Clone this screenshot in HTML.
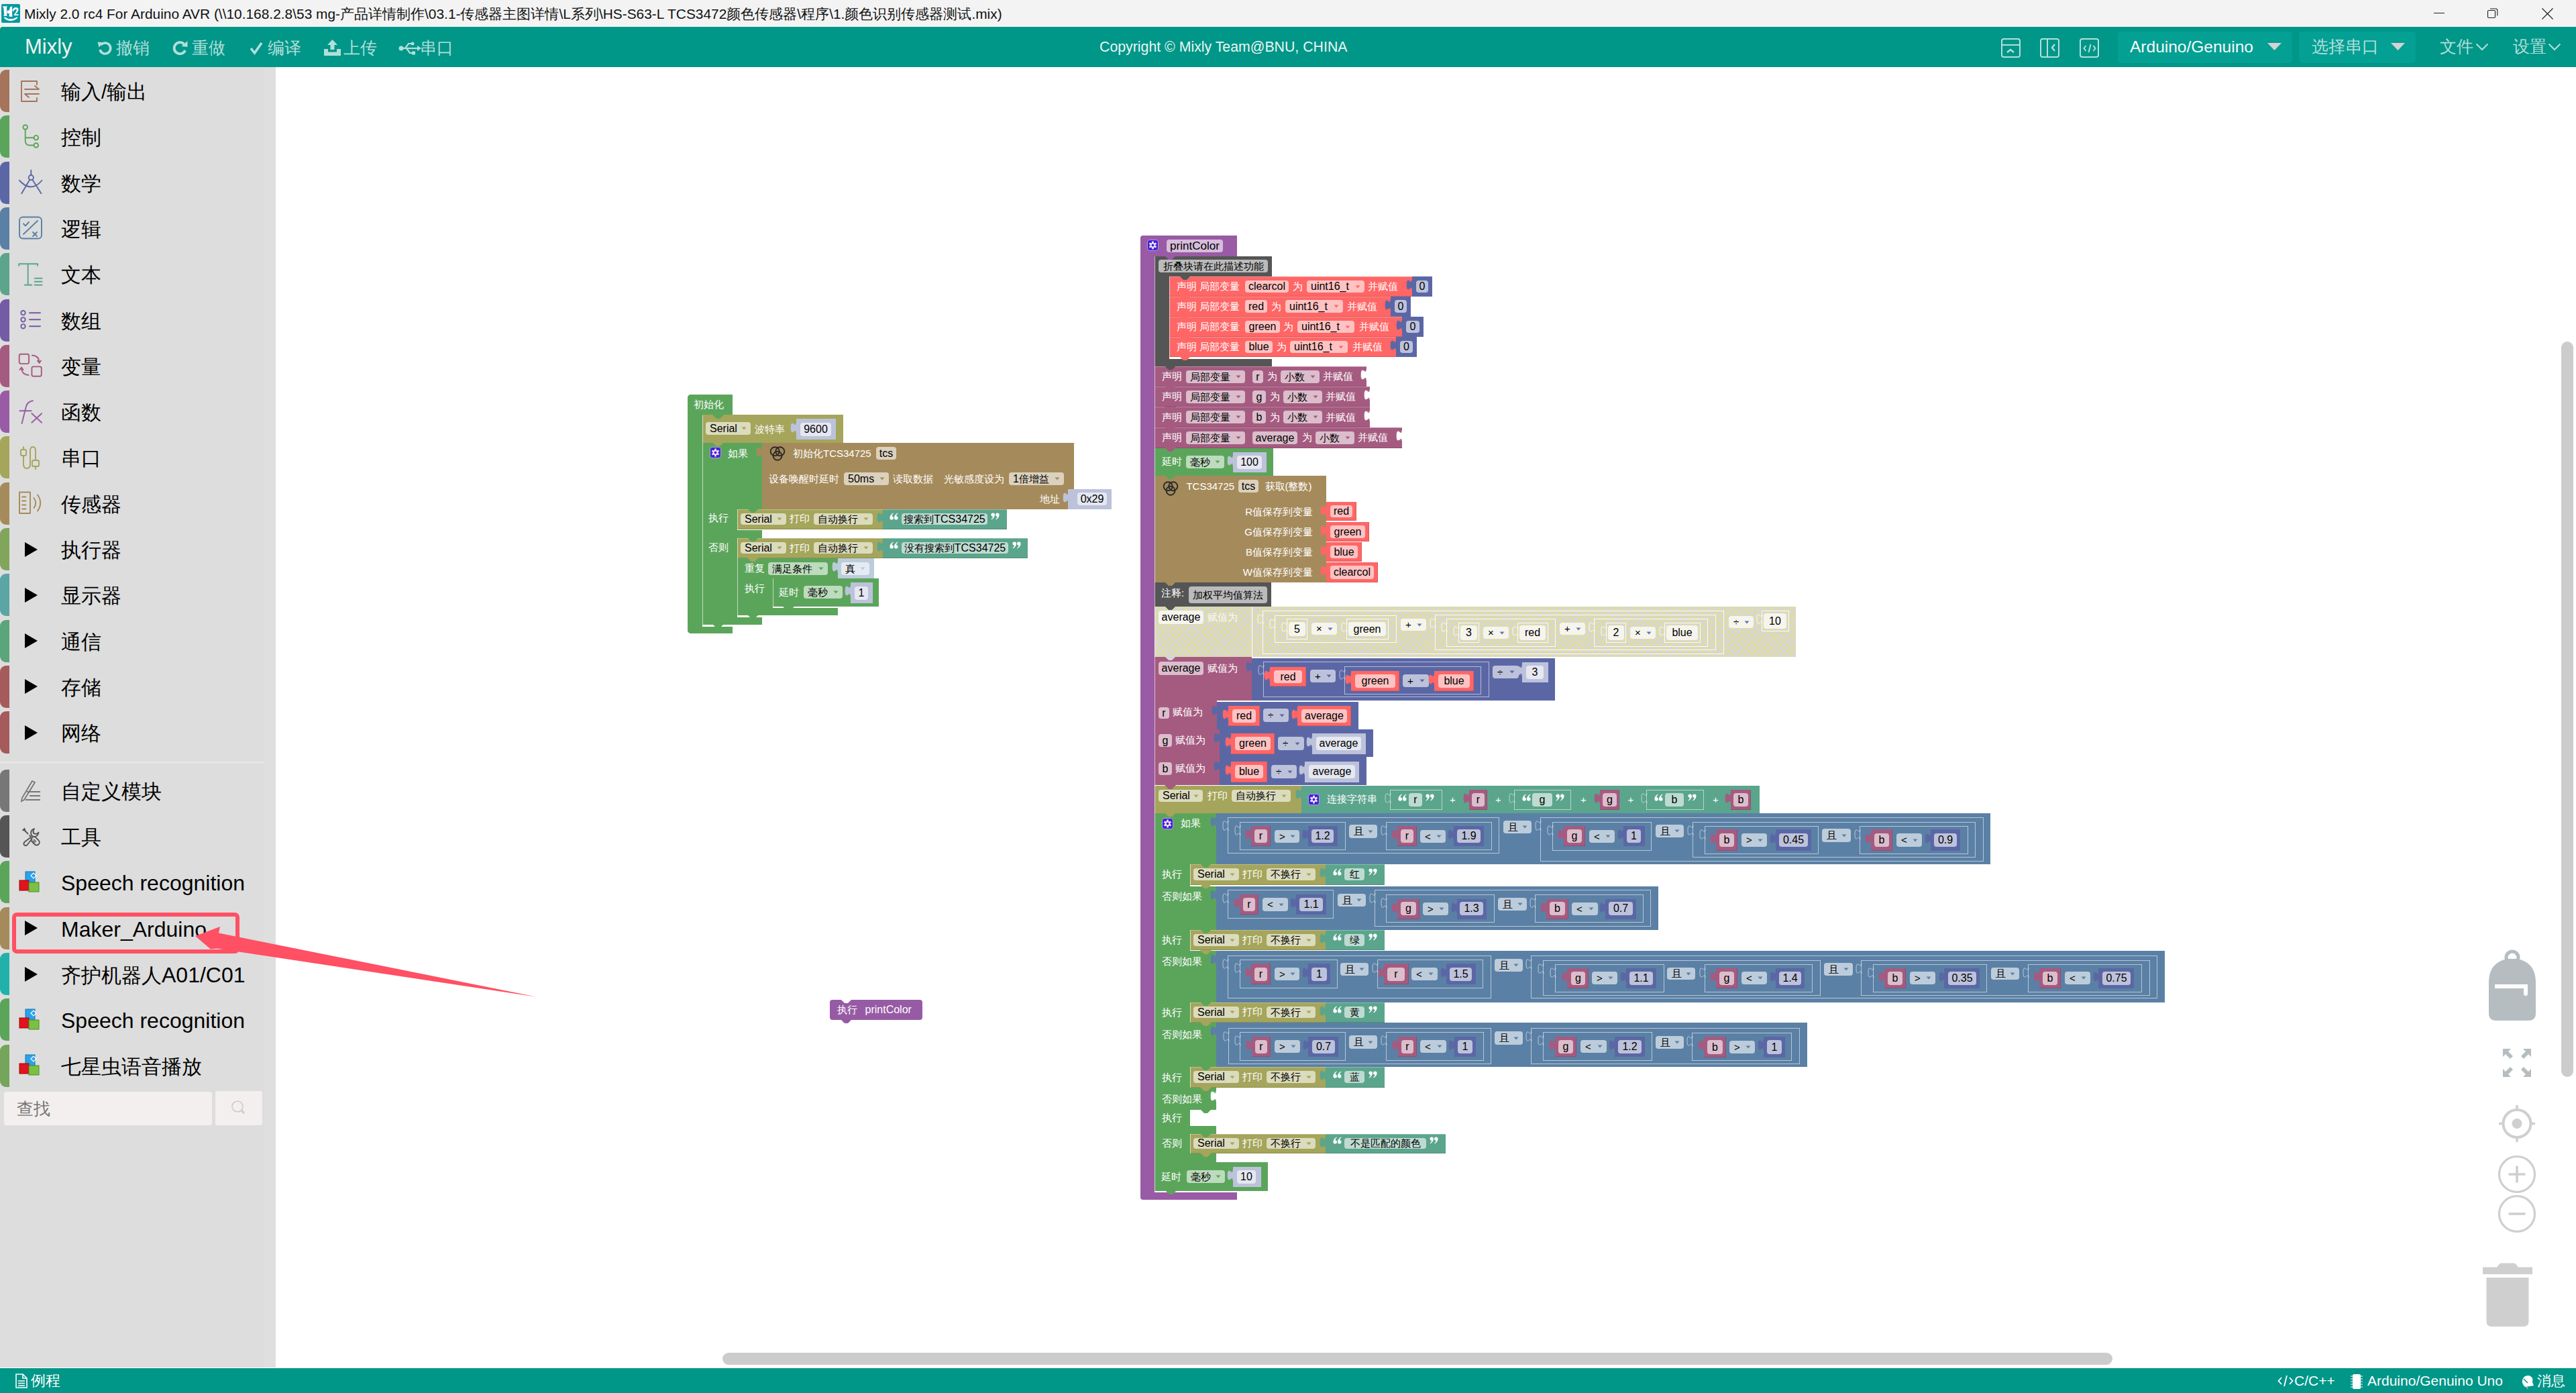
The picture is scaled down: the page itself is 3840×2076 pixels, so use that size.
<!DOCTYPE html><html><head><meta charset="utf-8"><style>html,body{margin:0;padding:0;width:3840px;height:2076px;overflow:hidden;background:#fff;}body{position:relative;font-family:"Liberation Sans",sans-serif;}.b{position:absolute;}.t{position:absolute;white-space:nowrap;}</style></head><body>
<div style="position:absolute;left:0;top:0;width:3840px;height:40px;background:#f3f3f3"></div>
<svg style="position:absolute;left:2px;top:6px" width="28" height="28" viewBox="0 0 28 28"><rect x="0" y="0" width="28" height="28" rx="2" fill="#069aa0"/><path d="M1.2 3.6 L8.9 3.2 L8.1 4.9 L8.1 16.7 L8.9 16.7 L8.9 17.8 L2.9 17.8 L3.4 16.7 L4.3 16.7 L3.2 5.2 Z" fill="#fff"/><path d="M13 4.5 L16.1 3.2 L16.1 16.8 L17 18.7 L11.5 18.7 L11.8 14 L8.4 14 L8.8 9.5 L11.8 9.5 Z" fill="#fff"/><path d="M16.4 9 Q18 5 21.5 5 Q25.6 5.3 25.6 8.5 Q25 12 20.8 15.2 L25.5 15.2 L25.5 17 L18.7 17 L19 15.5 Q22 12 22.8 9.5 Q23 7.5 21.5 7.8 Q19 8.5 17.5 11.5 Z" fill="#fff"/><path d="M3.6 20.4 L5.2 19.6 Q13.5 25.2 23.2 19.4 L24.6 20.4 Q13.5 29.6 3.6 20.4 Z" fill="#fff"/></svg>
<div style="position:absolute;left:36px;top:4px;height:34px;line-height:34px;font-size:20.7px;color:#111;white-space:nowrap"><span style="font-size:1.01em">Mixly 2.0 rc4 For Arduino AVR (\\10.168.2.8\53 mg-</span>产品详情制作<span style="font-size:1.01em">\03.1-</span>传感器主图详情<span style="font-size:1.01em">\L</span>系列<span style="font-size:1.01em">\HS-S63-L TCS3472</span>颜色传感器<span style="font-size:1.01em">\</span>程序<span style="font-size:1.01em">\1.</span>颜色识别传感器测试<span style="font-size:1.01em">.mix)</span></div>
<div style="position:absolute;left:3628px;top:19px;width:16px;height:1px;background:#222"></div>
<svg style="position:absolute;left:3706px;top:10px" width="20" height="20" viewBox="0 0 20 20"><rect x="2.5" y="5.5" width="11" height="11" rx="1.5" fill="none" stroke="#222" stroke-width="1.1"/><path d="M6 3 H14.5 Q16.8 3 16.8 5.3 V13.5" fill="none" stroke="#222" stroke-width="1.1"/></svg>
<svg style="position:absolute;left:3788px;top:11px" width="20" height="20" viewBox="0 0 20 20"><path d="M1.5 1.5 L17.5 17.5 M17.5 1.5 L1.5 17.5" stroke="#222" stroke-width="1.2"/></svg>
<div style="position:absolute;left:0;top:40px;width:3840px;height:60px;background:#009688;border-top-left-radius:4px"></div>
<div style="position:absolute;left:37px;top:48px;height:44px;line-height:44px;font-size:31px;color:#eef5f0">Mixly</div>
<div style="position:absolute;left:173px;top:52px;height:40px;line-height:40px;font-size:24.5px;color:#b2dfdb">撤销</div>
<div style="position:absolute;left:286px;top:52px;height:40px;line-height:40px;font-size:24.5px;color:#b2dfdb">重做</div>
<div style="position:absolute;left:399px;top:52px;height:40px;line-height:40px;font-size:24.5px;color:#b2dfdb">编译</div>
<div style="position:absolute;left:512px;top:52px;height:40px;line-height:40px;font-size:24.5px;color:#b2dfdb">上传</div>
<div style="position:absolute;left:626px;top:52px;height:40px;line-height:40px;font-size:24.5px;color:#b2dfdb">串口</div>
<svg style="position:absolute;left:144px;top:59px" width="24" height="24" viewBox="0 0 24 24"><path d="M6.5 8 A8 8 0 1 1 5 15" fill="none" stroke="#b2dfdb" stroke-width="3.6"/><path d="M1.5 3.5 L10.5 4.5 L3.5 11.5 Z" fill="#b2dfdb"/></svg>
<svg style="position:absolute;left:257px;top:59px" width="24" height="24" viewBox="0 0 24 24"><path d="M17.5 7 A8.5 8.5 0 1 0 19 16" fill="none" stroke="#b2dfdb" stroke-width="3.8"/><path d="M22.5 2 L22.5 11 L13.5 10 Z" fill="#b2dfdb"/></svg>
<svg style="position:absolute;left:372px;top:61px" width="20" height="22" viewBox="0 0 20 22"><path d="M2 11 L7.5 18 L18 3" fill="none" stroke="#b2dfdb" stroke-width="3.6" stroke-linejoin="miter"/></svg>
<svg style="position:absolute;left:482px;top:58px" width="27" height="26" viewBox="0 0 27 26"><path d="M13.5 1 L21 9 L16.5 9 L16.5 16 L10.5 16 L10.5 9 L6 9 Z" fill="#b2dfdb"/><path d="M1 15 L7 15 L7 19.5 L20 19.5 L20 15 L26 15 L26 25 L1 25 Z" fill="#b2dfdb"/></svg>
<svg style="position:absolute;left:594px;top:62px" width="34" height="20" viewBox="0 0 34 20"><circle cx="4" cy="10" r="3.5" fill="#b2dfdb"/><path d="M4 10 H31" stroke="#b2dfdb" stroke-width="2.2"/><path d="M34 10 L28 6 L28 14 Z" fill="#b2dfdb"/><path d="M10 10 L15 3 H20" fill="none" stroke="#b2dfdb" stroke-width="2.2"/><circle cx="21" cy="3" r="2.5" fill="#b2dfdb"/><path d="M12 10 L17 17 H21" fill="none" stroke="#b2dfdb" stroke-width="2.2"/><rect x="20" y="14.5" width="5" height="5" fill="#b2dfdb"/></svg>
<div style="position:absolute;left:1639px;top:52px;height:36px;line-height:36px;font-size:21.3px;color:#eaf6f3;white-space:nowrap">Copyright © Mixly Team@BNU, CHINA</div>
<div style="position:absolute;left:2983px;top:57px;width:25px;height:25px;border:2.2px solid #b2dfdb;border-radius:4px"></div>
<div style="position:absolute;left:3041px;top:57px;width:25px;height:25px;border:2.2px solid #b2dfdb;border-radius:4px"></div>
<div style="position:absolute;left:3100px;top:57px;width:25px;height:25px;border:2.2px solid #b2dfdb;border-radius:4px"></div>
<div style="position:absolute;left:2985px;top:66px;width:25px;height:2px;background:#b2dfdb"></div>
<svg style="position:absolute;left:2989px;top:71px" width="16" height="10" viewBox="0 0 16 10"><path d="M3 7 L8 3 L13 7" fill="none" stroke="#b2dfdb" stroke-width="2.4"/></svg>
<div style="position:absolute;left:3051px;top:59px;width:2px;height:25px;background:#b2dfdb"></div>
<svg style="position:absolute;left:3054px;top:63px" width="14" height="16" viewBox="0 0 14 16"><path d="M9 3 L5 8 L9 13" fill="none" stroke="#b2dfdb" stroke-width="2.4"/></svg>
<svg style="position:absolute;left:3102px;top:61px" width="26" height="22" viewBox="0 0 26 22"><path d="M7.5 7 L4.5 11 L7.5 15 M18.5 7 L21.5 11 L18.5 15 M14.5 5 L11.5 17" fill="none" stroke="#b2dfdb" stroke-width="2"/></svg>
<div style="position:absolute;left:3157px;top:47px;width:260px;height:47px;background:#03a093;border-radius:5px"></div>
<div style="position:absolute;left:3175px;top:50px;height:40px;line-height:40px;font-size:24.5px;color:#fafafa;white-space:nowrap">Arduino/Genuino</div>
<svg style="position:absolute;left:3380px;top:64px" width="22" height="12"><path d="M0 0 H21 L10.5 11 Z" fill="#d3d3d3"/></svg>
<div style="position:absolute;left:3427px;top:47px;width:174px;height:47px;background:#03a093;border-radius:5px"></div>
<div style="position:absolute;left:3446px;top:50px;height:40px;line-height:40px;font-size:24.5px;color:#b2dfdb;white-space:nowrap">选择串口</div>
<svg style="position:absolute;left:3564px;top:64px" width="22" height="12"><path d="M0 0 H21 L10.5 11 Z" fill="#d3d3d3"/></svg>
<div style="position:absolute;left:3637px;top:50px;height:40px;line-height:40px;font-size:24.5px;color:#b2dfdb;white-space:nowrap">文件</div>
<div style="position:absolute;left:3746px;top:50px;height:40px;line-height:40px;font-size:24.5px;color:#b2dfdb;white-space:nowrap">设置</div>
<svg style="position:absolute;left:3690px;top:64px" width="20" height="12"><path d="M1.5 1.5 L10 10 L18.5 1.5" fill="none" stroke="#b2dfdb" stroke-width="2"/></svg>
<svg style="position:absolute;left:3798px;top:64px" width="20" height="12"><path d="M1.5 1.5 L10 10 L18.5 1.5" fill="none" stroke="#b2dfdb" stroke-width="2"/></svg>
<div style="position:absolute;left:0;top:100px;width:411px;height:1938px;background:#dddddd"></div>
<div style="position:absolute;left:393px;top:100px;width:18px;height:1938px;background:#dfdfdf"></div>
<div style="position:absolute;left:0;top:104.0px;width:14px;height:63px;background:#a5745b;border-radius:9px 0 0 9px"></div>
<svg style="position:absolute;left:26px;top:115.5px" width="40" height="40" viewBox="0 0 40 40"><path d="M29 5 H6 V35 H29 M29 5 V10 M29 35 V30" fill="none" stroke="#a5745b" stroke-width="1.9" stroke-linecap="round" stroke-linejoin="round"/><path d="M11 17 H32 M26 12 L32 17 M32 24 H11 L17 29" fill="none" stroke="#a5745b" stroke-width="1.9" stroke-linecap="round" stroke-linejoin="round"/></svg>
<div style="position:absolute;left:91px;top:116.0px;height:42px;line-height:42px;font-size:29.5px;color:#000;white-space:nowrap">输入/输出</div>
<div style="position:absolute;left:0;top:172.3px;width:14px;height:63px;background:#5ba55b;border-radius:9px 0 0 9px"></div>
<svg style="position:absolute;left:26px;top:183.8px" width="40" height="40" viewBox="0 0 40 40"><circle cx="11.7" cy="5.5" r="3.3" fill="none" stroke="#5ba55b" stroke-width="1.9" stroke-linecap="round" stroke-linejoin="round"/><path d="M11.7 8.8 V25 M11.7 21.2 H24.5 M11.7 25 Q11.7 32.5 18 32.5 H24.5" fill="none" stroke="#5ba55b" stroke-width="1.9" stroke-linecap="round" stroke-linejoin="round"/><circle cx="27.8" cy="21.2" r="3.3" fill="none" stroke="#5ba55b" stroke-width="1.9" stroke-linecap="round" stroke-linejoin="round"/><circle cx="27.8" cy="32.5" r="3.3" fill="none" stroke="#5ba55b" stroke-width="1.9" stroke-linecap="round" stroke-linejoin="round"/></svg>
<div style="position:absolute;left:91px;top:184.3px;height:42px;line-height:42px;font-size:29.5px;color:#000;white-space:nowrap">控制</div>
<div style="position:absolute;left:0;top:240.6px;width:14px;height:63px;background:#5b67a5;border-radius:9px 0 0 9px"></div>
<svg style="position:absolute;left:26px;top:252.1px" width="40" height="40" viewBox="0 0 40 40"><circle cx="20.3" cy="12.6" r="3.6" fill="none" stroke="#5b67a5" stroke-width="1.9" stroke-linecap="round" stroke-linejoin="round"/><path d="M20.3 1.8 V9 M18.3 15.8 L6.3 36.3 M22.3 15.8 L35.4 36.3 M3 17 Q20.3 36 36.4 17" fill="none" stroke="#5b67a5" stroke-width="1.9" stroke-linecap="round" stroke-linejoin="round"/></svg>
<div style="position:absolute;left:91px;top:252.6px;height:42px;line-height:42px;font-size:29.5px;color:#000;white-space:nowrap">数学</div>
<div style="position:absolute;left:0;top:308.9px;width:14px;height:63px;background:#5b80a5;border-radius:9px 0 0 9px"></div>
<svg style="position:absolute;left:26px;top:320.4px" width="40" height="40" viewBox="0 0 40 40"><rect x="3" y="3.5" width="33" height="32" rx="5" fill="none" stroke="#5b80a5" stroke-width="1.9" stroke-linecap="round" stroke-linejoin="round"/><path d="M9 29 L30 9 M9 13.5 L12 16.5 L17 11 M23 26 L29 32 M29 26 L23 32" fill="none" stroke="#5b80a5" stroke-width="1.9" stroke-linecap="round" stroke-linejoin="round"/></svg>
<div style="position:absolute;left:91px;top:320.9px;height:42px;line-height:42px;font-size:29.5px;color:#000;white-space:nowrap">逻辑</div>
<div style="position:absolute;left:0;top:377.2px;width:14px;height:63px;background:#5ba58c;border-radius:9px 0 0 9px"></div>
<svg style="position:absolute;left:26px;top:388.7px" width="40" height="40" viewBox="0 0 40 40"><path d="M2.2 4.3 H30 M2.2 4.3 V7 M30 4.3 V7 M15.7 4.3 V35.8 M10.8 35.8 H21.4 M25.7 25.8 H36.6 M25.7 30.7 H36.6 M25.7 35.8 H36.6" fill="none" stroke="#5ba58c" stroke-width="1.9" stroke-linecap="round" stroke-linejoin="round"/></svg>
<div style="position:absolute;left:91px;top:389.2px;height:42px;line-height:42px;font-size:29.5px;color:#000;white-space:nowrap">文本</div>
<div style="position:absolute;left:0;top:445.5px;width:14px;height:63px;background:#745ba5;border-radius:9px 0 0 9px"></div>
<svg style="position:absolute;left:26px;top:457.0px" width="40" height="40" viewBox="0 0 40 40"><circle cx="8.5" cy="9.2" r="3.2" fill="none" stroke="#745ba5" stroke-width="1.9" stroke-linecap="round" stroke-linejoin="round"/><circle cx="8.5" cy="19.3" r="3.2" fill="none" stroke="#745ba5" stroke-width="1.9" stroke-linecap="round" stroke-linejoin="round"/><circle cx="8.5" cy="29.3" r="3.2" fill="none" stroke="#745ba5" stroke-width="1.9" stroke-linecap="round" stroke-linejoin="round"/><path d="M18 9.2 H34 M18 19.3 H34 M18 29.3 H34" fill="none" stroke="#745ba5" stroke-width="1.9" stroke-linecap="round" stroke-linejoin="round"/></svg>
<div style="position:absolute;left:91px;top:457.5px;height:42px;line-height:42px;font-size:29.5px;color:#000;white-space:nowrap">数组</div>
<div style="position:absolute;left:0;top:513.8px;width:14px;height:63px;background:#a55b80;border-radius:9px 0 0 9px"></div>
<svg style="position:absolute;left:26px;top:525.3px" width="40" height="40" viewBox="0 0 40 40"><rect x="2.7" y="2.7" width="14.4" height="14.4" rx="2.5" fill="none" stroke="#a55b80" stroke-width="1.9" stroke-linecap="round" stroke-linejoin="round"/><rect x="21.4" y="21.4" width="14.4" height="14.4" rx="2.5" fill="none" stroke="#a55b80" stroke-width="1.9" stroke-linecap="round" stroke-linejoin="round"/><path d="M22 4.5 Q32 5 32.5 15 M30 12.5 L32.5 16 L35 12.5 M16.5 34 Q6.5 33.5 6 23.5 M3.5 26 L6 22.5 L8.5 26" fill="none" stroke="#a55b80" stroke-width="1.9" stroke-linecap="round" stroke-linejoin="round"/></svg>
<div style="position:absolute;left:91px;top:525.8px;height:42px;line-height:42px;font-size:29.5px;color:#000;white-space:nowrap">变量</div>
<div style="position:absolute;left:0;top:582.1px;width:14px;height:63px;background:#995ba5;border-radius:9px 0 0 9px"></div>
<svg style="position:absolute;left:26px;top:593.6px" width="40" height="40" viewBox="0 0 40 40"><path d="M6.6 37 L12.6 13 Q14.5 4.5 22.9 3.2 M3.5 18.3 H20.6 M21.4 22.2 L36.1 35.8 M36.1 22.2 L21.4 35.8" fill="none" stroke="#995ba5" stroke-width="1.9" stroke-linecap="round" stroke-linejoin="round"/></svg>
<div style="position:absolute;left:91px;top:594.1px;height:42px;line-height:42px;font-size:29.5px;color:#000;white-space:nowrap">函数</div>
<div style="position:absolute;left:0;top:650.4px;width:14px;height:63px;background:#a5a55b;border-radius:9px 0 0 9px"></div>
<svg style="position:absolute;left:26px;top:661.9px" width="40" height="40" viewBox="0 0 40 40"><rect x="5" y="8" width="8" height="9" rx="2" fill="none" stroke="#a5a55b" stroke-width="1.9" stroke-linecap="round" stroke-linejoin="round"/><path d="M9 4 V8 M9 17 V30 Q9 36 14 36 Q19 36 19 30 V10 Q19 4 23 4 Q27 4 27 10 V24" fill="none" stroke="#a5a55b" stroke-width="1.9" stroke-linecap="round" stroke-linejoin="round"/><rect x="22" y="24" width="10" height="9" rx="2" fill="none" stroke="#a5a55b" stroke-width="1.9" stroke-linecap="round" stroke-linejoin="round"/><path d="M27 33 V37" fill="none" stroke="#a5a55b" stroke-width="1.9" stroke-linecap="round" stroke-linejoin="round"/></svg>
<div style="position:absolute;left:91px;top:662.4px;height:42px;line-height:42px;font-size:29.5px;color:#000;white-space:nowrap">串口</div>
<div style="position:absolute;left:0;top:718.7px;width:14px;height:63px;background:#a58b5b;border-radius:9px 0 0 9px"></div>
<svg style="position:absolute;left:26px;top:730.2px" width="40" height="40" viewBox="0 0 40 40"><path d="M3 3.5 H19 V35 H3 Z M7 10.5 H12.5 M7 16.5 H12.5 M7 22.5 H12.5 M7 28.5 H12.5 M24.5 12 Q30 19.3 24.5 27 M30 7.5 Q38.5 19.3 30 31.5" fill="none" stroke="#a58b5b" stroke-width="1.9" stroke-linecap="round" stroke-linejoin="round"/></svg>
<div style="position:absolute;left:91px;top:730.7px;height:42px;line-height:42px;font-size:29.5px;color:#000;white-space:nowrap">传感器</div>
<div style="position:absolute;left:0;top:787.0px;width:14px;height:63px;background:#80a55b;border-radius:9px 0 0 9px"></div>
<svg style="position:absolute;left:36px;top:806.5px" width="22" height="24"><path d="M1 1 L20 12 L1 23 Z" fill="#000"/></svg>
<div style="position:absolute;left:91px;top:799.0px;height:42px;line-height:42px;font-size:29.5px;color:#000;white-space:nowrap">执行器</div>
<div style="position:absolute;left:0;top:855.3px;width:14px;height:63px;background:#5ba5a5;border-radius:9px 0 0 9px"></div>
<svg style="position:absolute;left:36px;top:874.8px" width="22" height="24"><path d="M1 1 L20 12 L1 23 Z" fill="#000"/></svg>
<div style="position:absolute;left:91px;top:867.3px;height:42px;line-height:42px;font-size:29.5px;color:#000;white-space:nowrap">显示器</div>
<div style="position:absolute;left:0;top:923.6px;width:14px;height:63px;background:#5ba57a;border-radius:9px 0 0 9px"></div>
<svg style="position:absolute;left:36px;top:943.1px" width="22" height="24"><path d="M1 1 L20 12 L1 23 Z" fill="#000"/></svg>
<div style="position:absolute;left:91px;top:935.6px;height:42px;line-height:42px;font-size:29.5px;color:#000;white-space:nowrap">通信</div>
<div style="position:absolute;left:0;top:991.9px;width:14px;height:63px;background:#a55b5b;border-radius:9px 0 0 9px"></div>
<svg style="position:absolute;left:36px;top:1011.4px" width="22" height="24"><path d="M1 1 L20 12 L1 23 Z" fill="#000"/></svg>
<div style="position:absolute;left:91px;top:1003.9px;height:42px;line-height:42px;font-size:29.5px;color:#000;white-space:nowrap">存储</div>
<div style="position:absolute;left:0;top:1060.2px;width:14px;height:63px;background:#a55b5b;border-radius:9px 0 0 9px"></div>
<svg style="position:absolute;left:36px;top:1079.7px" width="22" height="24"><path d="M1 1 L20 12 L1 23 Z" fill="#000"/></svg>
<div style="position:absolute;left:91px;top:1072.2px;height:42px;line-height:42px;font-size:29.5px;color:#000;white-space:nowrap">网络</div>
<div style="position:absolute;left:0;top:1135px;width:393px;height:1.5px;background:#e8e8e8"></div>
<div style="position:absolute;left:0;top:1146.8px;width:14px;height:63px;background:#777777;border-radius:9px 0 0 9px"></div>
<svg style="position:absolute;left:26px;top:1158.3px" width="40" height="40" viewBox="0 0 40 40"><path d="M10 34 L6 36 L7 31 L22 6 L26 8 Z M14 22 H34 M18 28 H34 M12 34 H34" fill="none" stroke="#777" stroke-width="1.8"/></svg>
<div style="position:absolute;left:91px;top:1158.8px;height:42px;line-height:42px;font-size:29.5px;color:#000;white-space:nowrap">自定义模块</div>
<div style="position:absolute;left:0;top:1215.1px;width:14px;height:63px;background:#555555;border-radius:9px 0 0 9px"></div>
<svg style="position:absolute;left:26px;top:1226.6px" width="40" height="40" viewBox="0 0 40 40"><path d="M7.3 10.2 L10.6 7 L12.4 11.9 Z" fill="#555" stroke="#555" stroke-width="1" stroke-linejoin="round"/><path d="M11.5 11.5 L16.2 16.2 M17.6 17.6 L20.6 20.6" stroke="#555" stroke-width="1.9"/><rect x="-7" y="-4.2" width="14" height="8.4" rx="4.2" transform="translate(26.6 26.3) rotate(45)" fill="none" stroke="#555" stroke-width="1.9"/><path d="M24.2 23.8 L28 27.6 M22.8 25.5 L26.3 29" stroke="#555" stroke-width="1.4"/><path d="M20.3 20.5 L11 27.5 Q8 30.5 10.5 32.5 Q13 34.5 15.5 31 L22 22.5" fill="none" stroke="#555" stroke-width="1.9"/><path d="M21.5 18.5 Q18.5 14 22 9.5 L25 8 Q22.5 11.5 24 14.5 Q26.5 17 30 15 L31.5 13.5 Q31 18.5 26.5 19.8 Q23.5 20.5 21.5 18.5 Z" fill="none" stroke="#555" stroke-width="1.9" stroke-linejoin="round"/></svg>
<div style="position:absolute;left:91px;top:1227.1px;height:42px;line-height:42px;font-size:29.5px;color:#000;white-space:nowrap">工具</div>
<div style="position:absolute;left:0;top:1283.4px;width:14px;height:63px;background:#5ba55b;border-radius:9px 0 0 9px"></div>
<svg style="position:absolute;left:26px;top:1294.9px" width="40" height="40" viewBox="0 0 40 40"><rect x="12" y="4" width="14" height="16" fill="#29a3e8" stroke="#1a73b8" stroke-width="1"/><rect x="3" y="17" width="14" height="15" fill="#e0141e" stroke="#a00" stroke-width="1"/><rect x="17" y="20" width="15" height="14" fill="#7ac143" stroke="#4a8a2a" stroke-width="1"/><path d="M24 6 L28 10 L24 14 L20 10 Z" fill="none" stroke="#fff" stroke-width="1.2"/></svg>
<div style="position:absolute;left:91px;top:1295.4px;height:42px;line-height:42px;font-size:29.5px;color:#000;white-space:nowrap"><span style="font-size:32px">Speech recognition</span></div>
<div style="position:absolute;left:0;top:1351.7px;width:14px;height:63px;background:#a58b5b;border-radius:9px 0 0 9px"></div>
<svg style="position:absolute;left:36px;top:1371.2px" width="22" height="24"><path d="M1 1 L20 12 L1 23 Z" fill="#000"/></svg>
<div style="position:absolute;left:91px;top:1363.7px;height:42px;line-height:42px;font-size:29.5px;color:#000;white-space:nowrap"><span style="font-size:32px">Maker_Arduino</span></div>
<div style="position:absolute;left:0;top:1420.0px;width:14px;height:63px;background:#20b2aa;border-radius:9px 0 0 9px"></div>
<svg style="position:absolute;left:36px;top:1439.5px" width="22" height="24"><path d="M1 1 L20 12 L1 23 Z" fill="#000"/></svg>
<div style="position:absolute;left:91px;top:1432.0px;height:42px;line-height:42px;font-size:29.5px;color:#000;white-space:nowrap">齐护机器人<span style="font-size:32px">A01/C01</span></div>
<div style="position:absolute;left:0;top:1488.3px;width:14px;height:63px;background:#5ba55b;border-radius:9px 0 0 9px"></div>
<svg style="position:absolute;left:26px;top:1499.8px" width="40" height="40" viewBox="0 0 40 40"><rect x="12" y="4" width="14" height="16" fill="#29a3e8" stroke="#1a73b8" stroke-width="1"/><rect x="3" y="17" width="14" height="15" fill="#e0141e" stroke="#a00" stroke-width="1"/><rect x="17" y="20" width="15" height="14" fill="#7ac143" stroke="#4a8a2a" stroke-width="1"/><path d="M24 6 L28 10 L24 14 L20 10 Z" fill="none" stroke="#fff" stroke-width="1.2"/></svg>
<div style="position:absolute;left:91px;top:1500.3px;height:42px;line-height:42px;font-size:29.5px;color:#000;white-space:nowrap"><span style="font-size:32px">Speech recognition</span></div>
<div style="position:absolute;left:0;top:1556.6px;width:14px;height:63px;background:#74a55b;border-radius:9px 0 0 9px"></div>
<svg style="position:absolute;left:26px;top:1568.1px" width="40" height="40" viewBox="0 0 40 40"><rect x="12" y="4" width="14" height="16" fill="#29a3e8" stroke="#1a73b8" stroke-width="1"/><rect x="3" y="17" width="14" height="15" fill="#e0141e" stroke="#a00" stroke-width="1"/><rect x="17" y="20" width="15" height="14" fill="#7ac143" stroke="#4a8a2a" stroke-width="1"/><path d="M24 6 L28 10 L24 14 L20 10 Z" fill="none" stroke="#fff" stroke-width="1.2"/></svg>
<div style="position:absolute;left:91px;top:1568.6px;height:42px;line-height:42px;font-size:29.5px;color:#000;white-space:nowrap">七星虫语音播放</div>
<div style="position:absolute;left:6px;top:1627px;width:310px;height:50px;background:#f2efee;border-radius:3px"></div>
<div style="position:absolute;left:25px;top:1634px;height:36px;line-height:36px;font-size:25px;color:#757575">查找</div>
<div style="position:absolute;left:321px;top:1626px;width:70px;height:51px;background:#f2efee;border-radius:3px"></div>
<svg style="position:absolute;left:340px;top:1636px" width="30" height="30"><circle cx="14" cy="13" r="8" fill="none" stroke="#ccc" stroke-width="1.6"/><path d="M19.5 18.5 L24 23" stroke="#ccc" stroke-width="3"/></svg>
<div style="position:absolute;left:0;top:2039px;width:3840px;height:37px;background:#009688"></div>
<svg style="position:absolute;left:22px;top:2046px" width="20" height="24" viewBox="0 0 20 24"><path d="M2 2 H12 L18 8 V22 H2 Z M12 2 V8 H18 M5 12 H15 M5 15.5 H15 M5 19 H15" fill="none" stroke="#ffffff" stroke-width="1.6"/></svg>
<div style="position:absolute;left:46px;top:2041px;height:34px;line-height:34px;font-size:21.5px;color:#ffffff">例程</div>
<svg style="position:absolute;left:3395px;top:2047px" width="24" height="22" viewBox="0 0 24 22"><path d="M6 6 L1.5 11 L6 16 M18 6 L22.5 11 L18 16 M14 3 L10 19" fill="none" stroke="#ffffff" stroke-width="1.8"/></svg>
<div style="position:absolute;left:3420px;top:2041px;height:34px;line-height:34px;font-size:21px;color:#ffffff;white-space:nowrap">C/C++</div>
<svg style="position:absolute;left:3503px;top:2046px" width="20" height="26" viewBox="0 0 20 26"><rect x="4" y="2" width="12" height="22" rx="2" fill="#ffffff"/><path d="M1 5 H4 M1 9 H4 M1 13 H4 M1 17 H4 M1 21 H4 M16 5 H19 M16 9 H19 M16 13 H19 M16 17 H19 M16 21 H19" stroke="#ffffff" stroke-width="1.2"/></svg>
<div style="position:absolute;left:3529px;top:2041px;height:34px;line-height:34px;font-size:21px;color:#ffffff;white-space:nowrap">Arduino/Genuino Uno</div>
<svg style="position:absolute;left:3756px;top:2047px" width="24" height="24" viewBox="0 0 24 24"><path d="M4 10 Q6 2 14 3 Q21 5 19 13 L21 18 L8 20 Q3 15 4 10 Z M10 20 Q10 23 13 22" fill="#ffffff"/><path d="M6 8 L12 14" stroke="#009688" stroke-width="1.5"/></svg>
<div style="position:absolute;left:3782px;top:2041px;height:34px;line-height:34px;font-size:21px;color:#ffffff;white-space:nowrap">消息</div>
<div class="b" style="left:1025.0px;top:588.0px;width:67.0px;height:30.0px;background:#5ba55b;border-radius:5px 0 0 0;"></div>
<div class="b" style="left:1025.0px;top:588.0px;width:22.0px;height:356.0px;background:#5ba55b;border-radius:5px 0 0 5px;"></div>
<div class="b" style="left:1025.0px;top:934.0px;width:67.0px;height:10.0px;background:#5ba55b;border-radius:0 0 0 5px;"></div>
<div class="t" style="left:1034.0px;top:591.0px;height:24px;line-height:24px;font-size:15px;color:#fff">初始化</div>
<div class="b" style="left:1047.0px;top:618.0px;width:210.0px;height:42.0px;background:#a5a55b;"></div>
<div class="b" style="left:1052.0px;top:629.0px;width:67.0px;height:19.0px;background:#dbdbbd;border-radius:4px;line-height:19.0px;padding-left:6px;box-sizing:border-box;font-size:15px;color:#000;white-space:nowrap;overflow:hidden"><span style="font-size:1.067em">Serial</span></div>
<svg class="b" style="left:1105.0px;top:636.0px" width="8" height="5"><path d="M0.5 0.5 H7.5 L4 4.5 Z" fill="#a5a55b"/></svg>
<div class="t" style="left:1124.6px;top:627.5px;height:24px;line-height:24px;font-size:15px;color:#fff">波特率</div>
<svg class="b" style="left:1178.4px;top:624.5px" width="10" height="22"><path d="M9 5 C9 15 1 -3 1 12.5 C1 28 9 10 9 20 Z" fill="#bdc2db" stroke="#bdc2db" stroke-width="0.6"/></svg>
<div class="b" style="left:1187.0px;top:624.0px;width:59.0px;height:31.0px;background:#bdc2db;"></div>
<div class="b" style="left:1193.0px;top:630.0px;width:46.0px;height:20.0px;background:#e5e7f1;border-radius:4px;line-height:20.0px;text-align:center;font-size:15px;color:#000;white-space:nowrap"><span style="font-size:1.067em">9600</span></div>
<svg class="b" style="left:1062.0px;top:617.5px" width="17" height="7"><path d="M0 0 H17 L11 6 H6 Z" fill="#5ba55b"/></svg>
<div class="b" style="left:1047.0px;top:660.0px;width:89.0px;height:99.0px;background:#5ba55b;"></div>
<div class="b" style="left:1047.0px;top:660.0px;width:52.0px;height:271.0px;background:#5ba55b;"></div>
<div class="b" style="left:1047.0px;top:790.0px;width:89.0px;height:12.0px;background:#5ba55b;"></div>
<div class="b" style="left:1047.0px;top:920.0px;width:89.0px;height:11.0px;background:#5ba55b;"></div>
<svg class="b" style="left:1062.0px;top:658.7px" width="17" height="7"><path d="M0 0 H17 L11 6 H6 Z" fill="#a5a55b"/></svg>
<svg class="b" style="left:1057.5px;top:666.0px" width="17" height="17" viewBox="0 0 17 17"><rect x="0.5" y="0.5" width="16" height="16" rx="3.5" fill="#4020dc" stroke="#c8b0e0" stroke-width="0.8"/><rect x="7.2" y="2.6" width="2.6" height="3.2" rx="0.6" transform="rotate(0 8.5 8.5)" fill="#f2e6f2"/><rect x="7.2" y="2.6" width="2.6" height="3.2" rx="0.6" transform="rotate(60 8.5 8.5)" fill="#f2e6f2"/><rect x="7.2" y="2.6" width="2.6" height="3.2" rx="0.6" transform="rotate(120 8.5 8.5)" fill="#f2e6f2"/><rect x="7.2" y="2.6" width="2.6" height="3.2" rx="0.6" transform="rotate(180 8.5 8.5)" fill="#f2e6f2"/><rect x="7.2" y="2.6" width="2.6" height="3.2" rx="0.6" transform="rotate(240 8.5 8.5)" fill="#f2e6f2"/><rect x="7.2" y="2.6" width="2.6" height="3.2" rx="0.6" transform="rotate(300 8.5 8.5)" fill="#f2e6f2"/><circle cx="8.5" cy="8.5" r="3.8" fill="#f2e6f2"/><circle cx="8.5" cy="8.5" r="1.9" fill="#4020dc"/></svg>
<div class="t" style="left:1085.0px;top:663.5px;height:24px;line-height:24px;font-size:15px;color:#fff">如果</div>
<div class="t" style="left:1056.0px;top:760.4px;height:24px;line-height:24px;font-size:15px;color:#fff">执行</div>
<div class="t" style="left:1056.0px;top:804.0px;height:24px;line-height:24px;font-size:15px;color:#fff">否则</div>
<svg class="b" style="left:1126.5px;top:660.5px" width="10" height="22"><path d="M9 5 C9 15 1 -3 1 12.5 C1 28 9 10 9 20 Z" fill="#a58b5b" stroke="#a58b5b" stroke-width="0.6"/></svg>
<div class="b" style="left:1136.0px;top:660.0px;width:465.0px;height:99.0px;background:#a58b5b;"></div>
<svg class="b" style="left:1145.5px;top:663.0px" width="26" height="26" viewBox="0 0 24 24"><circle cx="8.5" cy="9" r="6" fill="none" stroke="#2b2b2b" stroke-width="1.8"/><circle cx="15.5" cy="9" r="6" fill="none" stroke="#2b2b2b" stroke-width="1.8"/><circle cx="12" cy="15" r="6" fill="none" stroke="#2b2b2b" stroke-width="1.8"/></svg>
<div class="t" style="left:1182.0px;top:663.5px;height:24px;line-height:24px;font-size:15px;color:#fff">初始化<span style="font-size:1.000em">TCS34725</span></div>
<div class="b" style="left:1306.0px;top:666.0px;width:30.0px;height:19.0px;background:#dbd1bd;border-radius:4px;line-height:19.0px;text-align:center;font-size:15px;color:#000;white-space:nowrap"><span style="font-size:1.067em">tcs</span></div>
<div class="t" style="left:1146.4px;top:701.7px;height:24px;line-height:24px;font-size:15px;color:#fff">设备唤醒时延时</div>
<div class="b" style="left:1258.0px;top:704.0px;width:67.0px;height:19.0px;background:#dbd1bd;border-radius:4px;line-height:19.0px;padding-left:6px;box-sizing:border-box;font-size:15px;color:#000;white-space:nowrap;overflow:hidden"><span style="font-size:1.067em">50ms</span></div>
<svg class="b" style="left:1311.0px;top:711.0px" width="8" height="5"><path d="M0.5 0.5 H7.5 L4 4.5 Z" fill="#a58b5b"/></svg>
<div class="t" style="left:1330.6px;top:701.7px;height:24px;line-height:24px;font-size:15px;color:#fff">读取数据</div>
<div class="t" style="left:1407.0px;top:701.7px;height:24px;line-height:24px;font-size:15px;color:#fff">光敏感度设为</div>
<div class="b" style="left:1504.0px;top:704.0px;width:82.0px;height:19.0px;background:#dbd1bd;border-radius:4px;line-height:19.0px;padding-left:6px;box-sizing:border-box;font-size:15px;color:#000;white-space:nowrap;overflow:hidden"><span style="font-size:1.067em">1</span>倍增益</div>
<svg class="b" style="left:1572.0px;top:711.0px" width="8" height="5"><path d="M0.5 0.5 H7.5 L4 4.5 Z" fill="#a58b5b"/></svg>
<div class="t" style="left:1550.0px;top:731.7px;height:24px;line-height:24px;font-size:15px;color:#fff">地址</div>
<svg class="b" style="left:1583.5px;top:728.7px" width="10" height="22"><path d="M9 5 C9 15 1 -3 1 12.5 C1 28 9 10 9 20 Z" fill="#bdc2db" stroke="#bdc2db" stroke-width="0.6"/></svg>
<div class="b" style="left:1592.0px;top:729.0px;width:65.0px;height:30.0px;background:#bdc2db;"></div>
<div class="b" style="left:1606.0px;top:734.0px;width:44.0px;height:19.0px;background:#e5e7f1;border-radius:4px;line-height:19.0px;text-align:center;font-size:15px;color:#000;white-space:nowrap"><span style="font-size:1.067em">0x29</span></div>
<div class="b" style="left:1099.0px;top:759.0px;width:217.0px;height:30.0px;background:#a5a55b;box-shadow:inset 0 1px 0 rgba(255,255,255,0.28),inset 0 -1px 0 rgba(0,0,0,0.13);"></div>
<div class="b" style="left:1104.0px;top:765.0px;width:68.0px;height:17.0px;background:#dbdbbd;border-radius:4px;line-height:17.0px;padding-left:6px;box-sizing:border-box;font-size:15px;color:#000;white-space:nowrap;overflow:hidden"><span style="font-size:1.067em">Serial</span></div>
<svg class="b" style="left:1158.0px;top:771.0px" width="8" height="5"><path d="M0.5 0.5 H7.5 L4 4.5 Z" fill="#a5a55b"/></svg>
<div class="t" style="left:1176.7px;top:761.2px;height:24px;line-height:24px;font-size:15px;color:#fff">打印</div>
<div class="b" style="left:1213.0px;top:765.0px;width:88.0px;height:17.0px;background:#dbdbbd;border-radius:4px;line-height:17.0px;padding-left:6px;box-sizing:border-box;font-size:15px;color:#000;white-space:nowrap;overflow:hidden">自动换行</div>
<svg class="b" style="left:1287.0px;top:771.0px" width="8" height="5"><path d="M0.5 0.5 H7.5 L4 4.5 Z" fill="#a5a55b"/></svg>
<svg class="b" style="left:1306.6px;top:758.7px" width="10" height="22"><path d="M9 5 C9 15 1 -3 1 12.5 C1 28 9 10 9 20 Z" fill="#a5a55b" stroke="#a5a55b" stroke-width="0.6"/></svg>
<svg class="b" style="left:1306.6px;top:758.7px" width="10" height="22"><path d="M9 5 C9 15 1 -3 1 12.5 C1 28 9 10 9 20 Z" fill="#5ba58c" stroke="#5ba58c" stroke-width="0.6"/></svg>
<div class="b" style="left:1316.0px;top:759.0px;width:185.0px;height:30.0px;background:#5ba58c;box-shadow:inset 0 1px 0 rgba(255,255,255,0.28),inset 0 -1px 0 rgba(0,0,0,0.13);"></div>
<svg class="b" style="left:1326.1px;top:763.7px" width="13" height="11" viewBox="0 0 13 11"><path d="M3.2 10.6 C1.3 10.6 0.4 9.2 0.4 7.9 C0.4 5.2 1.8 2.4 5.2 0.4 L5.9 1.3 C4.2 2.6 3.4 3.8 3.5 5.2 C5 5.3 6 6.4 6 7.9 C6 9.5 4.8 10.6 3.2 10.6 Z" fill="#fff"/><path d="M3.2 10.6 C1.3 10.6 0.4 9.2 0.4 7.9 C0.4 5.2 1.8 2.4 5.2 0.4 L5.9 1.3 C4.2 2.6 3.4 3.8 3.5 5.2 C5 5.3 6 6.4 6 7.9 C6 9.5 4.8 10.6 3.2 10.6 Z" transform="translate(6.6 0)" fill="#fff"/></svg>
<div class="b" style="left:1344.0px;top:765.0px;width:128.0px;height:17.0px;background:#bddbd1;border-radius:4px;line-height:17.0px;text-align:center;font-size:15px;color:#000;white-space:nowrap">搜索到<span style="font-size:1.067em">TCS34725</span></div>
<svg class="b" style="left:1477.0px;top:763.7px" width="13" height="11" viewBox="0 0 13 11"><g transform="rotate(180 6.5 5.5)"><path d="M3.2 10.6 C1.3 10.6 0.4 9.2 0.4 7.9 C0.4 5.2 1.8 2.4 5.2 0.4 L5.9 1.3 C4.2 2.6 3.4 3.8 3.5 5.2 C5 5.3 6 6.4 6 7.9 C6 9.5 4.8 10.6 3.2 10.6 Z" fill="#fff"/><path d="M3.2 10.6 C1.3 10.6 0.4 9.2 0.4 7.9 C0.4 5.2 1.8 2.4 5.2 0.4 L5.9 1.3 C4.2 2.6 3.4 3.8 3.5 5.2 C5 5.3 6 6.4 6 7.9 C6 9.5 4.8 10.6 3.2 10.6 Z" transform="translate(6.6 0)" fill="#fff"/></g></svg>
<svg class="b" style="left:1113.7px;top:757.7px" width="17" height="7"><path d="M0 0 H17 L11 6 H6 Z" fill="#5ba55b"/></svg>
<div class="b" style="left:1099.0px;top:802.0px;width:217.0px;height:30.0px;background:#a5a55b;box-shadow:inset 0 1px 0 rgba(255,255,255,0.28),inset 0 -1px 0 rgba(0,0,0,0.13);"></div>
<div class="b" style="left:1104.0px;top:808.0px;width:68.0px;height:17.0px;background:#dbdbbd;border-radius:4px;line-height:17.0px;padding-left:6px;box-sizing:border-box;font-size:15px;color:#000;white-space:nowrap;overflow:hidden"><span style="font-size:1.067em">Serial</span></div>
<svg class="b" style="left:1158.0px;top:814.0px" width="8" height="5"><path d="M0.5 0.5 H7.5 L4 4.5 Z" fill="#a5a55b"/></svg>
<div class="t" style="left:1176.7px;top:804.9px;height:24px;line-height:24px;font-size:15px;color:#fff">打印</div>
<div class="b" style="left:1213.0px;top:808.0px;width:88.0px;height:17.0px;background:#dbdbbd;border-radius:4px;line-height:17.0px;padding-left:6px;box-sizing:border-box;font-size:15px;color:#000;white-space:nowrap;overflow:hidden">自动换行</div>
<svg class="b" style="left:1287.0px;top:814.0px" width="8" height="5"><path d="M0.5 0.5 H7.5 L4 4.5 Z" fill="#a5a55b"/></svg>
<svg class="b" style="left:1306.6px;top:802.4px" width="10" height="22"><path d="M9 5 C9 15 1 -3 1 12.5 C1 28 9 10 9 20 Z" fill="#a5a55b" stroke="#a5a55b" stroke-width="0.6"/></svg>
<svg class="b" style="left:1306.6px;top:802.4px" width="10" height="22"><path d="M9 5 C9 15 1 -3 1 12.5 C1 28 9 10 9 20 Z" fill="#5ba58c" stroke="#5ba58c" stroke-width="0.6"/></svg>
<div class="b" style="left:1316.0px;top:802.0px;width:216.0px;height:30.0px;background:#5ba58c;box-shadow:inset 0 1px 0 rgba(255,255,255,0.28),inset 0 -1px 0 rgba(0,0,0,0.13);"></div>
<svg class="b" style="left:1326.1px;top:807.4px" width="13" height="11" viewBox="0 0 13 11"><path d="M3.2 10.6 C1.3 10.6 0.4 9.2 0.4 7.9 C0.4 5.2 1.8 2.4 5.2 0.4 L5.9 1.3 C4.2 2.6 3.4 3.8 3.5 5.2 C5 5.3 6 6.4 6 7.9 C6 9.5 4.8 10.6 3.2 10.6 Z" fill="#fff"/><path d="M3.2 10.6 C1.3 10.6 0.4 9.2 0.4 7.9 C0.4 5.2 1.8 2.4 5.2 0.4 L5.9 1.3 C4.2 2.6 3.4 3.8 3.5 5.2 C5 5.3 6 6.4 6 7.9 C6 9.5 4.8 10.6 3.2 10.6 Z" transform="translate(6.6 0)" fill="#fff"/></svg>
<div class="b" style="left:1344.0px;top:808.0px;width:159.0px;height:17.0px;background:#bddbd1;border-radius:4px;line-height:17.0px;text-align:center;font-size:15px;color:#000;white-space:nowrap">没有搜索到<span style="font-size:1.067em">TCS34725</span></div>
<svg class="b" style="left:1508.5px;top:807.4px" width="13" height="11" viewBox="0 0 13 11"><g transform="rotate(180 6.5 5.5)"><path d="M3.2 10.6 C1.3 10.6 0.4 9.2 0.4 7.9 C0.4 5.2 1.8 2.4 5.2 0.4 L5.9 1.3 C4.2 2.6 3.4 3.8 3.5 5.2 C5 5.3 6 6.4 6 7.9 C6 9.5 4.8 10.6 3.2 10.6 Z" fill="#fff"/><path d="M3.2 10.6 C1.3 10.6 0.4 9.2 0.4 7.9 C0.4 5.2 1.8 2.4 5.2 0.4 L5.9 1.3 C4.2 2.6 3.4 3.8 3.5 5.2 C5 5.3 6 6.4 6 7.9 C6 9.5 4.8 10.6 3.2 10.6 Z" transform="translate(6.6 0)" fill="#fff"/></g></svg>
<svg class="b" style="left:1113.7px;top:801.4px" width="17" height="7"><path d="M0 0 H17 L11 6 H6 Z" fill="#5ba55b"/></svg>
<div class="b" style="left:1099.0px;top:832.0px;width:150.0px;height:30.0px;background:#5ba55b;"></div>
<div class="b" style="left:1099.0px;top:832.0px;width:53.0px;height:85.0px;background:#5ba55b;"></div>
<div class="b" style="left:1099.0px;top:906.0px;width:150.0px;height:11.0px;background:#5ba55b;"></div>
<svg class="b" style="left:1113.7px;top:831.4px" width="17" height="7"><path d="M0 0 H17 L11 6 H6 Z" fill="#a5a55b"/></svg>
<div class="t" style="left:1109.6px;top:835.4px;height:24px;line-height:24px;font-size:15px;color:#fff">重复</div>
<div class="b" style="left:1145.0px;top:838.0px;width:89.0px;height:19.0px;background:#bddbbd;border-radius:4px;line-height:19.0px;padding-left:6px;box-sizing:border-box;font-size:15px;color:#000;white-space:nowrap;overflow:hidden">满足条件</div>
<svg class="b" style="left:1220.0px;top:845.0px" width="8" height="5"><path d="M0.5 0.5 H7.5 L4 4.5 Z" fill="#5ba55b"/></svg>
<svg class="b" style="left:1239.7px;top:832.4px" width="10" height="22"><path d="M9 5 C9 15 1 -3 1 12.5 C1 28 9 10 9 20 Z" fill="#bdccdb" stroke="#bdccdb" stroke-width="0.6"/></svg>
<div class="b" style="left:1249.0px;top:832.0px;width:54.0px;height:30.0px;background:#bdccdb;"></div>
<div class="b" style="left:1254.0px;top:838.0px;width:42.0px;height:19.0px;background:#e5ebf1;border-radius:4px;line-height:19.0px;padding-left:6px;box-sizing:border-box;font-size:15px;color:#000;white-space:nowrap;overflow:hidden">真</div>
<svg class="b" style="left:1282.0px;top:845.0px" width="8" height="5"><path d="M0.5 0.5 H7.5 L4 4.5 Z" fill="#bdccdb"/></svg>
<div class="t" style="left:1109.6px;top:865.4px;height:24px;line-height:24px;font-size:15px;color:#fff">执行</div>
<div class="b" style="left:1152.0px;top:862.0px;width:158.0px;height:42.0px;background:#5ba55b;"></div>
<svg class="b" style="left:1166.9px;top:861.4px" width="17" height="7"><path d="M0 0 H17 L11 6 H6 Z" fill="#5ba55b"/></svg>
<div class="t" style="left:1161.4px;top:871.4px;height:24px;line-height:24px;font-size:15px;color:#fff">延时</div>
<div class="b" style="left:1198.0px;top:873.0px;width:58.0px;height:19.0px;background:#bddbbd;border-radius:4px;line-height:19.0px;padding-left:6px;box-sizing:border-box;font-size:15px;color:#000;white-space:nowrap;overflow:hidden">毫秒</div>
<svg class="b" style="left:1242.0px;top:880.0px" width="8" height="5"><path d="M0.5 0.5 H7.5 L4 4.5 Z" fill="#5ba55b"/></svg>
<svg class="b" style="left:1258.8px;top:867.9px" width="10" height="22"><path d="M9 5 C9 15 1 -3 1 12.5 C1 28 9 10 9 20 Z" fill="#bdc2db" stroke="#bdc2db" stroke-width="0.6"/></svg>
<div class="b" style="left:1268.0px;top:868.0px;width:33.0px;height:31.0px;background:#bdc2db;"></div>
<div class="b" style="left:1274.0px;top:874.0px;width:20.0px;height:20.0px;background:#e5e7f1;border-radius:4px;line-height:20.0px;text-align:center;font-size:15px;color:#000;white-space:nowrap"><span style="font-size:1.067em">1</span></div>
<svg class="b" style="left:1166.9px;top:903.5px" width="17" height="7"><path d="M0 0 H17 L11 6 H6 Z" fill="#5ba55b"/></svg>
<svg class="b" style="left:1113.7px;top:916.3px" width="17" height="7"><path d="M0 0 H17 L11 6 H6 Z" fill="#5ba55b"/></svg>
<svg class="b" style="left:1061.8px;top:930.2px" width="17" height="7"><path d="M0 0 H17 L11 6 H6 Z" fill="#5ba55b"/></svg>
<div class="b" style="left:1046.8px;top:618.5px;width:1.2px;height:315.1px;background:rgba(255,255,255,0.6)"></div>
<div class="b" style="left:1098.7px;top:758.7px;width:1.2px;height:31.8px;background:rgba(255,255,255,0.6)"></div>
<div class="b" style="left:1098.7px;top:802.4px;width:1.2px;height:117.8px;background:rgba(255,255,255,0.6)"></div>
<div class="b" style="left:1151.9px;top:862.4px;width:1.2px;height:43.8px;background:rgba(255,255,255,0.6)"></div>
<div class="b" style="left:1237.0px;top:1490.0px;width:138.0px;height:30.0px;background:#975ba5;border-radius:4px;"></div>
<svg class="b" style="left:1253.0px;top:1489.0px" width="17" height="7"><path d="M0 0 H17 L11 6 H6 Z" fill="#ffffff"/></svg>
<svg class="b" style="left:1253.0px;top:1519.0px" width="17" height="7"><path d="M0 0 H17 L11 6 H6 Z" fill="#975ba5"/></svg>
<div class="t" style="left:1248.0px;top:1493.0px;height:24px;line-height:24px;font-size:15px;color:#fff">执行</div>
<div class="t" style="left:1289.5px;top:1493.0px;height:24px;line-height:24px;font-size:16px;color:#fff"><span style="font-size:1.000em">printColor</span></div>
<div class="b" style="left:1700.0px;top:351.0px;width:144.0px;height:31.0px;background:#995ba5;border-radius:5px 0 0 0;"></div>
<div class="b" style="left:1700.0px;top:351.0px;width:21.0px;height:1437.0px;background:#995ba5;border-radius:4px 0 0 4px;"></div>
<div class="b" style="left:1700.0px;top:1777.0px;width:144.0px;height:11.0px;background:#995ba5;border-radius:0 0 0 5px;"></div>
<svg class="b" style="left:1710.0px;top:357.0px" width="17" height="17" viewBox="0 0 17 17"><rect x="0.5" y="0.5" width="16" height="16" rx="3.5" fill="#4020dc" stroke="#c8b0e0" stroke-width="0.8"/><rect x="7.2" y="2.6" width="2.6" height="3.2" rx="0.6" transform="rotate(0 8.5 8.5)" fill="#f2e6f2"/><rect x="7.2" y="2.6" width="2.6" height="3.2" rx="0.6" transform="rotate(60 8.5 8.5)" fill="#f2e6f2"/><rect x="7.2" y="2.6" width="2.6" height="3.2" rx="0.6" transform="rotate(120 8.5 8.5)" fill="#f2e6f2"/><rect x="7.2" y="2.6" width="2.6" height="3.2" rx="0.6" transform="rotate(180 8.5 8.5)" fill="#f2e6f2"/><rect x="7.2" y="2.6" width="2.6" height="3.2" rx="0.6" transform="rotate(240 8.5 8.5)" fill="#f2e6f2"/><rect x="7.2" y="2.6" width="2.6" height="3.2" rx="0.6" transform="rotate(300 8.5 8.5)" fill="#f2e6f2"/><circle cx="8.5" cy="8.5" r="3.8" fill="#f2e6f2"/><circle cx="8.5" cy="8.5" r="1.9" fill="#4020dc"/></svg>
<div class="b" style="left:1739.0px;top:357.0px;width:84.0px;height:19.0px;background:#d6bddb;border-radius:4px;line-height:19.0px;text-align:center;font-size:16px;color:#000;white-space:nowrap"><span style="font-size:1.067em">printColor</span></div>
<div class="b" style="left:1721.0px;top:382.0px;width:175.0px;height:30.0px;background:#555555;"></div>
<div class="b" style="left:1721.0px;top:382.0px;width:22.0px;height:164.0px;background:#555555;"></div>
<div class="b" style="left:1721.0px;top:535.0px;width:175.0px;height:11.0px;background:#555555;"></div>
<div class="b" style="left:1727.0px;top:387.0px;width:163.0px;height:19.0px;background:#bbbbbb;border-radius:4px;line-height:19.0px;text-align:center;font-size:15px;color:#000;white-space:nowrap">折叠块请在此描述功能</div>
<svg class="b" style="left:1736.3px;top:381.2px" width="17" height="7"><path d="M0 0 H17 L11 6 H6 Z" fill="#995ba5"/></svg>
<div class="b" style="left:1743.0px;top:412.0px;width:362.0px;height:30.0px;background:#ff6666;box-shadow:inset 0 1px 0 rgba(255,255,255,0.28),inset 0 -1px 0 rgba(0,0,0,0.13);"></div>
<div class="t" style="left:1754.0px;top:415.1px;height:24px;line-height:24px;font-size:15px;color:#fff">声明 局部变量</div>
<div class="b" style="left:1856.0px;top:418.0px;width:65.0px;height:18.0px;background:#ffc2c2;border-radius:4px;line-height:18.0px;text-align:center;font-size:15px;color:#000;white-space:nowrap"><span style="font-size:1.067em">clearcol</span></div>
<div class="t" style="left:1927.0px;top:415.1px;height:24px;line-height:24px;font-size:15px;color:#fff">为</div>
<div class="b" style="left:1948.0px;top:418.0px;width:86.0px;height:18.0px;background:#ffc2c2;border-radius:4px;line-height:18.0px;padding-left:6px;box-sizing:border-box;font-size:15px;color:#000;white-space:nowrap;overflow:hidden"><span style="font-size:1.067em">uint16_t</span></div>
<svg class="b" style="left:2020.0px;top:424.5px" width="8" height="5"><path d="M0.5 0.5 H7.5 L4 4.5 Z" fill="#ff6666"/></svg>
<div class="t" style="left:2039.4px;top:415.1px;height:24px;line-height:24px;font-size:15px;color:#fff">并赋值</div>
<svg class="b" style="left:2095.6px;top:412.3px" width="10" height="22"><path d="M9 5 C9 15 1 -3 1 12.5 C1 28 9 10 9 20 Z" fill="#5b67a5" stroke="#5b67a5" stroke-width="0.6"/></svg>
<div class="b" style="left:2105.0px;top:412.0px;width:30.0px;height:30.0px;background:#5b67a5;"></div>
<div class="b" style="left:2111.0px;top:418.0px;width:18.0px;height:18.0px;background:#bdc2db;border-radius:4px;line-height:18.0px;text-align:center;font-size:15px;color:#000;white-space:nowrap"><span style="font-size:1.067em">0</span></div>
<div class="b" style="left:1743.0px;top:442.0px;width:330.0px;height:30.0px;background:#ff6666;box-shadow:inset 0 1px 0 rgba(255,255,255,0.28),inset 0 -1px 0 rgba(0,0,0,0.13);"></div>
<div class="t" style="left:1754.0px;top:444.9px;height:24px;line-height:24px;font-size:15px;color:#fff">声明 局部变量</div>
<div class="b" style="left:1856.0px;top:447.0px;width:33.0px;height:19.0px;background:#ffc2c2;border-radius:4px;line-height:19.0px;text-align:center;font-size:15px;color:#000;white-space:nowrap"><span style="font-size:1.067em">red</span></div>
<div class="t" style="left:1895.0px;top:444.9px;height:24px;line-height:24px;font-size:15px;color:#fff">为</div>
<div class="b" style="left:1916.0px;top:447.0px;width:86.0px;height:19.0px;background:#ffc2c2;border-radius:4px;line-height:19.0px;padding-left:6px;box-sizing:border-box;font-size:15px;color:#000;white-space:nowrap;overflow:hidden"><span style="font-size:1.067em">uint16_t</span></div>
<svg class="b" style="left:1988.0px;top:454.0px" width="8" height="5"><path d="M0.5 0.5 H7.5 L4 4.5 Z" fill="#ff6666"/></svg>
<div class="t" style="left:2007.5px;top:444.9px;height:24px;line-height:24px;font-size:15px;color:#fff">并赋值</div>
<svg class="b" style="left:2063.6px;top:441.9px" width="10" height="22"><path d="M9 5 C9 15 1 -3 1 12.5 C1 28 9 10 9 20 Z" fill="#5b67a5" stroke="#5b67a5" stroke-width="0.6"/></svg>
<div class="b" style="left:2073.0px;top:442.0px;width:30.0px;height:30.0px;background:#5b67a5;"></div>
<div class="b" style="left:2079.0px;top:447.0px;width:18.0px;height:19.0px;background:#bdc2db;border-radius:4px;line-height:19.0px;text-align:center;font-size:15px;color:#000;white-space:nowrap"><span style="font-size:1.067em">0</span></div>
<div class="b" style="left:1743.0px;top:472.0px;width:347.0px;height:30.0px;background:#ff6666;box-shadow:inset 0 1px 0 rgba(255,255,255,0.28),inset 0 -1px 0 rgba(0,0,0,0.13);"></div>
<div class="t" style="left:1754.0px;top:475.1px;height:24px;line-height:24px;font-size:15px;color:#fff">声明 局部变量</div>
<div class="b" style="left:1856.0px;top:478.0px;width:52.0px;height:18.0px;background:#ffc2c2;border-radius:4px;line-height:18.0px;text-align:center;font-size:15px;color:#000;white-space:nowrap"><span style="font-size:1.067em">green</span></div>
<div class="t" style="left:1912.7px;top:475.1px;height:24px;line-height:24px;font-size:15px;color:#fff">为</div>
<div class="b" style="left:1934.0px;top:478.0px;width:85.0px;height:18.0px;background:#ffc2c2;border-radius:4px;line-height:18.0px;padding-left:6px;box-sizing:border-box;font-size:15px;color:#000;white-space:nowrap;overflow:hidden"><span style="font-size:1.067em">uint16_t</span></div>
<svg class="b" style="left:2005.0px;top:484.5px" width="8" height="5"><path d="M0.5 0.5 H7.5 L4 4.5 Z" fill="#ff6666"/></svg>
<div class="t" style="left:2025.5px;top:475.1px;height:24px;line-height:24px;font-size:15px;color:#fff">并赋值</div>
<svg class="b" style="left:2081.4px;top:472.0px" width="10" height="22"><path d="M9 5 C9 15 1 -3 1 12.5 C1 28 9 10 9 20 Z" fill="#5b67a5" stroke="#5b67a5" stroke-width="0.6"/></svg>
<div class="b" style="left:2090.0px;top:472.0px;width:32.0px;height:30.0px;background:#5b67a5;"></div>
<div class="b" style="left:2096.0px;top:478.0px;width:20.0px;height:18.0px;background:#bdc2db;border-radius:4px;line-height:18.0px;text-align:center;font-size:15px;color:#000;white-space:nowrap"><span style="font-size:1.067em">0</span></div>
<div class="b" style="left:1743.0px;top:502.0px;width:338.0px;height:30.0px;background:#ff6666;box-shadow:inset 0 1px 0 rgba(255,255,255,0.28),inset 0 -1px 0 rgba(0,0,0,0.13);"></div>
<div class="t" style="left:1754.0px;top:505.1px;height:24px;line-height:24px;font-size:15px;color:#fff">声明 局部变量</div>
<div class="b" style="left:1856.0px;top:508.0px;width:41.0px;height:18.0px;background:#ffc2c2;border-radius:4px;line-height:18.0px;text-align:center;font-size:15px;color:#000;white-space:nowrap"><span style="font-size:1.067em">blue</span></div>
<div class="t" style="left:1902.7px;top:505.1px;height:24px;line-height:24px;font-size:15px;color:#fff">为</div>
<div class="b" style="left:1923.0px;top:508.0px;width:86.0px;height:18.0px;background:#ffc2c2;border-radius:4px;line-height:18.0px;padding-left:6px;box-sizing:border-box;font-size:15px;color:#000;white-space:nowrap;overflow:hidden"><span style="font-size:1.067em">uint16_t</span></div>
<svg class="b" style="left:1995.0px;top:514.5px" width="8" height="5"><path d="M0.5 0.5 H7.5 L4 4.5 Z" fill="#ff6666"/></svg>
<div class="t" style="left:2015.8px;top:505.1px;height:24px;line-height:24px;font-size:15px;color:#fff">并赋值</div>
<svg class="b" style="left:2072.0px;top:502.3px" width="10" height="22"><path d="M9 5 C9 15 1 -3 1 12.5 C1 28 9 10 9 20 Z" fill="#5b67a5" stroke="#5b67a5" stroke-width="0.6"/></svg>
<div class="b" style="left:2081.0px;top:502.0px;width:31.0px;height:30.0px;background:#5b67a5;"></div>
<div class="b" style="left:2087.0px;top:508.0px;width:19.0px;height:18.0px;background:#bdc2db;border-radius:4px;line-height:18.0px;text-align:center;font-size:15px;color:#000;white-space:nowrap"><span style="font-size:1.067em">0</span></div>
<svg class="b" style="left:1758.3px;top:411.3px" width="17" height="7"><path d="M0 0 H17 L11 6 H6 Z" fill="#555555"/></svg>
<svg class="b" style="left:1758.3px;top:440.9px" width="17" height="7"><path d="M0 0 H17 L11 6 H6 Z" fill="#ff6666"/></svg>
<svg class="b" style="left:1758.3px;top:471.0px" width="17" height="7"><path d="M0 0 H17 L11 6 H6 Z" fill="#ff6666"/></svg>
<svg class="b" style="left:1758.3px;top:501.3px" width="17" height="7"><path d="M0 0 H17 L11 6 H6 Z" fill="#ff6666"/></svg>
<svg class="b" style="left:1758.3px;top:531.0px" width="17" height="7"><path d="M0 0 H17 L11 6 H6 Z" fill="#ff6666"/></svg>
<svg class="b" style="left:1736.3px;top:545.1px" width="17" height="7"><path d="M0 0 H17 L11 6 H6 Z" fill="#555555"/></svg>
<div class="b" style="left:1721.0px;top:546.0px;width:316.0px;height:30.0px;background:#a55b80;box-shadow:inset 0 1px 0 rgba(255,255,255,0.28),inset 0 -1px 0 rgba(0,0,0,0.13);"></div>
<div class="t" style="left:1732.0px;top:549.2px;height:24px;line-height:24px;font-size:15px;color:#fff">声明</div>
<div class="b" style="left:1768.0px;top:552.0px;width:88.0px;height:19.0px;background:#dbbdcc;border-radius:4px;line-height:19.0px;padding-left:6px;box-sizing:border-box;font-size:15px;color:#000;white-space:nowrap;overflow:hidden">局部变量</div>
<svg class="b" style="left:1842.0px;top:559.0px" width="8" height="5"><path d="M0.5 0.5 H7.5 L4 4.5 Z" fill="#a55b80"/></svg>
<div class="b" style="left:1867.0px;top:552.0px;width:16.0px;height:19.0px;background:#dbbdcc;border-radius:4px;line-height:19.0px;text-align:center;font-size:15px;color:#000;white-space:nowrap"><span style="font-size:1.067em">r</span></div>
<div class="t" style="left:1889.0px;top:549.2px;height:24px;line-height:24px;font-size:15px;color:#fff">为</div>
<div class="b" style="left:1909.0px;top:552.0px;width:58.0px;height:19.0px;background:#dbbdcc;border-radius:4px;line-height:19.0px;padding-left:6px;box-sizing:border-box;font-size:15px;color:#000;white-space:nowrap;overflow:hidden">小数</div>
<svg class="b" style="left:1953.0px;top:559.0px" width="8" height="5"><path d="M0.5 0.5 H7.5 L4 4.5 Z" fill="#a55b80"/></svg>
<div class="t" style="left:1972.4px;top:549.2px;height:24px;line-height:24px;font-size:15px;color:#fff">并赋值</div>
<svg class="b" style="left:2028.0px;top:546.1px" width="10" height="22"><path d="M9 5 C9 15 1 -3 1 12.5 C1 28 9 10 9 20 Z" fill="#ffffff" stroke="#ffffff" stroke-width="0.6"/></svg>
<svg class="b" style="left:1736.3px;top:545.1px" width="17" height="7"><path d="M0 0 H17 L11 6 H6 Z" fill="#555555"/></svg>
<div class="b" style="left:1721.0px;top:576.0px;width:321.0px;height:30.0px;background:#a55b80;box-shadow:inset 0 1px 0 rgba(255,255,255,0.28),inset 0 -1px 0 rgba(0,0,0,0.13);"></div>
<div class="t" style="left:1732.0px;top:579.4px;height:24px;line-height:24px;font-size:15px;color:#fff">声明</div>
<div class="b" style="left:1768.0px;top:582.0px;width:88.0px;height:19.0px;background:#dbbdcc;border-radius:4px;line-height:19.0px;padding-left:6px;box-sizing:border-box;font-size:15px;color:#000;white-space:nowrap;overflow:hidden">局部变量</div>
<svg class="b" style="left:1842.0px;top:589.0px" width="8" height="5"><path d="M0.5 0.5 H7.5 L4 4.5 Z" fill="#a55b80"/></svg>
<div class="b" style="left:1867.0px;top:582.0px;width:20.0px;height:19.0px;background:#dbbdcc;border-radius:4px;line-height:19.0px;text-align:center;font-size:15px;color:#000;white-space:nowrap"><span style="font-size:1.067em">g</span></div>
<div class="t" style="left:1892.5px;top:579.4px;height:24px;line-height:24px;font-size:15px;color:#fff">为</div>
<div class="b" style="left:1913.0px;top:582.0px;width:58.0px;height:19.0px;background:#dbbdcc;border-radius:4px;line-height:19.0px;padding-left:6px;box-sizing:border-box;font-size:15px;color:#000;white-space:nowrap;overflow:hidden">小数</div>
<svg class="b" style="left:1957.0px;top:589.0px" width="8" height="5"><path d="M0.5 0.5 H7.5 L4 4.5 Z" fill="#a55b80"/></svg>
<div class="t" style="left:1976.0px;top:579.4px;height:24px;line-height:24px;font-size:15px;color:#fff">并赋值</div>
<svg class="b" style="left:2032.8px;top:576.2px" width="10" height="22"><path d="M9 5 C9 15 1 -3 1 12.5 C1 28 9 10 9 20 Z" fill="#ffffff" stroke="#ffffff" stroke-width="0.6"/></svg>
<svg class="b" style="left:1736.3px;top:575.2px" width="17" height="7"><path d="M0 0 H17 L11 6 H6 Z" fill="#a55b80"/></svg>
<div class="b" style="left:1721.0px;top:606.0px;width:321.0px;height:31.0px;background:#a55b80;box-shadow:inset 0 1px 0 rgba(255,255,255,0.28),inset 0 -1px 0 rgba(0,0,0,0.13);"></div>
<div class="t" style="left:1732.0px;top:609.5px;height:24px;line-height:24px;font-size:15px;color:#fff">声明</div>
<div class="b" style="left:1768.0px;top:612.0px;width:88.0px;height:19.0px;background:#dbbdcc;border-radius:4px;line-height:19.0px;padding-left:6px;box-sizing:border-box;font-size:15px;color:#000;white-space:nowrap;overflow:hidden">局部变量</div>
<svg class="b" style="left:1842.0px;top:619.0px" width="8" height="5"><path d="M0.5 0.5 H7.5 L4 4.5 Z" fill="#a55b80"/></svg>
<div class="b" style="left:1867.0px;top:612.0px;width:20.0px;height:19.0px;background:#dbbdcc;border-radius:4px;line-height:19.0px;text-align:center;font-size:15px;color:#000;white-space:nowrap"><span style="font-size:1.067em">b</span></div>
<div class="t" style="left:1892.5px;top:609.5px;height:24px;line-height:24px;font-size:15px;color:#fff">为</div>
<div class="b" style="left:1913.0px;top:612.0px;width:58.0px;height:19.0px;background:#dbbdcc;border-radius:4px;line-height:19.0px;padding-left:6px;box-sizing:border-box;font-size:15px;color:#000;white-space:nowrap;overflow:hidden">小数</div>
<svg class="b" style="left:1957.0px;top:619.0px" width="8" height="5"><path d="M0.5 0.5 H7.5 L4 4.5 Z" fill="#a55b80"/></svg>
<div class="t" style="left:1976.0px;top:609.5px;height:24px;line-height:24px;font-size:15px;color:#fff">并赋值</div>
<svg class="b" style="left:2032.8px;top:606.5px" width="10" height="22"><path d="M9 5 C9 15 1 -3 1 12.5 C1 28 9 10 9 20 Z" fill="#ffffff" stroke="#ffffff" stroke-width="0.6"/></svg>
<svg class="b" style="left:1736.3px;top:605.5px" width="17" height="7"><path d="M0 0 H17 L11 6 H6 Z" fill="#a55b80"/></svg>
<div class="b" style="left:1721.0px;top:637.0px;width:369.0px;height:31.0px;background:#a55b80;box-shadow:inset 0 1px 0 rgba(255,255,255,0.28),inset 0 -1px 0 rgba(0,0,0,0.13);"></div>
<div class="t" style="left:1732.0px;top:640.2px;height:24px;line-height:24px;font-size:15px;color:#fff">声明</div>
<div class="b" style="left:1768.0px;top:643.0px;width:88.0px;height:19.0px;background:#dbbdcc;border-radius:4px;line-height:19.0px;padding-left:6px;box-sizing:border-box;font-size:15px;color:#000;white-space:nowrap;overflow:hidden">局部变量</div>
<svg class="b" style="left:1842.0px;top:650.0px" width="8" height="5"><path d="M0.5 0.5 H7.5 L4 4.5 Z" fill="#a55b80"/></svg>
<div class="b" style="left:1867.0px;top:643.0px;width:67.0px;height:19.0px;background:#dbbdcc;border-radius:4px;line-height:19.0px;text-align:center;font-size:15px;color:#000;white-space:nowrap"><span style="font-size:1.067em">average</span></div>
<div class="t" style="left:1940.5px;top:640.2px;height:24px;line-height:24px;font-size:15px;color:#fff">为</div>
<div class="b" style="left:1961.0px;top:643.0px;width:58.0px;height:19.0px;background:#dbbdcc;border-radius:4px;line-height:19.0px;padding-left:6px;box-sizing:border-box;font-size:15px;color:#000;white-space:nowrap;overflow:hidden">小数</div>
<svg class="b" style="left:2005.0px;top:650.0px" width="8" height="5"><path d="M0.5 0.5 H7.5 L4 4.5 Z" fill="#a55b80"/></svg>
<div class="t" style="left:2024.0px;top:640.2px;height:24px;line-height:24px;font-size:15px;color:#fff">并赋值</div>
<svg class="b" style="left:2081.0px;top:636.6px" width="10" height="22"><path d="M9 5 C9 15 1 -3 1 12.5 C1 28 9 10 9 20 Z" fill="#ffffff" stroke="#ffffff" stroke-width="0.6"/></svg>
<svg class="b" style="left:1736.3px;top:635.6px" width="17" height="7"><path d="M0 0 H17 L11 6 H6 Z" fill="#a55b80"/></svg>
<svg class="b" style="left:1736.3px;top:545.1px" width="17" height="7"><path d="M0 0 H17 L11 6 H6 Z" fill="#555555"/></svg>
<svg class="b" style="left:1736.3px;top:575.2px" width="17" height="7"><path d="M0 0 H17 L11 6 H6 Z" fill="#a55b80"/></svg>
<svg class="b" style="left:1736.3px;top:605.5px" width="17" height="7"><path d="M0 0 H17 L11 6 H6 Z" fill="#a55b80"/></svg>
<svg class="b" style="left:1736.3px;top:635.6px" width="17" height="7"><path d="M0 0 H17 L11 6 H6 Z" fill="#a55b80"/></svg>
<div class="b" style="left:1721.0px;top:668.0px;width:177.0px;height:41.0px;background:#5ba55b;"></div>
<svg class="b" style="left:1736.3px;top:666.7px" width="17" height="7"><path d="M0 0 H17 L11 6 H6 Z" fill="#a55b80"/></svg>
<div class="t" style="left:1732.2px;top:676.4px;height:24px;line-height:24px;font-size:15px;color:#fff">延时</div>
<div class="b" style="left:1768.0px;top:679.0px;width:57.0px;height:19.0px;background:#bddbbd;border-radius:4px;line-height:19.0px;padding-left:6px;box-sizing:border-box;font-size:15px;color:#000;white-space:nowrap;overflow:hidden">毫秒</div>
<svg class="b" style="left:1811.0px;top:686.0px" width="8" height="5"><path d="M0.5 0.5 H7.5 L4 4.5 Z" fill="#5ba55b"/></svg>
<svg class="b" style="left:1829.0px;top:673.8px" width="10" height="22"><path d="M9 5 C9 15 1 -3 1 12.5 C1 28 9 10 9 20 Z" fill="#bdc2db" stroke="#bdc2db" stroke-width="0.6"/></svg>
<div class="b" style="left:1838.0px;top:674.0px;width:50.0px;height:30.0px;background:#bdc2db;"></div>
<div class="b" style="left:1844.0px;top:679.0px;width:37.0px;height:20.0px;background:#e5e7f1;border-radius:4px;line-height:20.0px;text-align:center;font-size:15px;color:#000;white-space:nowrap"><span style="font-size:1.067em">100</span></div>
<div class="b" style="left:1721.0px;top:709.0px;width:256.0px;height:159.0px;background:#a58b5b;"></div>
<svg class="b" style="left:1736.3px;top:708.1px" width="17" height="7"><path d="M0 0 H17 L11 6 H6 Z" fill="#5ba55b"/></svg>
<svg class="b" style="left:1731.5px;top:714.5px" width="26" height="26" viewBox="0 0 24 24"><circle cx="8.5" cy="9" r="6" fill="none" stroke="#2b2b2b" stroke-width="1.8"/><circle cx="15.5" cy="9" r="6" fill="none" stroke="#2b2b2b" stroke-width="1.8"/><circle cx="12" cy="15" r="6" fill="none" stroke="#2b2b2b" stroke-width="1.8"/></svg>
<div class="t" style="left:1768.4px;top:712.6px;height:24px;line-height:24px;font-size:15px;color:#fff"><span style="font-size:1.000em">TCS34725</span></div>
<div class="b" style="left:1846.0px;top:715.0px;width:30.0px;height:19.0px;background:#dbd1bd;border-radius:4px;line-height:19.0px;text-align:center;font-size:15px;color:#000;white-space:nowrap"><span style="font-size:1.067em">tcs</span></div>
<div class="t" style="left:1885.5px;top:712.6px;height:24px;line-height:24px;font-size:15px;color:#fff">获取(整数)</div>
<div class="t" style="left:1557.0px;width:400px;text-align:right;top:750.5px;height:24px;line-height:24px;font-size:15px;color:#fff"><span style="font-size:1.000em">R</span>值保存到变量</div>
<svg class="b" style="left:1967.8px;top:747.9px" width="10" height="22"><path d="M9 5 C9 15 1 -3 1 12.5 C1 28 9 10 9 20 Z" fill="#ff6666" stroke="#ff6666" stroke-width="0.6"/></svg>
<div class="b" style="left:1977.0px;top:748.0px;width:45.0px;height:28.0px;background:#ff6666;box-shadow:inset -1px -1px 0 rgba(0,0,0,0.12);"></div>
<div class="b" style="left:1983.0px;top:753.0px;width:33.0px;height:18.0px;background:#ffc2c2;border-radius:4px;line-height:18.0px;text-align:center;font-size:15px;color:#000;white-space:nowrap"><span style="font-size:1.067em">red</span></div>
<div class="t" style="left:1557.0px;width:400px;text-align:right;top:780.6px;height:24px;line-height:24px;font-size:15px;color:#fff"><span style="font-size:1.000em">G</span>值保存到变量</div>
<svg class="b" style="left:1967.8px;top:778.0px" width="10" height="22"><path d="M9 5 C9 15 1 -3 1 12.5 C1 28 9 10 9 20 Z" fill="#ff6666" stroke="#ff6666" stroke-width="0.6"/></svg>
<div class="b" style="left:1977.0px;top:778.0px;width:64.0px;height:29.0px;background:#ff6666;box-shadow:inset -1px -1px 0 rgba(0,0,0,0.12);"></div>
<div class="b" style="left:1983.0px;top:783.0px;width:52.0px;height:19.0px;background:#ffc2c2;border-radius:4px;line-height:19.0px;text-align:center;font-size:15px;color:#000;white-space:nowrap"><span style="font-size:1.067em">green</span></div>
<div class="t" style="left:1557.0px;width:400px;text-align:right;top:810.8px;height:24px;line-height:24px;font-size:15px;color:#fff"><span style="font-size:1.000em">B</span>值保存到变量</div>
<svg class="b" style="left:1967.8px;top:808.1px" width="10" height="22"><path d="M9 5 C9 15 1 -3 1 12.5 C1 28 9 10 9 20 Z" fill="#ff6666" stroke="#ff6666" stroke-width="0.6"/></svg>
<div class="b" style="left:1977.0px;top:808.0px;width:53.0px;height:29.0px;background:#ff6666;box-shadow:inset -1px -1px 0 rgba(0,0,0,0.12);"></div>
<div class="b" style="left:1983.0px;top:813.0px;width:41.0px;height:19.0px;background:#ffc2c2;border-radius:4px;line-height:19.0px;text-align:center;font-size:15px;color:#000;white-space:nowrap"><span style="font-size:1.067em">blue</span></div>
<div class="t" style="left:1557.0px;width:400px;text-align:right;top:841.0px;height:24px;line-height:24px;font-size:15px;color:#fff"><span style="font-size:1.000em">W</span>值保存到变量</div>
<svg class="b" style="left:1967.8px;top:838.3px" width="10" height="22"><path d="M9 5 C9 15 1 -3 1 12.5 C1 28 9 10 9 20 Z" fill="#ff6666" stroke="#ff6666" stroke-width="0.6"/></svg>
<div class="b" style="left:1977.0px;top:838.0px;width:77.0px;height:30.0px;background:#ff6666;box-shadow:inset -1px -1px 0 rgba(0,0,0,0.12);"></div>
<div class="b" style="left:1983.0px;top:843.0px;width:65.0px;height:20.0px;background:#ffc2c2;border-radius:4px;line-height:20.0px;text-align:center;font-size:15px;color:#000;white-space:nowrap"><span style="font-size:1.067em">clearcol</span></div>
<div class="b" style="left:1721.0px;top:868.0px;width:174.0px;height:36.0px;background:#555555;"></div>
<svg class="b" style="left:1736.3px;top:866.6px" width="17" height="7"><path d="M0 0 H17 L11 6 H6 Z" fill="#a58b5b"/></svg>
<div class="t" style="left:1731.0px;top:872.0px;height:24px;line-height:24px;font-size:15px;color:#fff">注释:</div>
<div class="b" style="left:1772.0px;top:874.0px;width:117.0px;height:25.0px;background:#bbbbbb;border-radius:4px;line-height:25.0px;text-align:center;font-size:15px;color:#000;white-space:nowrap">加权平均值算法</div>
<div class="b" style="left:1721.4px;top:903.5px;width:955.6px;height:75.7px;background:repeating-linear-gradient(45deg,#e4e08a 0 1.3px,transparent 1.3px 6.86px),repeating-linear-gradient(-45deg,#e4e08a 0 1.3px,transparent 1.3px 6.86px),#d6d6d6"></div>
<svg class="b" style="left:1736.3px;top:902.5px" width="17" height="7"><path d="M0 0 H17 L11 6 H6 Z" fill="#555555"/></svg>
<div class="b" style="left:1727.0px;top:910.0px;width:67.0px;height:20.0px;background:rgba(255,255,255,0.72);border-radius:4px;line-height:20.0px;text-align:center;font-size:15px;color:#000;white-space:nowrap"><span style="font-size:1.067em">average</span></div>
<div class="t" style="left:1800.0px;top:908.0px;height:24px;line-height:24px;font-size:15px;color:rgba(255,255,255,0.85)">赋值为</div>
<div class="b" style="left:1866px;top:904px;width:1px;height:75px;background:#fff"></div>
<svg class="b" style="left:1873.5px;top:910.0px" width="10" height="22"><path d="M9 5 C9 15 1 -3 1 12.5 C1 28 9 10 9 20" fill="none" stroke="rgba(255,255,255,0.9)" stroke-width="1"/></svg>
<div class="b" style="left:1882.0px;top:910.0px;width:688.0px;height:65.0px;box-sizing:border-box;border:1px solid rgba(255,255,255,0.9)"></div>
<svg class="b" style="left:1891.5px;top:917.0px" width="10" height="22"><path d="M9 5 C9 15 1 -3 1 12.5 C1 28 9 10 9 20" fill="none" stroke="rgba(255,255,255,0.9)" stroke-width="1"/></svg>
<div class="b" style="left:1900.0px;top:917.0px;width:182.0px;height:41.0px;box-sizing:border-box;border:1px solid rgba(255,255,255,0.9)"></div>
<svg class="b" style="left:1909.5px;top:922.0px" width="10" height="22"><path d="M9 5 C9 15 1 -3 1 12.5 C1 28 9 10 9 20" fill="none" stroke="rgba(255,255,255,0.9)" stroke-width="1"/></svg>
<div class="b" style="left:1918.0px;top:922.0px;width:31.0px;height:31.0px;box-sizing:border-box;border:1px solid rgba(255,255,255,0.9)"></div>
<div class="b" style="left:1921.0px;top:927.0px;width:25.0px;height:21.0px;background:rgba(255,255,255,0.72);border-radius:4px;line-height:21.0px;text-align:center;font-size:15px;color:#000;white-space:nowrap"><span style="font-size:1.067em">5</span></div>
<div class="b" style="left:1955.0px;top:928.0px;width:38.0px;height:18.0px;background:rgba(255,255,255,0.72);border-radius:4px;line-height:18.0px;padding-left:7px;box-sizing:border-box;font-size:15px;color:#000;white-space:nowrap;overflow:hidden">×</div>
<svg class="b" style="left:1979.0px;top:934.5px" width="8" height="5"><path d="M0.5 0.5 H7.5 L4 4.5 Z" fill="#6a72b0"/></svg>
<svg class="b" style="left:1998.5px;top:922.0px" width="10" height="22"><path d="M9 5 C9 15 1 -3 1 12.5 C1 28 9 10 9 20" fill="none" stroke="rgba(255,255,255,0.9)" stroke-width="1"/></svg>
<div class="b" style="left:2007.0px;top:922.0px;width:63.0px;height:31.0px;box-sizing:border-box;border:1px solid rgba(255,255,255,0.9)"></div>
<div class="b" style="left:2010.0px;top:927.0px;width:56.0px;height:21.0px;background:rgba(255,255,255,0.72);border-radius:4px;line-height:21.0px;text-align:center;font-size:15px;color:#000;white-space:nowrap"><span style="font-size:1.067em">green</span></div>
<div class="b" style="left:2088.0px;top:922.0px;width:38.0px;height:18.0px;background:rgba(255,255,255,0.72);border-radius:4px;line-height:18.0px;padding-left:7px;box-sizing:border-box;font-size:15px;color:#000;white-space:nowrap;overflow:hidden">+</div>
<svg class="b" style="left:2112.0px;top:928.5px" width="8" height="5"><path d="M0.5 0.5 H7.5 L4 4.5 Z" fill="#6a72b0"/></svg>
<svg class="b" style="left:2130.5px;top:916.0px" width="10" height="22"><path d="M9 5 C9 15 1 -3 1 12.5 C1 28 9 10 9 20" fill="none" stroke="rgba(255,255,255,0.9)" stroke-width="1"/></svg>
<div class="b" style="left:2139.0px;top:916.0px;width:419.0px;height:53.0px;box-sizing:border-box;border:1px solid rgba(255,255,255,0.9)"></div>
<svg class="b" style="left:2147.5px;top:922.0px" width="10" height="22"><path d="M9 5 C9 15 1 -3 1 12.5 C1 28 9 10 9 20" fill="none" stroke="rgba(255,255,255,0.9)" stroke-width="1"/></svg>
<div class="b" style="left:2156.0px;top:922.0px;width:163.0px;height:42.0px;box-sizing:border-box;border:1px solid rgba(255,255,255,0.9)"></div>
<svg class="b" style="left:2165.5px;top:928.0px" width="10" height="22"><path d="M9 5 C9 15 1 -3 1 12.5 C1 28 9 10 9 20" fill="none" stroke="rgba(255,255,255,0.9)" stroke-width="1"/></svg>
<div class="b" style="left:2174.0px;top:928.0px;width:31.0px;height:30.0px;box-sizing:border-box;border:1px solid rgba(255,255,255,0.9)"></div>
<div class="b" style="left:2177.0px;top:932.0px;width:25.0px;height:22.0px;background:rgba(255,255,255,0.72);border-radius:4px;line-height:22.0px;text-align:center;font-size:15px;color:#000;white-space:nowrap"><span style="font-size:1.067em">3</span></div>
<div class="b" style="left:2211.0px;top:934.0px;width:38.0px;height:18.0px;background:rgba(255,255,255,0.72);border-radius:4px;line-height:18.0px;padding-left:7px;box-sizing:border-box;font-size:15px;color:#000;white-space:nowrap;overflow:hidden">×</div>
<svg class="b" style="left:2235.0px;top:940.5px" width="8" height="5"><path d="M0.5 0.5 H7.5 L4 4.5 Z" fill="#6a72b0"/></svg>
<svg class="b" style="left:2253.5px;top:928.0px" width="10" height="22"><path d="M9 5 C9 15 1 -3 1 12.5 C1 28 9 10 9 20" fill="none" stroke="rgba(255,255,255,0.9)" stroke-width="1"/></svg>
<div class="b" style="left:2262.0px;top:928.0px;width:46.0px;height:30.0px;box-sizing:border-box;border:1px solid rgba(255,255,255,0.9)"></div>
<div class="b" style="left:2265.0px;top:932.0px;width:39.0px;height:22.0px;background:rgba(255,255,255,0.72);border-radius:4px;line-height:22.0px;text-align:center;font-size:15px;color:#000;white-space:nowrap"><span style="font-size:1.067em">red</span></div>
<div class="b" style="left:2325.0px;top:928.0px;width:38.0px;height:18.0px;background:rgba(255,255,255,0.72);border-radius:4px;line-height:18.0px;padding-left:7px;box-sizing:border-box;font-size:15px;color:#000;white-space:nowrap;overflow:hidden">+</div>
<svg class="b" style="left:2349.0px;top:934.5px" width="8" height="5"><path d="M0.5 0.5 H7.5 L4 4.5 Z" fill="#6a72b0"/></svg>
<svg class="b" style="left:2367.5px;top:922.0px" width="10" height="22"><path d="M9 5 C9 15 1 -3 1 12.5 C1 28 9 10 9 20" fill="none" stroke="rgba(255,255,255,0.9)" stroke-width="1"/></svg>
<div class="b" style="left:2376.0px;top:922.0px;width:170.0px;height:42.0px;box-sizing:border-box;border:1px solid rgba(255,255,255,0.9)"></div>
<svg class="b" style="left:2385.5px;top:928.0px" width="10" height="22"><path d="M9 5 C9 15 1 -3 1 12.5 C1 28 9 10 9 20" fill="none" stroke="rgba(255,255,255,0.9)" stroke-width="1"/></svg>
<div class="b" style="left:2394.0px;top:928.0px;width:30.0px;height:30.0px;box-sizing:border-box;border:1px solid rgba(255,255,255,0.9)"></div>
<div class="b" style="left:2397.0px;top:932.0px;width:24.0px;height:22.0px;background:rgba(255,255,255,0.72);border-radius:4px;line-height:22.0px;text-align:center;font-size:15px;color:#000;white-space:nowrap"><span style="font-size:1.067em">2</span></div>
<div class="b" style="left:2430.0px;top:934.0px;width:38.0px;height:18.0px;background:rgba(255,255,255,0.72);border-radius:4px;line-height:18.0px;padding-left:7px;box-sizing:border-box;font-size:15px;color:#000;white-space:nowrap;overflow:hidden">×</div>
<svg class="b" style="left:2454.0px;top:940.5px" width="8" height="5"><path d="M0.5 0.5 H7.5 L4 4.5 Z" fill="#6a72b0"/></svg>
<svg class="b" style="left:2472.5px;top:928.0px" width="10" height="22"><path d="M9 5 C9 15 1 -3 1 12.5 C1 28 9 10 9 20" fill="none" stroke="rgba(255,255,255,0.9)" stroke-width="1"/></svg>
<div class="b" style="left:2481.0px;top:928.0px;width:54.0px;height:30.0px;box-sizing:border-box;border:1px solid rgba(255,255,255,0.9)"></div>
<div class="b" style="left:2484.0px;top:932.0px;width:47.0px;height:22.0px;background:rgba(255,255,255,0.72);border-radius:4px;line-height:22.0px;text-align:center;font-size:15px;color:#000;white-space:nowrap"><span style="font-size:1.067em">blue</span></div>
<div class="b" style="left:2577.0px;top:918.0px;width:37.0px;height:18.0px;background:rgba(255,255,255,0.72);border-radius:4px;line-height:18.0px;padding-left:7px;box-sizing:border-box;font-size:15px;color:#000;white-space:nowrap;overflow:hidden">÷</div>
<svg class="b" style="left:2600.0px;top:924.5px" width="8" height="5"><path d="M0.5 0.5 H7.5 L4 4.5 Z" fill="#6a72b0"/></svg>
<svg class="b" style="left:2617.5px;top:910.0px" width="10" height="22"><path d="M9 5 C9 15 1 -3 1 12.5 C1 28 9 10 9 20" fill="none" stroke="rgba(255,255,255,0.9)" stroke-width="1"/></svg>
<div class="b" style="left:2626.0px;top:910.0px;width:41.0px;height:31.0px;box-sizing:border-box;border:1px solid rgba(255,255,255,0.9)"></div>
<div class="b" style="left:2629.0px;top:914.0px;width:34.0px;height:23.0px;background:rgba(255,255,255,0.72);border-radius:4px;line-height:23.0px;text-align:center;font-size:15px;color:#000;white-space:nowrap"><span style="font-size:1.067em">10</span></div>
<div class="b" style="left:1721.0px;top:979.0px;width:145.0px;height:65.0px;background:#a55b80;"></div>
<svg class="b" style="left:1736.3px;top:978.2px" width="17" height="7"><path d="M0 0 H17 L11 6 H6 Z" fill="#d5d5d5"/></svg>
<div class="b" style="left:1727.0px;top:986.0px;width:67.0px;height:20.0px;background:#dbbdcc;border-radius:4px;line-height:20.0px;text-align:center;font-size:15px;color:#000;white-space:nowrap"><span style="font-size:1.067em">average</span></div>
<div class="t" style="left:1800.0px;top:983.9px;height:24px;line-height:24px;font-size:15px;color:#fff">赋值为</div>
<svg class="b" style="left:1857.1px;top:981.0px" width="10" height="22"><path d="M9 5 C9 15 1 -3 1 12.5 C1 28 9 10 9 20 Z" fill="#5b67a5" stroke="#5b67a5" stroke-width="0.6"/></svg>
<div class="b" style="left:1866.0px;top:981.0px;width:452.0px;height:63.0px;background:#5b67a5;"></div>
<svg class="b" style="left:1874.5px;top:986.0px" width="10" height="22"><path d="M9 5 C9 15 1 -3 1 12.5 C1 28 9 10 9 20" fill="none" stroke="rgba(255,255,255,0.55)" stroke-width="1"/></svg>
<div class="b" style="left:1883.0px;top:986.0px;width:337.0px;height:53.0px;box-sizing:border-box;border:1px solid rgba(255,255,255,0.55)"></div>
<svg class="b" style="left:1884.0px;top:994.0px" width="10" height="22"><path d="M9 5 C9 15 1 -3 1 12.5 C1 28 9 10 9 20 Z" fill="#ff6666" stroke="#ff6666" stroke-width="0.6"/></svg>
<div class="b" style="left:1893.0px;top:994.0px;width:54.0px;height:29.0px;background:#ff6666;box-shadow:inset -1px -1px 0 rgba(0,0,0,0.12);"></div>
<div class="b" style="left:1899.0px;top:999.0px;width:42.0px;height:19.0px;background:#ffc2c2;border-radius:4px;line-height:19.0px;text-align:center;font-size:15px;color:#000;white-space:nowrap"><span style="font-size:1.067em">red</span></div>
<div class="b" style="left:1953.0px;top:998.0px;width:38.0px;height:19.0px;background:#bdc2db;border-radius:4px;line-height:19.0px;padding-left:7px;box-sizing:border-box;font-size:15px;color:#000;white-space:nowrap;overflow:hidden">+</div>
<svg class="b" style="left:1977.0px;top:1005.0px" width="8" height="5"><path d="M0.5 0.5 H7.5 L4 4.5 Z" fill="#5b67a5"/></svg>
<svg class="b" style="left:1995.5px;top:993.0px" width="10" height="22"><path d="M9 5 C9 15 1 -3 1 12.5 C1 28 9 10 9 20" fill="none" stroke="rgba(255,255,255,0.55)" stroke-width="1"/></svg>
<div class="b" style="left:2004.0px;top:993.0px;width:204.0px;height:42.0px;box-sizing:border-box;border:1px solid rgba(255,255,255,0.55)"></div>
<svg class="b" style="left:2004.7px;top:999.8px" width="10" height="22"><path d="M9 5 C9 15 1 -3 1 12.5 C1 28 9 10 9 20 Z" fill="#ff6666" stroke="#ff6666" stroke-width="0.6"/></svg>
<div class="b" style="left:2014.0px;top:1000.0px;width:72.0px;height:30.0px;background:#ff6666;box-shadow:inset -1px -1px 0 rgba(0,0,0,0.12);"></div>
<div class="b" style="left:2020.0px;top:1005.0px;width:60.0px;height:20.0px;background:#ffc2c2;border-radius:4px;line-height:20.0px;text-align:center;font-size:15px;color:#000;white-space:nowrap"><span style="font-size:1.067em">green</span></div>
<div class="b" style="left:2091.0px;top:1005.0px;width:39.0px;height:19.0px;background:#bdc2db;border-radius:4px;line-height:19.0px;padding-left:7px;box-sizing:border-box;font-size:15px;color:#000;white-space:nowrap;overflow:hidden">+</div>
<svg class="b" style="left:2116.0px;top:1012.0px" width="8" height="5"><path d="M0.5 0.5 H7.5 L4 4.5 Z" fill="#5b67a5"/></svg>
<svg class="b" style="left:2128.9px;top:999.8px" width="10" height="22"><path d="M9 5 C9 15 1 -3 1 12.5 C1 28 9 10 9 20 Z" fill="#ff6666" stroke="#ff6666" stroke-width="0.6"/></svg>
<div class="b" style="left:2138.0px;top:1000.0px;width:59.0px;height:30.0px;background:#ff6666;box-shadow:inset -1px -1px 0 rgba(0,0,0,0.12);"></div>
<div class="b" style="left:2144.0px;top:1005.0px;width:47.0px;height:20.0px;background:#ffc2c2;border-radius:4px;line-height:20.0px;text-align:center;font-size:15px;color:#000;white-space:nowrap"><span style="font-size:1.067em">blue</span></div>
<div class="b" style="left:2225.0px;top:992.0px;width:39.0px;height:19.0px;background:#bdc2db;border-radius:4px;line-height:19.0px;padding-left:7px;box-sizing:border-box;font-size:15px;color:#000;white-space:nowrap;overflow:hidden">÷</div>
<svg class="b" style="left:2250.0px;top:999.0px" width="8" height="5"><path d="M0.5 0.5 H7.5 L4 4.5 Z" fill="#5b67a5"/></svg>
<svg class="b" style="left:2259.7px;top:987.3px" width="10" height="22"><path d="M9 5 C9 15 1 -3 1 12.5 C1 28 9 10 9 20 Z" fill="#bdc2db" stroke="#bdc2db" stroke-width="0.6"/></svg>
<div class="b" style="left:2269.0px;top:987.0px;width:39.0px;height:30.0px;background:#bdc2db;"></div>
<div class="b" style="left:2275.0px;top:992.0px;width:26.0px;height:20.0px;background:#e5e7f1;border-radius:4px;line-height:20.0px;text-align:center;font-size:15px;color:#000;white-space:nowrap"><span style="font-size:1.067em">3</span></div>
<div class="b" style="left:1721.0px;top:1044.0px;width:93.0px;height:43.0px;background:#a55b80;"></div>
<svg class="b" style="left:1736.3px;top:1043.4px" width="17" height="7"><path d="M0 0 H17 L11 6 H6 Z" fill="#a55b80"/></svg>
<div class="b" style="left:1727.0px;top:1054.0px;width:16.0px;height:17.0px;background:#dbbdcc;border-radius:4px;line-height:17.0px;text-align:center;font-size:15px;color:#000;white-space:nowrap"><span style="font-size:1.067em">r</span></div>
<div class="t" style="left:1747.7px;top:1049.4px;height:24px;line-height:24px;font-size:15px;color:#fff">赋值为</div>
<svg class="b" style="left:1805.5px;top:1045.8px" width="10" height="22"><path d="M9 5 C9 15 1 -3 1 12.5 C1 28 9 10 9 20 Z" fill="#5b67a5" stroke="#5b67a5" stroke-width="0.6"/></svg>
<div class="b" style="left:1814.0px;top:1046.0px;width:211.0px;height:41.0px;background:#5b67a5;"></div>
<svg class="b" style="left:1822.2px;top:1051.6px" width="10" height="22"><path d="M9 5 C9 15 1 -3 1 12.5 C1 28 9 10 9 20 Z" fill="#ff6666" stroke="#ff6666" stroke-width="0.6"/></svg>
<div class="b" style="left:1831.0px;top:1052.0px;width:47.0px;height:30.0px;background:#ff6666;box-shadow:inset -1px -1px 0 rgba(0,0,0,0.12);"></div>
<div class="b" style="left:1837.0px;top:1057.0px;width:35.0px;height:20.0px;background:#ffc2c2;border-radius:4px;line-height:20.0px;text-align:center;font-size:15px;color:#000;white-space:nowrap"><span style="font-size:1.067em">red</span></div>
<div class="b" style="left:1883.0px;top:1056.0px;width:38.0px;height:20.0px;background:#bdc2db;border-radius:4px;line-height:20.0px;padding-left:7px;box-sizing:border-box;font-size:15px;color:#000;white-space:nowrap;overflow:hidden">÷</div>
<svg class="b" style="left:1907.0px;top:1063.5px" width="8" height="5"><path d="M0.5 0.5 H7.5 L4 4.5 Z" fill="#5b67a5"/></svg>
<svg class="b" style="left:1924.7px;top:1051.6px" width="10" height="22"><path d="M9 5 C9 15 1 -3 1 12.5 C1 28 9 10 9 20 Z" fill="#ff6666" stroke="#ff6666" stroke-width="0.6"/></svg>
<div class="b" style="left:1934.0px;top:1052.0px;width:80.0px;height:30.0px;background:#ff6666;box-shadow:inset -1px -1px 0 rgba(0,0,0,0.12);"></div>
<div class="b" style="left:1940.0px;top:1057.0px;width:68.0px;height:20.0px;background:#ffc2c2;border-radius:4px;line-height:20.0px;text-align:center;font-size:15px;color:#000;white-space:nowrap"><span style="font-size:1.067em">average</span></div>
<div class="b" style="left:1721.0px;top:1087.0px;width:97.0px;height:41.0px;background:#a55b80;"></div>
<svg class="b" style="left:1736.3px;top:1085.6px" width="17" height="7"><path d="M0 0 H17 L11 6 H6 Z" fill="#a55b80"/></svg>
<div class="b" style="left:1727.0px;top:1094.0px;width:20.0px;height:19.0px;background:#dbbdcc;border-radius:4px;line-height:19.0px;text-align:center;font-size:15px;color:#000;white-space:nowrap"><span style="font-size:1.067em">g</span></div>
<div class="t" style="left:1751.6px;top:1090.5px;height:24px;line-height:24px;font-size:15px;color:#fff">赋值为</div>
<svg class="b" style="left:1809.4px;top:1086.6px" width="10" height="22"><path d="M9 5 C9 15 1 -3 1 12.5 C1 28 9 10 9 20 Z" fill="#5b67a5" stroke="#5b67a5" stroke-width="0.6"/></svg>
<div class="b" style="left:1818.0px;top:1087.0px;width:229.0px;height:41.0px;background:#5b67a5;"></div>
<svg class="b" style="left:1826.0px;top:1093.0px" width="10" height="22"><path d="M9 5 C9 15 1 -3 1 12.5 C1 28 9 10 9 20 Z" fill="#ff6666" stroke="#ff6666" stroke-width="0.6"/></svg>
<div class="b" style="left:1835.0px;top:1093.0px;width:65.0px;height:31.0px;background:#ff6666;box-shadow:inset -1px -1px 0 rgba(0,0,0,0.12);"></div>
<div class="b" style="left:1841.0px;top:1098.0px;width:53.0px;height:20.0px;background:#ffc2c2;border-radius:4px;line-height:20.0px;text-align:center;font-size:15px;color:#000;white-space:nowrap"><span style="font-size:1.067em">green</span></div>
<div class="b" style="left:1905.0px;top:1098.0px;width:39.0px;height:20.0px;background:#bdc2db;border-radius:4px;line-height:20.0px;padding-left:7px;box-sizing:border-box;font-size:15px;color:#000;white-space:nowrap;overflow:hidden">÷</div>
<svg class="b" style="left:1930.0px;top:1105.5px" width="8" height="5"><path d="M0.5 0.5 H7.5 L4 4.5 Z" fill="#5b67a5"/></svg>
<svg class="b" style="left:1947.2px;top:1093.0px" width="10" height="22"><path d="M9 5 C9 15 1 -3 1 12.5 C1 28 9 10 9 20 Z" fill="#bdc2db" stroke="#bdc2db" stroke-width="0.6"/></svg>
<div class="b" style="left:1956.0px;top:1093.0px;width:80.0px;height:31.0px;background:#bdc2db;"></div>
<div class="b" style="left:1962.0px;top:1098.0px;width:67.0px;height:20.0px;background:#e5e7f1;border-radius:4px;line-height:20.0px;text-align:center;font-size:15px;color:#000;white-space:nowrap"><span style="font-size:1.067em">average</span></div>
<div class="b" style="left:1721.0px;top:1128.0px;width:97.0px;height:42.0px;background:#a55b80;"></div>
<svg class="b" style="left:1736.3px;top:1127.5px" width="17" height="7"><path d="M0 0 H17 L11 6 H6 Z" fill="#a55b80"/></svg>
<div class="b" style="left:1727.0px;top:1136.0px;width:20.0px;height:19.0px;background:#dbbdcc;border-radius:4px;line-height:19.0px;text-align:center;font-size:15px;color:#000;white-space:nowrap"><span style="font-size:1.067em">b</span></div>
<div class="t" style="left:1751.6px;top:1132.5px;height:24px;line-height:24px;font-size:15px;color:#fff">赋值为</div>
<svg class="b" style="left:1809.4px;top:1128.5px" width="10" height="22"><path d="M9 5 C9 15 1 -3 1 12.5 C1 28 9 10 9 20 Z" fill="#5b67a5" stroke="#5b67a5" stroke-width="0.6"/></svg>
<div class="b" style="left:1818.0px;top:1128.0px;width:219.0px;height:42.0px;background:#5b67a5;"></div>
<svg class="b" style="left:1826.0px;top:1135.0px" width="10" height="22"><path d="M9 5 C9 15 1 -3 1 12.5 C1 28 9 10 9 20 Z" fill="#ff6666" stroke="#ff6666" stroke-width="0.6"/></svg>
<div class="b" style="left:1835.0px;top:1135.0px;width:54.0px;height:31.0px;background:#ff6666;box-shadow:inset -1px -1px 0 rgba(0,0,0,0.12);"></div>
<div class="b" style="left:1841.0px;top:1140.0px;width:42.0px;height:20.0px;background:#ffc2c2;border-radius:4px;line-height:20.0px;text-align:center;font-size:15px;color:#000;white-space:nowrap"><span style="font-size:1.067em">blue</span></div>
<div class="b" style="left:1895.0px;top:1140.0px;width:38.0px;height:20.0px;background:#bdc2db;border-radius:4px;line-height:20.0px;padding-left:7px;box-sizing:border-box;font-size:15px;color:#000;white-space:nowrap;overflow:hidden">÷</div>
<svg class="b" style="left:1919.0px;top:1147.5px" width="8" height="5"><path d="M0.5 0.5 H7.5 L4 4.5 Z" fill="#5b67a5"/></svg>
<svg class="b" style="left:1936.3px;top:1135.0px" width="10" height="22"><path d="M9 5 C9 15 1 -3 1 12.5 C1 28 9 10 9 20 Z" fill="#bdc2db" stroke="#bdc2db" stroke-width="0.6"/></svg>
<div class="b" style="left:1945.0px;top:1135.0px;width:81.0px;height:31.0px;background:#bdc2db;"></div>
<div class="b" style="left:1951.0px;top:1140.0px;width:69.0px;height:20.0px;background:#e5e7f1;border-radius:4px;line-height:20.0px;text-align:center;font-size:15px;color:#000;white-space:nowrap"><span style="font-size:1.067em">average</span></div>
<div class="b" style="left:1721.0px;top:1171.0px;width:219.0px;height:41.0px;background:#a5a55b;"></div>
<svg class="b" style="left:1736.3px;top:1169.5px" width="17" height="7"><path d="M0 0 H17 L11 6 H6 Z" fill="#a55b80"/></svg>
<div class="b" style="left:1727.0px;top:1177.0px;width:66.0px;height:18.0px;background:#dbdbbd;border-radius:4px;line-height:18.0px;padding-left:6px;box-sizing:border-box;font-size:15px;color:#000;white-space:nowrap;overflow:hidden"><span style="font-size:1.067em">Serial</span></div>
<svg class="b" style="left:1779.0px;top:1183.5px" width="8" height="5"><path d="M0.5 0.5 H7.5 L4 4.5 Z" fill="#a5a55b"/></svg>
<div class="t" style="left:1800.0px;top:1174.3px;height:24px;line-height:24px;font-size:15px;color:#fff">打印</div>
<div class="b" style="left:1836.0px;top:1177.0px;width:88.0px;height:18.0px;background:#dbdbbd;border-radius:4px;line-height:18.0px;padding-left:6px;box-sizing:border-box;font-size:15px;color:#000;white-space:nowrap;overflow:hidden">自动换行</div>
<svg class="b" style="left:1910.0px;top:1183.5px" width="8" height="5"><path d="M0.5 0.5 H7.5 L4 4.5 Z" fill="#a5a55b"/></svg>
<svg class="b" style="left:1930.5px;top:1171.2px" width="10" height="22"><path d="M9 5 C9 15 1 -3 1 12.5 C1 28 9 10 9 20 Z" fill="#5ba58c" stroke="#5ba58c" stroke-width="0.6"/></svg>
<div class="b" style="left:1940.0px;top:1171.0px;width:683.0px;height:41.0px;background:#5ba58c;"></div>
<svg class="b" style="left:1950.4px;top:1183.0px" width="17" height="17" viewBox="0 0 17 17"><rect x="0.5" y="0.5" width="16" height="16" rx="3.5" fill="#4020dc" stroke="#c8b0e0" stroke-width="0.8"/><rect x="7.2" y="2.6" width="2.6" height="3.2" rx="0.6" transform="rotate(0 8.5 8.5)" fill="#f2e6f2"/><rect x="7.2" y="2.6" width="2.6" height="3.2" rx="0.6" transform="rotate(60 8.5 8.5)" fill="#f2e6f2"/><rect x="7.2" y="2.6" width="2.6" height="3.2" rx="0.6" transform="rotate(120 8.5 8.5)" fill="#f2e6f2"/><rect x="7.2" y="2.6" width="2.6" height="3.2" rx="0.6" transform="rotate(180 8.5 8.5)" fill="#f2e6f2"/><rect x="7.2" y="2.6" width="2.6" height="3.2" rx="0.6" transform="rotate(240 8.5 8.5)" fill="#f2e6f2"/><rect x="7.2" y="2.6" width="2.6" height="3.2" rx="0.6" transform="rotate(300 8.5 8.5)" fill="#f2e6f2"/><circle cx="8.5" cy="8.5" r="3.8" fill="#f2e6f2"/><circle cx="8.5" cy="8.5" r="1.9" fill="#4020dc"/></svg>
<div class="t" style="left:1977.6px;top:1179.4px;height:24px;line-height:24px;font-size:15px;color:#fff">连接字符串</div>
<svg class="b" style="left:2063.5px;top:1177.0px" width="10" height="22"><path d="M9 5 C9 15 1 -3 1 12.5 C1 28 9 10 9 20" fill="none" stroke="rgba(255,255,255,0.55)" stroke-width="1"/></svg>
<div class="b" style="left:2072.0px;top:1177.0px;width:78.0px;height:30.0px;box-sizing:border-box;border:1px solid rgba(255,255,255,0.55)"></div>
<svg class="b" style="left:2083.9px;top:1182.5px" width="13" height="11" viewBox="0 0 13 11"><path d="M3.2 10.6 C1.3 10.6 0.4 9.2 0.4 7.9 C0.4 5.2 1.8 2.4 5.2 0.4 L5.9 1.3 C4.2 2.6 3.4 3.8 3.5 5.2 C5 5.3 6 6.4 6 7.9 C6 9.5 4.8 10.6 3.2 10.6 Z" fill="#fff"/><path d="M3.2 10.6 C1.3 10.6 0.4 9.2 0.4 7.9 C0.4 5.2 1.8 2.4 5.2 0.4 L5.9 1.3 C4.2 2.6 3.4 3.8 3.5 5.2 C5 5.3 6 6.4 6 7.9 C6 9.5 4.8 10.6 3.2 10.6 Z" transform="translate(6.6 0)" fill="#fff"/></svg>
<div class="b" style="left:2100.0px;top:1182.0px;width:20.0px;height:20.0px;background:#bddbd1;border-radius:4px;line-height:20.0px;text-align:center;font-size:15px;color:#000;white-space:nowrap"><span style="font-size:1.067em">r</span></div>
<svg class="b" style="left:2125.0px;top:1182.5px" width="13" height="11" viewBox="0 0 13 11"><g transform="rotate(180 6.5 5.5)"><path d="M3.2 10.6 C1.3 10.6 0.4 9.2 0.4 7.9 C0.4 5.2 1.8 2.4 5.2 0.4 L5.9 1.3 C4.2 2.6 3.4 3.8 3.5 5.2 C5 5.3 6 6.4 6 7.9 C6 9.5 4.8 10.6 3.2 10.6 Z" fill="#fff"/><path d="M3.2 10.6 C1.3 10.6 0.4 9.2 0.4 7.9 C0.4 5.2 1.8 2.4 5.2 0.4 L5.9 1.3 C4.2 2.6 3.4 3.8 3.5 5.2 C5 5.3 6 6.4 6 7.9 C6 9.5 4.8 10.6 3.2 10.6 Z" transform="translate(6.6 0)" fill="#fff"/></g></svg>
<svg class="b" style="left:2248.5px;top:1177.0px" width="10" height="22"><path d="M9 5 C9 15 1 -3 1 12.5 C1 28 9 10 9 20" fill="none" stroke="rgba(255,255,255,0.55)" stroke-width="1"/></svg>
<div class="b" style="left:2257.0px;top:1177.0px;width:85.0px;height:30.0px;box-sizing:border-box;border:1px solid rgba(255,255,255,0.55)"></div>
<svg class="b" style="left:2269.0px;top:1182.5px" width="13" height="11" viewBox="0 0 13 11"><path d="M3.2 10.6 C1.3 10.6 0.4 9.2 0.4 7.9 C0.4 5.2 1.8 2.4 5.2 0.4 L5.9 1.3 C4.2 2.6 3.4 3.8 3.5 5.2 C5 5.3 6 6.4 6 7.9 C6 9.5 4.8 10.6 3.2 10.6 Z" fill="#fff"/><path d="M3.2 10.6 C1.3 10.6 0.4 9.2 0.4 7.9 C0.4 5.2 1.8 2.4 5.2 0.4 L5.9 1.3 C4.2 2.6 3.4 3.8 3.5 5.2 C5 5.3 6 6.4 6 7.9 C6 9.5 4.8 10.6 3.2 10.6 Z" transform="translate(6.6 0)" fill="#fff"/></svg>
<div class="b" style="left:2284.0px;top:1182.0px;width:30.0px;height:20.0px;background:#bddbd1;border-radius:4px;line-height:20.0px;text-align:center;font-size:15px;color:#000;white-space:nowrap"><span style="font-size:1.067em">g</span></div>
<svg class="b" style="left:2318.5px;top:1182.5px" width="13" height="11" viewBox="0 0 13 11"><g transform="rotate(180 6.5 5.5)"><path d="M3.2 10.6 C1.3 10.6 0.4 9.2 0.4 7.9 C0.4 5.2 1.8 2.4 5.2 0.4 L5.9 1.3 C4.2 2.6 3.4 3.8 3.5 5.2 C5 5.3 6 6.4 6 7.9 C6 9.5 4.8 10.6 3.2 10.6 Z" fill="#fff"/><path d="M3.2 10.6 C1.3 10.6 0.4 9.2 0.4 7.9 C0.4 5.2 1.8 2.4 5.2 0.4 L5.9 1.3 C4.2 2.6 3.4 3.8 3.5 5.2 C5 5.3 6 6.4 6 7.9 C6 9.5 4.8 10.6 3.2 10.6 Z" transform="translate(6.6 0)" fill="#fff"/></g></svg>
<svg class="b" style="left:2445.5px;top:1177.0px" width="10" height="22"><path d="M9 5 C9 15 1 -3 1 12.5 C1 28 9 10 9 20" fill="none" stroke="rgba(255,255,255,0.55)" stroke-width="1"/></svg>
<div class="b" style="left:2454.0px;top:1177.0px;width:86.0px;height:30.0px;box-sizing:border-box;border:1px solid rgba(255,255,255,0.55)"></div>
<svg class="b" style="left:2465.9px;top:1182.5px" width="13" height="11" viewBox="0 0 13 11"><path d="M3.2 10.6 C1.3 10.6 0.4 9.2 0.4 7.9 C0.4 5.2 1.8 2.4 5.2 0.4 L5.9 1.3 C4.2 2.6 3.4 3.8 3.5 5.2 C5 5.3 6 6.4 6 7.9 C6 9.5 4.8 10.6 3.2 10.6 Z" fill="#fff"/><path d="M3.2 10.6 C1.3 10.6 0.4 9.2 0.4 7.9 C0.4 5.2 1.8 2.4 5.2 0.4 L5.9 1.3 C4.2 2.6 3.4 3.8 3.5 5.2 C5 5.3 6 6.4 6 7.9 C6 9.5 4.8 10.6 3.2 10.6 Z" transform="translate(6.6 0)" fill="#fff"/></svg>
<div class="b" style="left:2482.0px;top:1182.0px;width:28.0px;height:20.0px;background:#bddbd1;border-radius:4px;line-height:20.0px;text-align:center;font-size:15px;color:#000;white-space:nowrap"><span style="font-size:1.067em">b</span></div>
<svg class="b" style="left:2515.5px;top:1182.5px" width="13" height="11" viewBox="0 0 13 11"><g transform="rotate(180 6.5 5.5)"><path d="M3.2 10.6 C1.3 10.6 0.4 9.2 0.4 7.9 C0.4 5.2 1.8 2.4 5.2 0.4 L5.9 1.3 C4.2 2.6 3.4 3.8 3.5 5.2 C5 5.3 6 6.4 6 7.9 C6 9.5 4.8 10.6 3.2 10.6 Z" fill="#fff"/><path d="M3.2 10.6 C1.3 10.6 0.4 9.2 0.4 7.9 C0.4 5.2 1.8 2.4 5.2 0.4 L5.9 1.3 C4.2 2.6 3.4 3.8 3.5 5.2 C5 5.3 6 6.4 6 7.9 C6 9.5 4.8 10.6 3.2 10.6 Z" transform="translate(6.6 0)" fill="#fff"/></g></svg>
<div class="t" style="left:2161.0px;top:1180.0px;height:24px;line-height:24px;font-size:15px;color:#fff">+</div>
<div class="t" style="left:2229.0px;top:1180.0px;height:24px;line-height:24px;font-size:15px;color:#fff">+</div>
<div class="t" style="left:2356.0px;top:1180.0px;height:24px;line-height:24px;font-size:15px;color:#fff">+</div>
<div class="t" style="left:2426.5px;top:1180.0px;height:24px;line-height:24px;font-size:15px;color:#fff">+</div>
<div class="t" style="left:2553.0px;top:1180.0px;height:24px;line-height:24px;font-size:15px;color:#fff">+</div>
<svg class="b" style="left:2180.9px;top:1176.6px" width="10" height="22"><path d="M9 5 C9 15 1 -3 1 12.5 C1 28 9 10 9 20 Z" fill="#a55b80" stroke="#a55b80" stroke-width="0.6"/></svg>
<div class="b" style="left:2190.0px;top:1177.0px;width:27.0px;height:30.0px;background:#a55b80;box-shadow:inset -1px -1px 0 rgba(0,0,0,0.12);"></div>
<div class="b" style="left:2194.0px;top:1182.0px;width:19.0px;height:20.0px;background:#dbbdcc;border-radius:4px;line-height:20.0px;text-align:center;font-size:15px;color:#000;white-space:nowrap"><span style="font-size:1.067em">r</span></div>
<svg class="b" style="left:2376.2px;top:1176.6px" width="10" height="22"><path d="M9 5 C9 15 1 -3 1 12.5 C1 28 9 10 9 20 Z" fill="#a55b80" stroke="#a55b80" stroke-width="0.6"/></svg>
<div class="b" style="left:2385.0px;top:1177.0px;width:29.0px;height:30.0px;background:#a55b80;box-shadow:inset -1px -1px 0 rgba(0,0,0,0.12);"></div>
<div class="b" style="left:2389.0px;top:1182.0px;width:21.0px;height:20.0px;background:#dbbdcc;border-radius:4px;line-height:20.0px;text-align:center;font-size:15px;color:#000;white-space:nowrap"><span style="font-size:1.067em">g</span></div>
<svg class="b" style="left:2571.4px;top:1176.6px" width="10" height="22"><path d="M9 5 C9 15 1 -3 1 12.5 C1 28 9 10 9 20 Z" fill="#a55b80" stroke="#a55b80" stroke-width="0.6"/></svg>
<div class="b" style="left:2580.0px;top:1177.0px;width:30.0px;height:30.0px;background:#a55b80;box-shadow:inset -1px -1px 0 rgba(0,0,0,0.12);"></div>
<div class="b" style="left:2584.0px;top:1182.0px;width:22.0px;height:20.0px;background:#dbbdcc;border-radius:4px;line-height:20.0px;text-align:center;font-size:15px;color:#000;white-space:nowrap"><span style="font-size:1.067em">b</span></div>
<div class="b" style="left:1721.0px;top:1212.0px;width:92.0px;height:76.0px;background:#5ba55b;"></div>
<div class="b" style="left:1721.0px;top:1288.0px;width:53.0px;height:33.0px;background:#5ba55b;"></div>
<div class="b" style="left:1721.0px;top:1321.0px;width:92.0px;height:65.0px;background:#5ba55b;"></div>
<div class="b" style="left:1721.0px;top:1386.0px;width:53.0px;height:31.0px;background:#5ba55b;"></div>
<div class="b" style="left:1721.0px;top:1417.0px;width:92.0px;height:77.0px;background:#5ba55b;"></div>
<div class="b" style="left:1721.0px;top:1494.0px;width:53.0px;height:30.0px;background:#5ba55b;"></div>
<div class="b" style="left:1721.0px;top:1524.0px;width:92.0px;height:66.0px;background:#5ba55b;"></div>
<div class="b" style="left:1721.0px;top:1590.0px;width:53.0px;height:31.0px;background:#5ba55b;"></div>
<div class="b" style="left:1721.0px;top:1621.0px;width:92.0px;height:33.0px;background:#5ba55b;"></div>
<div class="b" style="left:1721.0px;top:1654.0px;width:53.0px;height:24.0px;background:#5ba55b;"></div>
<div class="b" style="left:1721.0px;top:1678.0px;width:92.0px;height:12.0px;background:#5ba55b;"></div>
<div class="b" style="left:1721.0px;top:1690.0px;width:53.0px;height:29.0px;background:#5ba55b;"></div>
<div class="b" style="left:1721.0px;top:1719.0px;width:92.0px;height:13.0px;background:#5ba55b;"></div>
<svg class="b" style="left:1736.2px;top:1211.2px" width="17" height="7"><path d="M0 0 H17 L11 6 H6 Z" fill="#a5a55b"/></svg>
<svg class="b" style="left:1732.0px;top:1218.5px" width="17" height="17" viewBox="0 0 17 17"><rect x="0.5" y="0.5" width="16" height="16" rx="3.5" fill="#4020dc" stroke="#c8b0e0" stroke-width="0.8"/><rect x="7.2" y="2.6" width="2.6" height="3.2" rx="0.6" transform="rotate(0 8.5 8.5)" fill="#f2e6f2"/><rect x="7.2" y="2.6" width="2.6" height="3.2" rx="0.6" transform="rotate(60 8.5 8.5)" fill="#f2e6f2"/><rect x="7.2" y="2.6" width="2.6" height="3.2" rx="0.6" transform="rotate(120 8.5 8.5)" fill="#f2e6f2"/><rect x="7.2" y="2.6" width="2.6" height="3.2" rx="0.6" transform="rotate(180 8.5 8.5)" fill="#f2e6f2"/><rect x="7.2" y="2.6" width="2.6" height="3.2" rx="0.6" transform="rotate(240 8.5 8.5)" fill="#f2e6f2"/><rect x="7.2" y="2.6" width="2.6" height="3.2" rx="0.6" transform="rotate(300 8.5 8.5)" fill="#f2e6f2"/><circle cx="8.5" cy="8.5" r="3.8" fill="#f2e6f2"/><circle cx="8.5" cy="8.5" r="1.9" fill="#4020dc"/></svg>
<div class="t" style="left:1759.8px;top:1215.2px;height:24px;line-height:24px;font-size:15px;color:#fff">如果</div>
<div class="t" style="left:1732.0px;top:1290.7px;height:24px;line-height:24px;font-size:15px;color:#fff">执行</div>
<div class="t" style="left:1732.0px;top:1323.9px;height:24px;line-height:24px;font-size:15px;color:#fff">否则如果</div>
<div class="t" style="left:1732.0px;top:1388.5px;height:24px;line-height:24px;font-size:15px;color:#fff">执行</div>
<div class="t" style="left:1732.0px;top:1421.2px;height:24px;line-height:24px;font-size:15px;color:#fff">否则如果</div>
<div class="t" style="left:1732.0px;top:1496.5px;height:24px;line-height:24px;font-size:15px;color:#fff">执行</div>
<div class="t" style="left:1732.0px;top:1529.5px;height:24px;line-height:24px;font-size:15px;color:#fff">否则如果</div>
<div class="t" style="left:1732.0px;top:1593.5px;height:24px;line-height:24px;font-size:15px;color:#fff">执行</div>
<div class="t" style="left:1732.0px;top:1625.5px;height:24px;line-height:24px;font-size:15px;color:#fff">否则如果</div>
<div class="t" style="left:1732.0px;top:1654.0px;height:24px;line-height:24px;font-size:15px;color:#fff">执行</div>
<div class="t" style="left:1732.0px;top:1692.0px;height:24px;line-height:24px;font-size:15px;color:#fff">否则</div>
<svg class="b" style="left:1803.8px;top:1621.1px" width="10" height="22"><path d="M9 5 C9 15 1 -3 1 12.5 C1 28 9 10 9 20 Z" fill="#ffffff" stroke="#ffffff" stroke-width="0.6"/></svg>
<svg class="b" style="left:1803.8px;top:1212.2px" width="10" height="22"><path d="M9 5 C9 15 1 -3 1 12.5 C1 28 9 10 9 20 Z" fill="#5b80a5" stroke="#5b80a5" stroke-width="0.6"/></svg>
<div class="b" style="left:1813.0px;top:1212.0px;width:1154.0px;height:76.0px;background:#5b80a5;"></div>
<svg class="b" style="left:1803.8px;top:1321.0px" width="10" height="22"><path d="M9 5 C9 15 1 -3 1 12.5 C1 28 9 10 9 20 Z" fill="#5b80a5" stroke="#5b80a5" stroke-width="0.6"/></svg>
<div class="b" style="left:1813.0px;top:1321.0px;width:659.0px;height:65.0px;background:#5b80a5;"></div>
<svg class="b" style="left:1803.8px;top:1417.4px" width="10" height="22"><path d="M9 5 C9 15 1 -3 1 12.5 C1 28 9 10 9 20 Z" fill="#5b80a5" stroke="#5b80a5" stroke-width="0.6"/></svg>
<div class="b" style="left:1813.0px;top:1417.0px;width:1414.0px;height:77.0px;background:#5b80a5;"></div>
<svg class="b" style="left:1803.8px;top:1524.1px" width="10" height="22"><path d="M9 5 C9 15 1 -3 1 12.5 C1 28 9 10 9 20 Z" fill="#5b80a5" stroke="#5b80a5" stroke-width="0.6"/></svg>
<div class="b" style="left:1813.0px;top:1524.0px;width:881.0px;height:66.0px;background:#5b80a5;"></div>
<svg class="b" style="left:1821.5px;top:1218.0px" width="10" height="22"><path d="M9 5 C9 15 1 -3 1 12.5 C1 28 9 10 9 20" fill="none" stroke="rgba(255,255,255,0.55)" stroke-width="1"/></svg>
<div class="b" style="left:1830.0px;top:1218.0px;width:405.0px;height:54.0px;box-sizing:border-box;border:1px solid rgba(255,255,255,0.55)"></div>
<svg class="b" style="left:1839.5px;top:1225.0px" width="10" height="22"><path d="M9 5 C9 15 1 -3 1 12.5 C1 28 9 10 9 20" fill="none" stroke="rgba(255,255,255,0.55)" stroke-width="1"/></svg>
<div class="b" style="left:1848.0px;top:1225.0px;width:158.0px;height:42.0px;box-sizing:border-box;border:1px solid rgba(255,255,255,0.55)"></div>
<svg class="b" style="left:1856.2px;top:1231.3px" width="10" height="22"><path d="M9 5 C9 15 1 -3 1 12.5 C1 28 9 10 9 20 Z" fill="#a55b80" stroke="#a55b80" stroke-width="0.6"/></svg>
<div class="b" style="left:1865.0px;top:1231.0px;width:29.0px;height:30.0px;background:#a55b80;box-shadow:inset -1px -1px 0 rgba(0,0,0,0.12);"></div>
<div class="b" style="left:1870.0px;top:1236.0px;width:19.0px;height:20.0px;background:#dbbdcc;border-radius:4px;line-height:20.0px;text-align:center;font-size:15px;color:#000;white-space:nowrap"><span style="font-size:1.067em">r</span></div>
<div class="b" style="left:1900.0px;top:1237.0px;width:37.0px;height:19.0px;background:#bdccdb;border-radius:4px;line-height:19.0px;padding-left:7px;box-sizing:border-box;font-size:15px;color:#000;white-space:nowrap;overflow:hidden">></div>
<svg class="b" style="left:1923.0px;top:1244.0px" width="8" height="5"><path d="M0.5 0.5 H7.5 L4 4.5 Z" fill="#5b80a5"/></svg>
<svg class="b" style="left:1941.0px;top:1231.3px" width="10" height="22"><path d="M9 5 C9 15 1 -3 1 12.5 C1 28 9 10 9 20 Z" fill="#5b67a5" stroke="#5b67a5" stroke-width="0.6"/></svg>
<div class="b" style="left:1950.0px;top:1231.0px;width:44.0px;height:30.0px;background:#5b67a5;"></div>
<div class="b" style="left:1955.0px;top:1236.0px;width:33.0px;height:20.0px;background:#bdc2db;border-radius:4px;line-height:20.0px;text-align:center;font-size:15px;color:#000;white-space:nowrap"><span style="font-size:1.067em">1.2</span></div>
<div class="b" style="left:2011.0px;top:1229.0px;width:42.0px;height:20.0px;background:#bdccdb;border-radius:4px;line-height:20.0px;padding-left:7px;box-sizing:border-box;font-size:15px;color:#000;white-space:nowrap;overflow:hidden">且</div>
<svg class="b" style="left:2039.0px;top:1236.5px" width="8" height="5"><path d="M0.5 0.5 H7.5 L4 4.5 Z" fill="#5b80a5"/></svg>
<svg class="b" style="left:2057.5px;top:1225.0px" width="10" height="22"><path d="M9 5 C9 15 1 -3 1 12.5 C1 28 9 10 9 20" fill="none" stroke="rgba(255,255,255,0.55)" stroke-width="1"/></svg>
<div class="b" style="left:2066.0px;top:1225.0px;width:158.0px;height:42.0px;box-sizing:border-box;border:1px solid rgba(255,255,255,0.55)"></div>
<svg class="b" style="left:2074.0px;top:1231.3px" width="10" height="22"><path d="M9 5 C9 15 1 -3 1 12.5 C1 28 9 10 9 20 Z" fill="#a55b80" stroke="#a55b80" stroke-width="0.6"/></svg>
<div class="b" style="left:2083.0px;top:1231.0px;width:29.0px;height:30.0px;background:#a55b80;box-shadow:inset -1px -1px 0 rgba(0,0,0,0.12);"></div>
<div class="b" style="left:2088.0px;top:1236.0px;width:19.0px;height:20.0px;background:#dbbdcc;border-radius:4px;line-height:20.0px;text-align:center;font-size:15px;color:#000;white-space:nowrap"><span style="font-size:1.067em">r</span></div>
<div class="b" style="left:2117.0px;top:1237.0px;width:38.0px;height:19.0px;background:#bdccdb;border-radius:4px;line-height:19.0px;padding-left:7px;box-sizing:border-box;font-size:15px;color:#000;white-space:nowrap;overflow:hidden"><</div>
<svg class="b" style="left:2141.0px;top:1244.0px" width="8" height="5"><path d="M0.5 0.5 H7.5 L4 4.5 Z" fill="#5b80a5"/></svg>
<svg class="b" style="left:2158.4px;top:1231.3px" width="10" height="22"><path d="M9 5 C9 15 1 -3 1 12.5 C1 28 9 10 9 20 Z" fill="#5b67a5" stroke="#5b67a5" stroke-width="0.6"/></svg>
<div class="b" style="left:2167.0px;top:1231.0px;width:45.0px;height:30.0px;background:#5b67a5;"></div>
<div class="b" style="left:2172.0px;top:1236.0px;width:35.0px;height:20.0px;background:#bdc2db;border-radius:4px;line-height:20.0px;text-align:center;font-size:15px;color:#000;white-space:nowrap"><span style="font-size:1.067em">1.9</span></div>
<div class="b" style="left:2241.0px;top:1223.0px;width:42.0px;height:19.0px;background:#bdccdb;border-radius:4px;line-height:19.0px;padding-left:7px;box-sizing:border-box;font-size:15px;color:#000;white-space:nowrap;overflow:hidden">且</div>
<svg class="b" style="left:2269.0px;top:1230.0px" width="8" height="5"><path d="M0.5 0.5 H7.5 L4 4.5 Z" fill="#5b80a5"/></svg>
<svg class="b" style="left:2287.5px;top:1218.0px" width="10" height="22"><path d="M9 5 C9 15 1 -3 1 12.5 C1 28 9 10 9 20" fill="none" stroke="rgba(255,255,255,0.55)" stroke-width="1"/></svg>
<div class="b" style="left:2296.0px;top:1218.0px;width:661.0px;height:66.0px;box-sizing:border-box;border:1px solid rgba(255,255,255,0.55)"></div>
<svg class="b" style="left:2305.5px;top:1225.0px" width="10" height="22"><path d="M9 5 C9 15 1 -3 1 12.5 C1 28 9 10 9 20" fill="none" stroke="rgba(255,255,255,0.55)" stroke-width="1"/></svg>
<div class="b" style="left:2314.0px;top:1225.0px;width:148.0px;height:43.0px;box-sizing:border-box;border:1px solid rgba(255,255,255,0.55)"></div>
<svg class="b" style="left:2322.0px;top:1231.0px" width="10" height="22"><path d="M9 5 C9 15 1 -3 1 12.5 C1 28 9 10 9 20 Z" fill="#a55b80" stroke="#a55b80" stroke-width="0.6"/></svg>
<div class="b" style="left:2331.0px;top:1231.0px;width:32.0px;height:30.0px;background:#a55b80;box-shadow:inset -1px -1px 0 rgba(0,0,0,0.12);"></div>
<div class="b" style="left:2336.0px;top:1236.0px;width:22.0px;height:20.0px;background:#dbbdcc;border-radius:4px;line-height:20.0px;text-align:center;font-size:15px;color:#000;white-space:nowrap"><span style="font-size:1.067em">g</span></div>
<div class="b" style="left:2369.0px;top:1237.0px;width:38.0px;height:19.0px;background:#bdccdb;border-radius:4px;line-height:19.0px;padding-left:7px;box-sizing:border-box;font-size:15px;color:#000;white-space:nowrap;overflow:hidden"><</div>
<svg class="b" style="left:2393.0px;top:1244.0px" width="8" height="5"><path d="M0.5 0.5 H7.5 L4 4.5 Z" fill="#5b80a5"/></svg>
<svg class="b" style="left:2411.4px;top:1231.0px" width="10" height="22"><path d="M9 5 C9 15 1 -3 1 12.5 C1 28 9 10 9 20 Z" fill="#5b67a5" stroke="#5b67a5" stroke-width="0.6"/></svg>
<div class="b" style="left:2420.0px;top:1231.0px;width:32.0px;height:30.0px;background:#5b67a5;"></div>
<div class="b" style="left:2425.0px;top:1236.0px;width:21.0px;height:20.0px;background:#bdc2db;border-radius:4px;line-height:20.0px;text-align:center;font-size:15px;color:#000;white-space:nowrap"><span style="font-size:1.067em">1</span></div>
<div class="b" style="left:2468.0px;top:1229.0px;width:42.0px;height:19.0px;background:#bdccdb;border-radius:4px;line-height:19.0px;padding-left:7px;box-sizing:border-box;font-size:15px;color:#000;white-space:nowrap;overflow:hidden">且</div>
<svg class="b" style="left:2496.0px;top:1236.0px" width="8" height="5"><path d="M0.5 0.5 H7.5 L4 4.5 Z" fill="#5b80a5"/></svg>
<svg class="b" style="left:2514.5px;top:1225.0px" width="10" height="22"><path d="M9 5 C9 15 1 -3 1 12.5 C1 28 9 10 9 20" fill="none" stroke="rgba(255,255,255,0.55)" stroke-width="1"/></svg>
<div class="b" style="left:2523.0px;top:1225.0px;width:422.0px;height:53.0px;box-sizing:border-box;border:1px solid rgba(255,255,255,0.55)"></div>
<svg class="b" style="left:2532.5px;top:1231.0px" width="10" height="22"><path d="M9 5 C9 15 1 -3 1 12.5 C1 28 9 10 9 20" fill="none" stroke="rgba(255,255,255,0.55)" stroke-width="1"/></svg>
<div class="b" style="left:2541.0px;top:1231.0px;width:170.0px;height:42.0px;box-sizing:border-box;border:1px solid rgba(255,255,255,0.55)"></div>
<svg class="b" style="left:2549.4px;top:1236.5px" width="10" height="22"><path d="M9 5 C9 15 1 -3 1 12.5 C1 28 9 10 9 20 Z" fill="#a55b80" stroke="#a55b80" stroke-width="0.6"/></svg>
<div class="b" style="left:2558.0px;top:1236.0px;width:32.0px;height:32.0px;background:#a55b80;box-shadow:inset -1px -1px 0 rgba(0,0,0,0.12);"></div>
<div class="b" style="left:2563.0px;top:1242.0px;width:22.0px;height:20.0px;background:#dbbdcc;border-radius:4px;line-height:20.0px;text-align:center;font-size:15px;color:#000;white-space:nowrap"><span style="font-size:1.067em">b</span></div>
<div class="b" style="left:2596.0px;top:1242.0px;width:38.0px;height:20.0px;background:#bdccdb;border-radius:4px;line-height:20.0px;padding-left:7px;box-sizing:border-box;font-size:15px;color:#000;white-space:nowrap;overflow:hidden">></div>
<svg class="b" style="left:2620.0px;top:1249.5px" width="8" height="5"><path d="M0.5 0.5 H7.5 L4 4.5 Z" fill="#5b80a5"/></svg>
<svg class="b" style="left:2637.7px;top:1236.5px" width="10" height="22"><path d="M9 5 C9 15 1 -3 1 12.5 C1 28 9 10 9 20 Z" fill="#5b67a5" stroke="#5b67a5" stroke-width="0.6"/></svg>
<div class="b" style="left:2647.0px;top:1236.0px;width:53.0px;height:32.0px;background:#5b67a5;"></div>
<div class="b" style="left:2652.0px;top:1242.0px;width:43.0px;height:20.0px;background:#bdc2db;border-radius:4px;line-height:20.0px;text-align:center;font-size:15px;color:#000;white-space:nowrap"><span style="font-size:1.067em">0.45</span></div>
<div class="b" style="left:2716.0px;top:1235.0px;width:43.0px;height:20.0px;background:#bdccdb;border-radius:4px;line-height:20.0px;padding-left:7px;box-sizing:border-box;font-size:15px;color:#000;white-space:nowrap;overflow:hidden">且</div>
<svg class="b" style="left:2745.0px;top:1242.5px" width="8" height="5"><path d="M0.5 0.5 H7.5 L4 4.5 Z" fill="#5b80a5"/></svg>
<svg class="b" style="left:2763.5px;top:1231.0px" width="10" height="22"><path d="M9 5 C9 15 1 -3 1 12.5 C1 28 9 10 9 20" fill="none" stroke="rgba(255,255,255,0.55)" stroke-width="1"/></svg>
<div class="b" style="left:2772.0px;top:1231.0px;width:162.0px;height:42.0px;box-sizing:border-box;border:1px solid rgba(255,255,255,0.55)"></div>
<svg class="b" style="left:2780.0px;top:1236.5px" width="10" height="22"><path d="M9 5 C9 15 1 -3 1 12.5 C1 28 9 10 9 20 Z" fill="#a55b80" stroke="#a55b80" stroke-width="0.6"/></svg>
<div class="b" style="left:2789.0px;top:1236.0px;width:32.0px;height:32.0px;background:#a55b80;box-shadow:inset -1px -1px 0 rgba(0,0,0,0.12);"></div>
<div class="b" style="left:2794.0px;top:1242.0px;width:22.0px;height:20.0px;background:#dbbdcc;border-radius:4px;line-height:20.0px;text-align:center;font-size:15px;color:#000;white-space:nowrap"><span style="font-size:1.067em">b</span></div>
<div class="b" style="left:2827.0px;top:1242.0px;width:38.0px;height:20.0px;background:#bdccdb;border-radius:4px;line-height:20.0px;padding-left:7px;box-sizing:border-box;font-size:15px;color:#000;white-space:nowrap;overflow:hidden"><</div>
<svg class="b" style="left:2851.0px;top:1249.5px" width="8" height="5"><path d="M0.5 0.5 H7.5 L4 4.5 Z" fill="#5b80a5"/></svg>
<svg class="b" style="left:2868.7px;top:1236.5px" width="10" height="22"><path d="M9 5 C9 15 1 -3 1 12.5 C1 28 9 10 9 20 Z" fill="#5b67a5" stroke="#5b67a5" stroke-width="0.6"/></svg>
<div class="b" style="left:2878.0px;top:1236.0px;width:44.0px;height:32.0px;background:#5b67a5;"></div>
<div class="b" style="left:2883.0px;top:1242.0px;width:34.0px;height:20.0px;background:#bdc2db;border-radius:4px;line-height:20.0px;text-align:center;font-size:15px;color:#000;white-space:nowrap"><span style="font-size:1.067em">0.9</span></div>
<svg class="b" style="left:1821.5px;top:1326.0px" width="10" height="22"><path d="M9 5 C9 15 1 -3 1 12.5 C1 28 9 10 9 20" fill="none" stroke="rgba(255,255,255,0.55)" stroke-width="1"/></svg>
<div class="b" style="left:1830.0px;top:1326.0px;width:158.0px;height:43.0px;box-sizing:border-box;border:1px solid rgba(255,255,255,0.55)"></div>
<svg class="b" style="left:1839.0px;top:1333.0px" width="10" height="22"><path d="M9 5 C9 15 1 -3 1 12.5 C1 28 9 10 9 20 Z" fill="#a55b80" stroke="#a55b80" stroke-width="0.6"/></svg>
<div class="b" style="left:1848.0px;top:1333.0px;width:28.0px;height:30.0px;background:#a55b80;box-shadow:inset -1px -1px 0 rgba(0,0,0,0.12);"></div>
<div class="b" style="left:1853.0px;top:1338.0px;width:18.0px;height:20.0px;background:#dbbdcc;border-radius:4px;line-height:20.0px;text-align:center;font-size:15px;color:#000;white-space:nowrap"><span style="font-size:1.067em">r</span></div>
<div class="b" style="left:1882.0px;top:1338.0px;width:38.0px;height:20.0px;background:#bdccdb;border-radius:4px;line-height:20.0px;padding-left:7px;box-sizing:border-box;font-size:15px;color:#000;white-space:nowrap;overflow:hidden"><</div>
<svg class="b" style="left:1906.0px;top:1345.5px" width="8" height="5"><path d="M0.5 0.5 H7.5 L4 4.5 Z" fill="#5b80a5"/></svg>
<svg class="b" style="left:1923.3px;top:1333.0px" width="10" height="22"><path d="M9 5 C9 15 1 -3 1 12.5 C1 28 9 10 9 20 Z" fill="#5b67a5" stroke="#5b67a5" stroke-width="0.6"/></svg>
<div class="b" style="left:1932.0px;top:1333.0px;width:45.0px;height:30.0px;background:#5b67a5;"></div>
<div class="b" style="left:1937.0px;top:1338.0px;width:35.0px;height:20.0px;background:#bdc2db;border-radius:4px;line-height:20.0px;text-align:center;font-size:15px;color:#000;white-space:nowrap"><span style="font-size:1.067em">1.1</span></div>
<div class="b" style="left:1994.0px;top:1332.0px;width:42.0px;height:19.0px;background:#bdccdb;border-radius:4px;line-height:19.0px;padding-left:7px;box-sizing:border-box;font-size:15px;color:#000;white-space:nowrap;overflow:hidden">且</div>
<svg class="b" style="left:2022.0px;top:1339.0px" width="8" height="5"><path d="M0.5 0.5 H7.5 L4 4.5 Z" fill="#5b80a5"/></svg>
<svg class="b" style="left:2040.5px;top:1326.0px" width="10" height="22"><path d="M9 5 C9 15 1 -3 1 12.5 C1 28 9 10 9 20" fill="none" stroke="rgba(255,255,255,0.55)" stroke-width="1"/></svg>
<div class="b" style="left:2049.0px;top:1326.0px;width:412.0px;height:55.0px;box-sizing:border-box;border:1px solid rgba(255,255,255,0.55)"></div>
<svg class="b" style="left:2057.5px;top:1333.0px" width="10" height="22"><path d="M9 5 C9 15 1 -3 1 12.5 C1 28 9 10 9 20" fill="none" stroke="rgba(255,255,255,0.55)" stroke-width="1"/></svg>
<div class="b" style="left:2066.0px;top:1333.0px;width:162.0px;height:42.0px;box-sizing:border-box;border:1px solid rgba(255,255,255,0.55)"></div>
<svg class="b" style="left:2074.0px;top:1339.5px" width="10" height="22"><path d="M9 5 C9 15 1 -3 1 12.5 C1 28 9 10 9 20 Z" fill="#a55b80" stroke="#a55b80" stroke-width="0.6"/></svg>
<div class="b" style="left:2083.0px;top:1340.0px;width:33.0px;height:30.0px;background:#a55b80;box-shadow:inset -1px -1px 0 rgba(0,0,0,0.12);"></div>
<div class="b" style="left:2088.0px;top:1344.0px;width:23.0px;height:20.0px;background:#dbbdcc;border-radius:4px;line-height:20.0px;text-align:center;font-size:15px;color:#000;white-space:nowrap"><span style="font-size:1.067em">g</span></div>
<div class="b" style="left:2121.0px;top:1345.0px;width:38.0px;height:19.0px;background:#bdccdb;border-radius:4px;line-height:19.0px;padding-left:7px;box-sizing:border-box;font-size:15px;color:#000;white-space:nowrap;overflow:hidden">></div>
<svg class="b" style="left:2145.0px;top:1352.0px" width="8" height="5"><path d="M0.5 0.5 H7.5 L4 4.5 Z" fill="#5b80a5"/></svg>
<svg class="b" style="left:2162.5px;top:1339.5px" width="10" height="22"><path d="M9 5 C9 15 1 -3 1 12.5 C1 28 9 10 9 20 Z" fill="#5b67a5" stroke="#5b67a5" stroke-width="0.6"/></svg>
<div class="b" style="left:2172.0px;top:1340.0px;width:44.0px;height:30.0px;background:#5b67a5;"></div>
<div class="b" style="left:2176.0px;top:1344.0px;width:35.0px;height:20.0px;background:#bdc2db;border-radius:4px;line-height:20.0px;text-align:center;font-size:15px;color:#000;white-space:nowrap"><span style="font-size:1.067em">1.3</span></div>
<div class="b" style="left:2233.0px;top:1338.0px;width:43.0px;height:19.0px;background:#bdccdb;border-radius:4px;line-height:19.0px;padding-left:7px;box-sizing:border-box;font-size:15px;color:#000;white-space:nowrap;overflow:hidden">且</div>
<svg class="b" style="left:2262.0px;top:1345.0px" width="8" height="5"><path d="M0.5 0.5 H7.5 L4 4.5 Z" fill="#5b80a5"/></svg>
<svg class="b" style="left:2279.5px;top:1333.0px" width="10" height="22"><path d="M9 5 C9 15 1 -3 1 12.5 C1 28 9 10 9 20" fill="none" stroke="rgba(255,255,255,0.55)" stroke-width="1"/></svg>
<div class="b" style="left:2288.0px;top:1333.0px;width:162.0px;height:42.0px;box-sizing:border-box;border:1px solid rgba(255,255,255,0.55)"></div>
<svg class="b" style="left:2295.6px;top:1339.5px" width="10" height="22"><path d="M9 5 C9 15 1 -3 1 12.5 C1 28 9 10 9 20 Z" fill="#a55b80" stroke="#a55b80" stroke-width="0.6"/></svg>
<div class="b" style="left:2305.0px;top:1340.0px;width:33.0px;height:30.0px;background:#a55b80;box-shadow:inset -1px -1px 0 rgba(0,0,0,0.12);"></div>
<div class="b" style="left:2310.0px;top:1344.0px;width:23.0px;height:20.0px;background:#dbbdcc;border-radius:4px;line-height:20.0px;text-align:center;font-size:15px;color:#000;white-space:nowrap"><span style="font-size:1.067em">b</span></div>
<div class="b" style="left:2343.0px;top:1345.0px;width:39.0px;height:19.0px;background:#bdccdb;border-radius:4px;line-height:19.0px;padding-left:7px;box-sizing:border-box;font-size:15px;color:#000;white-space:nowrap;overflow:hidden"><</div>
<svg class="b" style="left:2368.0px;top:1352.0px" width="8" height="5"><path d="M0.5 0.5 H7.5 L4 4.5 Z" fill="#5b80a5"/></svg>
<svg class="b" style="left:2384.0px;top:1339.5px" width="10" height="22"><path d="M9 5 C9 15 1 -3 1 12.5 C1 28 9 10 9 20 Z" fill="#5b67a5" stroke="#5b67a5" stroke-width="0.6"/></svg>
<div class="b" style="left:2393.0px;top:1340.0px;width:46.0px;height:30.0px;background:#5b67a5;"></div>
<div class="b" style="left:2398.0px;top:1344.0px;width:36.0px;height:20.0px;background:#bdc2db;border-radius:4px;line-height:20.0px;text-align:center;font-size:15px;color:#000;white-space:nowrap"><span style="font-size:1.067em">0.7</span></div>
<svg class="b" style="left:1821.5px;top:1424.0px" width="10" height="22"><path d="M9 5 C9 15 1 -3 1 12.5 C1 28 9 10 9 20" fill="none" stroke="rgba(255,255,255,0.55)" stroke-width="1"/></svg>
<div class="b" style="left:1830.0px;top:1424.0px;width:393.0px;height:64.0px;box-sizing:border-box;border:1px solid rgba(255,255,255,0.55)"></div>
<svg class="b" style="left:1839.5px;top:1430.0px" width="10" height="22"><path d="M9 5 C9 15 1 -3 1 12.5 C1 28 9 10 9 20" fill="none" stroke="rgba(255,255,255,0.55)" stroke-width="1"/></svg>
<div class="b" style="left:1848.0px;top:1430.0px;width:146.0px;height:43.0px;box-sizing:border-box;border:1px solid rgba(255,255,255,0.55)"></div>
<svg class="b" style="left:1856.2px;top:1436.5px" width="10" height="22"><path d="M9 5 C9 15 1 -3 1 12.5 C1 28 9 10 9 20 Z" fill="#a55b80" stroke="#a55b80" stroke-width="0.6"/></svg>
<div class="b" style="left:1865.0px;top:1436.0px;width:29.0px;height:31.0px;background:#a55b80;box-shadow:inset -1px -1px 0 rgba(0,0,0,0.12);"></div>
<div class="b" style="left:1870.0px;top:1442.0px;width:19.0px;height:20.0px;background:#dbbdcc;border-radius:4px;line-height:20.0px;text-align:center;font-size:15px;color:#000;white-space:nowrap"><span style="font-size:1.067em">r</span></div>
<div class="b" style="left:1900.0px;top:1442.0px;width:37.0px;height:19.0px;background:#bdccdb;border-radius:4px;line-height:19.0px;padding-left:7px;box-sizing:border-box;font-size:15px;color:#000;white-space:nowrap;overflow:hidden">></div>
<svg class="b" style="left:1923.0px;top:1449.0px" width="8" height="5"><path d="M0.5 0.5 H7.5 L4 4.5 Z" fill="#5b80a5"/></svg>
<svg class="b" style="left:1941.0px;top:1436.5px" width="10" height="22"><path d="M9 5 C9 15 1 -3 1 12.5 C1 28 9 10 9 20 Z" fill="#5b67a5" stroke="#5b67a5" stroke-width="0.6"/></svg>
<div class="b" style="left:1950.0px;top:1436.0px;width:33.0px;height:31.0px;background:#5b67a5;"></div>
<div class="b" style="left:1955.0px;top:1442.0px;width:23.0px;height:20.0px;background:#bdc2db;border-radius:4px;line-height:20.0px;text-align:center;font-size:15px;color:#000;white-space:nowrap"><span style="font-size:1.067em">1</span></div>
<div class="b" style="left:1998.0px;top:1435.0px;width:42.0px;height:19.0px;background:#bdccdb;border-radius:4px;line-height:19.0px;padding-left:7px;box-sizing:border-box;font-size:15px;color:#000;white-space:nowrap;overflow:hidden">且</div>
<svg class="b" style="left:2026.0px;top:1442.0px" width="8" height="5"><path d="M0.5 0.5 H7.5 L4 4.5 Z" fill="#5b80a5"/></svg>
<svg class="b" style="left:2044.5px;top:1430.0px" width="10" height="22"><path d="M9 5 C9 15 1 -3 1 12.5 C1 28 9 10 9 20" fill="none" stroke="rgba(255,255,255,0.55)" stroke-width="1"/></svg>
<div class="b" style="left:2053.0px;top:1430.0px;width:158.0px;height:43.0px;box-sizing:border-box;border:1px solid rgba(255,255,255,0.55)"></div>
<svg class="b" style="left:2053.8px;top:1436.5px" width="10" height="22"><path d="M9 5 C9 15 1 -3 1 12.5 C1 28 9 10 9 20 Z" fill="#a55b80" stroke="#a55b80" stroke-width="0.6"/></svg>
<div class="b" style="left:2063.0px;top:1436.0px;width:37.0px;height:31.0px;background:#a55b80;box-shadow:inset -1px -1px 0 rgba(0,0,0,0.12);"></div>
<div class="b" style="left:2068.0px;top:1442.0px;width:26.0px;height:20.0px;background:#dbbdcc;border-radius:4px;line-height:20.0px;text-align:center;font-size:15px;color:#000;white-space:nowrap"><span style="font-size:1.067em">r</span></div>
<div class="b" style="left:2104.0px;top:1442.0px;width:39.0px;height:19.0px;background:#bdccdb;border-radius:4px;line-height:19.0px;padding-left:7px;box-sizing:border-box;font-size:15px;color:#000;white-space:nowrap;overflow:hidden"><</div>
<svg class="b" style="left:2129.0px;top:1449.0px" width="8" height="5"><path d="M0.5 0.5 H7.5 L4 4.5 Z" fill="#5b80a5"/></svg>
<svg class="b" style="left:2147.0px;top:1436.5px" width="10" height="22"><path d="M9 5 C9 15 1 -3 1 12.5 C1 28 9 10 9 20 Z" fill="#5b67a5" stroke="#5b67a5" stroke-width="0.6"/></svg>
<div class="b" style="left:2156.0px;top:1436.0px;width:44.0px;height:31.0px;background:#5b67a5;"></div>
<div class="b" style="left:2161.0px;top:1442.0px;width:33.0px;height:20.0px;background:#bdc2db;border-radius:4px;line-height:20.0px;text-align:center;font-size:15px;color:#000;white-space:nowrap"><span style="font-size:1.067em">1.5</span></div>
<div class="b" style="left:2228.0px;top:1429.0px;width:42.0px;height:19.0px;background:#bdccdb;border-radius:4px;line-height:19.0px;padding-left:7px;box-sizing:border-box;font-size:15px;color:#000;white-space:nowrap;overflow:hidden">且</div>
<svg class="b" style="left:2256.0px;top:1436.0px" width="8" height="5"><path d="M0.5 0.5 H7.5 L4 4.5 Z" fill="#5b80a5"/></svg>
<svg class="b" style="left:2273.5px;top:1424.0px" width="10" height="22"><path d="M9 5 C9 15 1 -3 1 12.5 C1 28 9 10 9 20" fill="none" stroke="rgba(255,255,255,0.55)" stroke-width="1"/></svg>
<div class="b" style="left:2282.0px;top:1424.0px;width:934.0px;height:64.0px;box-sizing:border-box;border:1px solid rgba(255,255,255,0.55)"></div>
<svg class="b" style="left:2291.5px;top:1431.0px" width="10" height="22"><path d="M9 5 C9 15 1 -3 1 12.5 C1 28 9 10 9 20" fill="none" stroke="rgba(255,255,255,0.55)" stroke-width="1"/></svg>
<div class="b" style="left:2300.0px;top:1431.0px;width:414.0px;height:53.0px;box-sizing:border-box;border:1px solid rgba(255,255,255,0.55)"></div>
<svg class="b" style="left:2309.5px;top:1437.0px" width="10" height="22"><path d="M9 5 C9 15 1 -3 1 12.5 C1 28 9 10 9 20" fill="none" stroke="rgba(255,255,255,0.55)" stroke-width="1"/></svg>
<div class="b" style="left:2318.0px;top:1437.0px;width:163.0px;height:42.0px;box-sizing:border-box;border:1px solid rgba(255,255,255,0.55)"></div>
<svg class="b" style="left:2327.5px;top:1442.7px" width="10" height="22"><path d="M9 5 C9 15 1 -3 1 12.5 C1 28 9 10 9 20 Z" fill="#a55b80" stroke="#a55b80" stroke-width="0.6"/></svg>
<div class="b" style="left:2336.0px;top:1443.0px;width:32.0px;height:30.0px;background:#a55b80;box-shadow:inset -1px -1px 0 rgba(0,0,0,0.12);"></div>
<div class="b" style="left:2342.0px;top:1448.0px;width:21.0px;height:20.0px;background:#dbbdcc;border-radius:4px;line-height:20.0px;text-align:center;font-size:15px;color:#000;white-space:nowrap"><span style="font-size:1.067em">g</span></div>
<div class="b" style="left:2373.0px;top:1448.0px;width:38.0px;height:19.0px;background:#bdccdb;border-radius:4px;line-height:19.0px;padding-left:7px;box-sizing:border-box;font-size:15px;color:#000;white-space:nowrap;overflow:hidden">></div>
<svg class="b" style="left:2397.0px;top:1455.0px" width="8" height="5"><path d="M0.5 0.5 H7.5 L4 4.5 Z" fill="#5b80a5"/></svg>
<svg class="b" style="left:2415.0px;top:1442.7px" width="10" height="22"><path d="M9 5 C9 15 1 -3 1 12.5 C1 28 9 10 9 20 Z" fill="#5b67a5" stroke="#5b67a5" stroke-width="0.6"/></svg>
<div class="b" style="left:2424.0px;top:1443.0px;width:45.0px;height:30.0px;background:#5b67a5;"></div>
<div class="b" style="left:2429.0px;top:1448.0px;width:35.0px;height:20.0px;background:#bdc2db;border-radius:4px;line-height:20.0px;text-align:center;font-size:15px;color:#000;white-space:nowrap"><span style="font-size:1.067em">1.1</span></div>
<div class="b" style="left:2485.0px;top:1442.0px;width:42.0px;height:18.0px;background:#bdccdb;border-radius:4px;line-height:18.0px;padding-left:7px;box-sizing:border-box;font-size:15px;color:#000;white-space:nowrap;overflow:hidden">且</div>
<svg class="b" style="left:2513.0px;top:1448.5px" width="8" height="5"><path d="M0.5 0.5 H7.5 L4 4.5 Z" fill="#5b80a5"/></svg>
<svg class="b" style="left:2532.5px;top:1437.0px" width="10" height="22"><path d="M9 5 C9 15 1 -3 1 12.5 C1 28 9 10 9 20" fill="none" stroke="rgba(255,255,255,0.55)" stroke-width="1"/></svg>
<div class="b" style="left:2541.0px;top:1437.0px;width:161.0px;height:42.0px;box-sizing:border-box;border:1px solid rgba(255,255,255,0.55)"></div>
<svg class="b" style="left:2549.4px;top:1442.7px" width="10" height="22"><path d="M9 5 C9 15 1 -3 1 12.5 C1 28 9 10 9 20 Z" fill="#a55b80" stroke="#a55b80" stroke-width="0.6"/></svg>
<div class="b" style="left:2558.0px;top:1443.0px;width:32.0px;height:30.0px;background:#a55b80;box-shadow:inset -1px -1px 0 rgba(0,0,0,0.12);"></div>
<div class="b" style="left:2563.0px;top:1448.0px;width:22.0px;height:20.0px;background:#dbbdcc;border-radius:4px;line-height:20.0px;text-align:center;font-size:15px;color:#000;white-space:nowrap"><span style="font-size:1.067em">g</span></div>
<div class="b" style="left:2596.0px;top:1448.0px;width:38.0px;height:19.0px;background:#bdccdb;border-radius:4px;line-height:19.0px;padding-left:7px;box-sizing:border-box;font-size:15px;color:#000;white-space:nowrap;overflow:hidden"><</div>
<svg class="b" style="left:2620.0px;top:1455.0px" width="8" height="5"><path d="M0.5 0.5 H7.5 L4 4.5 Z" fill="#5b80a5"/></svg>
<svg class="b" style="left:2637.7px;top:1442.7px" width="10" height="22"><path d="M9 5 C9 15 1 -3 1 12.5 C1 28 9 10 9 20 Z" fill="#5b67a5" stroke="#5b67a5" stroke-width="0.6"/></svg>
<div class="b" style="left:2647.0px;top:1443.0px;width:43.0px;height:30.0px;background:#5b67a5;"></div>
<div class="b" style="left:2652.0px;top:1448.0px;width:33.0px;height:20.0px;background:#bdc2db;border-radius:4px;line-height:20.0px;text-align:center;font-size:15px;color:#000;white-space:nowrap"><span style="font-size:1.067em">1.4</span></div>
<div class="b" style="left:2719.0px;top:1435.0px;width:43.0px;height:19.0px;background:#bdccdb;border-radius:4px;line-height:19.0px;padding-left:7px;box-sizing:border-box;font-size:15px;color:#000;white-space:nowrap;overflow:hidden">且</div>
<svg class="b" style="left:2748.0px;top:1442.0px" width="8" height="5"><path d="M0.5 0.5 H7.5 L4 4.5 Z" fill="#5b80a5"/></svg>
<svg class="b" style="left:2765.5px;top:1431.0px" width="10" height="22"><path d="M9 5 C9 15 1 -3 1 12.5 C1 28 9 10 9 20" fill="none" stroke="rgba(255,255,255,0.55)" stroke-width="1"/></svg>
<div class="b" style="left:2774.0px;top:1431.0px;width:431.0px;height:53.0px;box-sizing:border-box;border:1px solid rgba(255,255,255,0.55)"></div>
<svg class="b" style="left:2783.5px;top:1437.0px" width="10" height="22"><path d="M9 5 C9 15 1 -3 1 12.5 C1 28 9 10 9 20" fill="none" stroke="rgba(255,255,255,0.55)" stroke-width="1"/></svg>
<div class="b" style="left:2792.0px;top:1437.0px;width:170.0px;height:42.0px;box-sizing:border-box;border:1px solid rgba(255,255,255,0.55)"></div>
<svg class="b" style="left:2800.0px;top:1442.7px" width="10" height="22"><path d="M9 5 C9 15 1 -3 1 12.5 C1 28 9 10 9 20 Z" fill="#a55b80" stroke="#a55b80" stroke-width="0.6"/></svg>
<div class="b" style="left:2809.0px;top:1443.0px;width:32.0px;height:30.0px;background:#a55b80;box-shadow:inset -1px -1px 0 rgba(0,0,0,0.12);"></div>
<div class="b" style="left:2814.0px;top:1448.0px;width:22.0px;height:20.0px;background:#dbbdcc;border-radius:4px;line-height:20.0px;text-align:center;font-size:15px;color:#000;white-space:nowrap"><span style="font-size:1.067em">b</span></div>
<div class="b" style="left:2847.0px;top:1448.0px;width:38.0px;height:19.0px;background:#bdccdb;border-radius:4px;line-height:19.0px;padding-left:7px;box-sizing:border-box;font-size:15px;color:#000;white-space:nowrap;overflow:hidden">></div>
<svg class="b" style="left:2871.0px;top:1455.0px" width="8" height="5"><path d="M0.5 0.5 H7.5 L4 4.5 Z" fill="#5b80a5"/></svg>
<svg class="b" style="left:2889.5px;top:1442.7px" width="10" height="22"><path d="M9 5 C9 15 1 -3 1 12.5 C1 28 9 10 9 20 Z" fill="#5b67a5" stroke="#5b67a5" stroke-width="0.6"/></svg>
<div class="b" style="left:2898.0px;top:1443.0px;width:53.0px;height:30.0px;background:#5b67a5;"></div>
<div class="b" style="left:2904.0px;top:1448.0px;width:42.0px;height:20.0px;background:#bdc2db;border-radius:4px;line-height:20.0px;text-align:center;font-size:15px;color:#000;white-space:nowrap"><span style="font-size:1.067em">0.35</span></div>
<div class="b" style="left:2968.0px;top:1442.0px;width:42.0px;height:18.0px;background:#bdccdb;border-radius:4px;line-height:18.0px;padding-left:7px;box-sizing:border-box;font-size:15px;color:#000;white-space:nowrap;overflow:hidden">且</div>
<svg class="b" style="left:2996.0px;top:1448.5px" width="8" height="5"><path d="M0.5 0.5 H7.5 L4 4.5 Z" fill="#5b80a5"/></svg>
<svg class="b" style="left:3014.5px;top:1437.0px" width="10" height="22"><path d="M9 5 C9 15 1 -3 1 12.5 C1 28 9 10 9 20" fill="none" stroke="rgba(255,255,255,0.55)" stroke-width="1"/></svg>
<div class="b" style="left:3023.0px;top:1437.0px;width:170.0px;height:42.0px;box-sizing:border-box;border:1px solid rgba(255,255,255,0.55)"></div>
<svg class="b" style="left:3031.0px;top:1442.7px" width="10" height="22"><path d="M9 5 C9 15 1 -3 1 12.5 C1 28 9 10 9 20 Z" fill="#a55b80" stroke="#a55b80" stroke-width="0.6"/></svg>
<div class="b" style="left:3040.0px;top:1443.0px;width:32.0px;height:30.0px;background:#a55b80;box-shadow:inset -1px -1px 0 rgba(0,0,0,0.12);"></div>
<div class="b" style="left:3045.0px;top:1448.0px;width:22.0px;height:20.0px;background:#dbbdcc;border-radius:4px;line-height:20.0px;text-align:center;font-size:15px;color:#000;white-space:nowrap"><span style="font-size:1.067em">b</span></div>
<div class="b" style="left:3078.0px;top:1448.0px;width:38.0px;height:19.0px;background:#bdccdb;border-radius:4px;line-height:19.0px;padding-left:7px;box-sizing:border-box;font-size:15px;color:#000;white-space:nowrap;overflow:hidden"><</div>
<svg class="b" style="left:3102.0px;top:1455.0px" width="8" height="5"><path d="M0.5 0.5 H7.5 L4 4.5 Z" fill="#5b80a5"/></svg>
<svg class="b" style="left:3119.5px;top:1442.7px" width="10" height="22"><path d="M9 5 C9 15 1 -3 1 12.5 C1 28 9 10 9 20 Z" fill="#5b67a5" stroke="#5b67a5" stroke-width="0.6"/></svg>
<div class="b" style="left:3128.0px;top:1443.0px;width:53.0px;height:30.0px;background:#5b67a5;"></div>
<div class="b" style="left:3134.0px;top:1448.0px;width:42.0px;height:20.0px;background:#bdc2db;border-radius:4px;line-height:20.0px;text-align:center;font-size:15px;color:#000;white-space:nowrap"><span style="font-size:1.067em">0.75</span></div>
<svg class="b" style="left:1822.5px;top:1532.0px" width="10" height="22"><path d="M9 5 C9 15 1 -3 1 12.5 C1 28 9 10 9 20" fill="none" stroke="rgba(255,255,255,0.55)" stroke-width="1"/></svg>
<div class="b" style="left:1831.0px;top:1532.0px;width:392.0px;height:54.0px;box-sizing:border-box;border:1px solid rgba(255,255,255,0.55)"></div>
<svg class="b" style="left:1839.5px;top:1538.0px" width="10" height="22"><path d="M9 5 C9 15 1 -3 1 12.5 C1 28 9 10 9 20" fill="none" stroke="rgba(255,255,255,0.55)" stroke-width="1"/></svg>
<div class="b" style="left:1848.0px;top:1538.0px;width:158.0px;height:43.0px;box-sizing:border-box;border:1px solid rgba(255,255,255,0.55)"></div>
<svg class="b" style="left:1856.9px;top:1544.8px" width="10" height="22"><path d="M9 5 C9 15 1 -3 1 12.5 C1 28 9 10 9 20 Z" fill="#a55b80" stroke="#a55b80" stroke-width="0.6"/></svg>
<div class="b" style="left:1866.0px;top:1545.0px;width:28.0px;height:30.0px;background:#a55b80;box-shadow:inset -1px -1px 0 rgba(0,0,0,0.12);"></div>
<div class="b" style="left:1871.0px;top:1550.0px;width:18.0px;height:20.0px;background:#dbbdcc;border-radius:4px;line-height:20.0px;text-align:center;font-size:15px;color:#000;white-space:nowrap"><span style="font-size:1.067em">r</span></div>
<div class="b" style="left:1900.0px;top:1550.0px;width:38.0px;height:19.0px;background:#bdccdb;border-radius:4px;line-height:19.0px;padding-left:7px;box-sizing:border-box;font-size:15px;color:#000;white-space:nowrap;overflow:hidden">></div>
<svg class="b" style="left:1924.0px;top:1557.0px" width="8" height="5"><path d="M0.5 0.5 H7.5 L4 4.5 Z" fill="#5b80a5"/></svg>
<svg class="b" style="left:1941.5px;top:1544.8px" width="10" height="22"><path d="M9 5 C9 15 1 -3 1 12.5 C1 28 9 10 9 20 Z" fill="#5b67a5" stroke="#5b67a5" stroke-width="0.6"/></svg>
<div class="b" style="left:1950.0px;top:1545.0px;width:45.0px;height:30.0px;background:#5b67a5;"></div>
<div class="b" style="left:1956.0px;top:1550.0px;width:34.0px;height:20.0px;background:#bdc2db;border-radius:4px;line-height:20.0px;text-align:center;font-size:15px;color:#000;white-space:nowrap"><span style="font-size:1.067em">0.7</span></div>
<div class="b" style="left:2011.0px;top:1543.0px;width:42.0px;height:20.0px;background:#bdccdb;border-radius:4px;line-height:20.0px;padding-left:7px;box-sizing:border-box;font-size:15px;color:#000;white-space:nowrap;overflow:hidden">且</div>
<svg class="b" style="left:2039.0px;top:1550.5px" width="8" height="5"><path d="M0.5 0.5 H7.5 L4 4.5 Z" fill="#5b80a5"/></svg>
<svg class="b" style="left:2057.5px;top:1538.0px" width="10" height="22"><path d="M9 5 C9 15 1 -3 1 12.5 C1 28 9 10 9 20" fill="none" stroke="rgba(255,255,255,0.55)" stroke-width="1"/></svg>
<div class="b" style="left:2066.0px;top:1538.0px;width:146.0px;height:43.0px;box-sizing:border-box;border:1px solid rgba(255,255,255,0.55)"></div>
<svg class="b" style="left:2075.0px;top:1544.8px" width="10" height="22"><path d="M9 5 C9 15 1 -3 1 12.5 C1 28 9 10 9 20 Z" fill="#a55b80" stroke="#a55b80" stroke-width="0.6"/></svg>
<div class="b" style="left:2084.0px;top:1545.0px;width:28.0px;height:30.0px;background:#a55b80;box-shadow:inset -1px -1px 0 rgba(0,0,0,0.12);"></div>
<div class="b" style="left:2089.0px;top:1550.0px;width:18.0px;height:20.0px;background:#dbbdcc;border-radius:4px;line-height:20.0px;text-align:center;font-size:15px;color:#000;white-space:nowrap"><span style="font-size:1.067em">r</span></div>
<div class="b" style="left:2117.0px;top:1550.0px;width:39.0px;height:19.0px;background:#bdccdb;border-radius:4px;line-height:19.0px;padding-left:7px;box-sizing:border-box;font-size:15px;color:#000;white-space:nowrap;overflow:hidden"><</div>
<svg class="b" style="left:2142.0px;top:1557.0px" width="8" height="5"><path d="M0.5 0.5 H7.5 L4 4.5 Z" fill="#5b80a5"/></svg>
<svg class="b" style="left:2159.2px;top:1544.8px" width="10" height="22"><path d="M9 5 C9 15 1 -3 1 12.5 C1 28 9 10 9 20 Z" fill="#5b67a5" stroke="#5b67a5" stroke-width="0.6"/></svg>
<div class="b" style="left:2168.0px;top:1545.0px;width:32.0px;height:30.0px;background:#5b67a5;"></div>
<div class="b" style="left:2173.0px;top:1550.0px;width:22.0px;height:20.0px;background:#bdc2db;border-radius:4px;line-height:20.0px;text-align:center;font-size:15px;color:#000;white-space:nowrap"><span style="font-size:1.067em">1</span></div>
<div class="b" style="left:2228.0px;top:1537.0px;width:42.0px;height:20.0px;background:#bdccdb;border-radius:4px;line-height:20.0px;padding-left:7px;box-sizing:border-box;font-size:15px;color:#000;white-space:nowrap;overflow:hidden">且</div>
<svg class="b" style="left:2256.0px;top:1544.5px" width="8" height="5"><path d="M0.5 0.5 H7.5 L4 4.5 Z" fill="#5b80a5"/></svg>
<svg class="b" style="left:2273.5px;top:1532.0px" width="10" height="22"><path d="M9 5 C9 15 1 -3 1 12.5 C1 28 9 10 9 20" fill="none" stroke="rgba(255,255,255,0.55)" stroke-width="1"/></svg>
<div class="b" style="left:2282.0px;top:1532.0px;width:401.0px;height:54.0px;box-sizing:border-box;border:1px solid rgba(255,255,255,0.55)"></div>
<svg class="b" style="left:2291.5px;top:1538.0px" width="10" height="22"><path d="M9 5 C9 15 1 -3 1 12.5 C1 28 9 10 9 20" fill="none" stroke="rgba(255,255,255,0.55)" stroke-width="1"/></svg>
<div class="b" style="left:2300.0px;top:1538.0px;width:163.0px;height:43.0px;box-sizing:border-box;border:1px solid rgba(255,255,255,0.55)"></div>
<svg class="b" style="left:2309.4px;top:1544.8px" width="10" height="22"><path d="M9 5 C9 15 1 -3 1 12.5 C1 28 9 10 9 20 Z" fill="#a55b80" stroke="#a55b80" stroke-width="0.6"/></svg>
<div class="b" style="left:2318.0px;top:1545.0px;width:32.0px;height:30.0px;background:#a55b80;box-shadow:inset -1px -1px 0 rgba(0,0,0,0.12);"></div>
<div class="b" style="left:2323.0px;top:1550.0px;width:22.0px;height:20.0px;background:#dbbdcc;border-radius:4px;line-height:20.0px;text-align:center;font-size:15px;color:#000;white-space:nowrap"><span style="font-size:1.067em">g</span></div>
<div class="b" style="left:2356.0px;top:1550.0px;width:39.0px;height:19.0px;background:#bdccdb;border-radius:4px;line-height:19.0px;padding-left:7px;box-sizing:border-box;font-size:15px;color:#000;white-space:nowrap;overflow:hidden"><</div>
<svg class="b" style="left:2381.0px;top:1557.0px" width="8" height="5"><path d="M0.5 0.5 H7.5 L4 4.5 Z" fill="#5b80a5"/></svg>
<svg class="b" style="left:2398.0px;top:1544.8px" width="10" height="22"><path d="M9 5 C9 15 1 -3 1 12.5 C1 28 9 10 9 20 Z" fill="#5b67a5" stroke="#5b67a5" stroke-width="0.6"/></svg>
<div class="b" style="left:2407.0px;top:1545.0px;width:45.0px;height:30.0px;background:#5b67a5;"></div>
<div class="b" style="left:2412.0px;top:1550.0px;width:35.0px;height:20.0px;background:#bdc2db;border-radius:4px;line-height:20.0px;text-align:center;font-size:15px;color:#000;white-space:nowrap"><span style="font-size:1.067em">1.2</span></div>
<div class="b" style="left:2468.0px;top:1544.0px;width:42.0px;height:19.0px;background:#bdccdb;border-radius:4px;line-height:19.0px;padding-left:7px;box-sizing:border-box;font-size:15px;color:#000;white-space:nowrap;overflow:hidden">且</div>
<svg class="b" style="left:2496.0px;top:1551.0px" width="8" height="5"><path d="M0.5 0.5 H7.5 L4 4.5 Z" fill="#5b80a5"/></svg>
<svg class="b" style="left:2513.5px;top:1539.0px" width="10" height="22"><path d="M9 5 C9 15 1 -3 1 12.5 C1 28 9 10 9 20" fill="none" stroke="rgba(255,255,255,0.55)" stroke-width="1"/></svg>
<div class="b" style="left:2522.0px;top:1539.0px;width:149.0px;height:42.0px;box-sizing:border-box;border:1px solid rgba(255,255,255,0.55)"></div>
<svg class="b" style="left:2531.2px;top:1545.0px" width="10" height="22"><path d="M9 5 C9 15 1 -3 1 12.5 C1 28 9 10 9 20 Z" fill="#a55b80" stroke="#a55b80" stroke-width="0.6"/></svg>
<div class="b" style="left:2540.0px;top:1545.0px;width:33.0px;height:31.0px;background:#a55b80;box-shadow:inset -1px -1px 0 rgba(0,0,0,0.12);"></div>
<div class="b" style="left:2545.0px;top:1550.0px;width:23.0px;height:21.0px;background:#dbbdcc;border-radius:4px;line-height:21.0px;text-align:center;font-size:15px;color:#000;white-space:nowrap"><span style="font-size:1.067em">b</span></div>
<div class="b" style="left:2578.0px;top:1551.0px;width:38.0px;height:19.0px;background:#bdccdb;border-radius:4px;line-height:19.0px;padding-left:7px;box-sizing:border-box;font-size:15px;color:#000;white-space:nowrap;overflow:hidden">></div>
<svg class="b" style="left:2602.0px;top:1558.0px" width="8" height="5"><path d="M0.5 0.5 H7.5 L4 4.5 Z" fill="#5b80a5"/></svg>
<svg class="b" style="left:2619.7px;top:1545.0px" width="10" height="22"><path d="M9 5 C9 15 1 -3 1 12.5 C1 28 9 10 9 20 Z" fill="#5b67a5" stroke="#5b67a5" stroke-width="0.6"/></svg>
<div class="b" style="left:2629.0px;top:1545.0px;width:32.0px;height:31.0px;background:#5b67a5;"></div>
<div class="b" style="left:2634.0px;top:1550.0px;width:22.0px;height:21.0px;background:#bdc2db;border-radius:4px;line-height:21.0px;text-align:center;font-size:15px;color:#000;white-space:nowrap"><span style="font-size:1.067em">1</span></div>
<div class="b" style="left:1774.0px;top:1288.0px;width:202.0px;height:31.0px;background:#a5a55b;box-shadow:inset 0 1px 0 rgba(255,255,255,0.28),inset 0 -1px 0 rgba(0,0,0,0.13);"></div>
<div class="b" style="left:1779.0px;top:1294.0px;width:68.0px;height:18.0px;background:#dbdbbd;border-radius:4px;line-height:18.0px;padding-left:6px;box-sizing:border-box;font-size:15px;color:#000;white-space:nowrap;overflow:hidden"><span style="font-size:1.067em">Serial</span></div>
<svg class="b" style="left:1833.0px;top:1300.5px" width="8" height="5"><path d="M0.5 0.5 H7.5 L4 4.5 Z" fill="#a5a55b"/></svg>
<div class="t" style="left:1852.0px;top:1291.2px;height:24px;line-height:24px;font-size:15px;color:#fff">打印</div>
<div class="b" style="left:1888.0px;top:1294.0px;width:73.0px;height:18.0px;background:#dbdbbd;border-radius:4px;line-height:18.0px;padding-left:6px;box-sizing:border-box;font-size:15px;color:#000;white-space:nowrap;overflow:hidden">不换行</div>
<svg class="b" style="left:1947.0px;top:1300.5px" width="8" height="5"><path d="M0.5 0.5 H7.5 L4 4.5 Z" fill="#a5a55b"/></svg>
<svg class="b" style="left:1967.2px;top:1288.3px" width="10" height="22"><path d="M9 5 C9 15 1 -3 1 12.5 C1 28 9 10 9 20 Z" fill="#a5a55b" stroke="#a5a55b" stroke-width="0.6"/></svg>
<svg class="b" style="left:1967.2px;top:1288.3px" width="10" height="22"><path d="M9 5 C9 15 1 -3 1 12.5 C1 28 9 10 9 20 Z" fill="#5ba58c" stroke="#5ba58c" stroke-width="0.6"/></svg>
<div class="b" style="left:1976.0px;top:1288.0px;width:88.0px;height:31.0px;background:#5ba58c;box-shadow:inset 0 1px 0 rgba(255,255,255,0.28),inset 0 -1px 0 rgba(0,0,0,0.13);"></div>
<svg class="b" style="left:1986.7px;top:1293.7px" width="13" height="11" viewBox="0 0 13 11"><path d="M3.2 10.6 C1.3 10.6 0.4 9.2 0.4 7.9 C0.4 5.2 1.8 2.4 5.2 0.4 L5.9 1.3 C4.2 2.6 3.4 3.8 3.5 5.2 C5 5.3 6 6.4 6 7.9 C6 9.5 4.8 10.6 3.2 10.6 Z" fill="#fff"/><path d="M3.2 10.6 C1.3 10.6 0.4 9.2 0.4 7.9 C0.4 5.2 1.8 2.4 5.2 0.4 L5.9 1.3 C4.2 2.6 3.4 3.8 3.5 5.2 C5 5.3 6 6.4 6 7.9 C6 9.5 4.8 10.6 3.2 10.6 Z" transform="translate(6.6 0)" fill="#fff"/></svg>
<div class="b" style="left:2004.0px;top:1294.0px;width:30.0px;height:18.0px;background:#bddbd1;border-radius:4px;line-height:18.0px;text-align:center;font-size:15px;color:#000;white-space:nowrap">红</div>
<svg class="b" style="left:2039.6px;top:1293.7px" width="13" height="11" viewBox="0 0 13 11"><g transform="rotate(180 6.5 5.5)"><path d="M3.2 10.6 C1.3 10.6 0.4 9.2 0.4 7.9 C0.4 5.2 1.8 2.4 5.2 0.4 L5.9 1.3 C4.2 2.6 3.4 3.8 3.5 5.2 C5 5.3 6 6.4 6 7.9 C6 9.5 4.8 10.6 3.2 10.6 Z" fill="#fff"/><path d="M3.2 10.6 C1.3 10.6 0.4 9.2 0.4 7.9 C0.4 5.2 1.8 2.4 5.2 0.4 L5.9 1.3 C4.2 2.6 3.4 3.8 3.5 5.2 C5 5.3 6 6.4 6 7.9 C6 9.5 4.8 10.6 3.2 10.6 Z" transform="translate(6.6 0)" fill="#fff"/></g></svg>
<svg class="b" style="left:1789.0px;top:1287.3px" width="17" height="7"><path d="M0 0 H17 L11 6 H6 Z" fill="#5ba55b"/></svg>
<svg class="b" style="left:1789.0px;top:1318.0px" width="17" height="7"><path d="M0 0 H17 L11 6 H6 Z" fill="#a5a55b"/></svg>
<div class="b" style="left:1774.0px;top:1386.0px;width:202.0px;height:30.0px;background:#a5a55b;box-shadow:inset 0 1px 0 rgba(255,255,255,0.28),inset 0 -1px 0 rgba(0,0,0,0.13);"></div>
<div class="b" style="left:1779.0px;top:1392.0px;width:68.0px;height:18.0px;background:#dbdbbd;border-radius:4px;line-height:18.0px;padding-left:6px;box-sizing:border-box;font-size:15px;color:#000;white-space:nowrap;overflow:hidden"><span style="font-size:1.067em">Serial</span></div>
<svg class="b" style="left:1833.0px;top:1398.5px" width="8" height="5"><path d="M0.5 0.5 H7.5 L4 4.5 Z" fill="#a5a55b"/></svg>
<div class="t" style="left:1852.0px;top:1388.5px;height:24px;line-height:24px;font-size:15px;color:#fff">打印</div>
<div class="b" style="left:1888.0px;top:1392.0px;width:73.0px;height:18.0px;background:#dbdbbd;border-radius:4px;line-height:18.0px;padding-left:6px;box-sizing:border-box;font-size:15px;color:#000;white-space:nowrap;overflow:hidden">不换行</div>
<svg class="b" style="left:1947.0px;top:1398.5px" width="8" height="5"><path d="M0.5 0.5 H7.5 L4 4.5 Z" fill="#a5a55b"/></svg>
<svg class="b" style="left:1967.2px;top:1385.6px" width="10" height="22"><path d="M9 5 C9 15 1 -3 1 12.5 C1 28 9 10 9 20 Z" fill="#a5a55b" stroke="#a5a55b" stroke-width="0.6"/></svg>
<svg class="b" style="left:1967.2px;top:1385.6px" width="10" height="22"><path d="M9 5 C9 15 1 -3 1 12.5 C1 28 9 10 9 20 Z" fill="#5ba58c" stroke="#5ba58c" stroke-width="0.6"/></svg>
<div class="b" style="left:1976.0px;top:1386.0px;width:88.0px;height:30.0px;background:#5ba58c;box-shadow:inset 0 1px 0 rgba(255,255,255,0.28),inset 0 -1px 0 rgba(0,0,0,0.13);"></div>
<svg class="b" style="left:1986.7px;top:1391.0px" width="13" height="11" viewBox="0 0 13 11"><path d="M3.2 10.6 C1.3 10.6 0.4 9.2 0.4 7.9 C0.4 5.2 1.8 2.4 5.2 0.4 L5.9 1.3 C4.2 2.6 3.4 3.8 3.5 5.2 C5 5.3 6 6.4 6 7.9 C6 9.5 4.8 10.6 3.2 10.6 Z" fill="#fff"/><path d="M3.2 10.6 C1.3 10.6 0.4 9.2 0.4 7.9 C0.4 5.2 1.8 2.4 5.2 0.4 L5.9 1.3 C4.2 2.6 3.4 3.8 3.5 5.2 C5 5.3 6 6.4 6 7.9 C6 9.5 4.8 10.6 3.2 10.6 Z" transform="translate(6.6 0)" fill="#fff"/></svg>
<div class="b" style="left:2004.0px;top:1392.0px;width:30.0px;height:18.0px;background:#bddbd1;border-radius:4px;line-height:18.0px;text-align:center;font-size:15px;color:#000;white-space:nowrap">绿</div>
<svg class="b" style="left:2039.6px;top:1391.0px" width="13" height="11" viewBox="0 0 13 11"><g transform="rotate(180 6.5 5.5)"><path d="M3.2 10.6 C1.3 10.6 0.4 9.2 0.4 7.9 C0.4 5.2 1.8 2.4 5.2 0.4 L5.9 1.3 C4.2 2.6 3.4 3.8 3.5 5.2 C5 5.3 6 6.4 6 7.9 C6 9.5 4.8 10.6 3.2 10.6 Z" fill="#fff"/><path d="M3.2 10.6 C1.3 10.6 0.4 9.2 0.4 7.9 C0.4 5.2 1.8 2.4 5.2 0.4 L5.9 1.3 C4.2 2.6 3.4 3.8 3.5 5.2 C5 5.3 6 6.4 6 7.9 C6 9.5 4.8 10.6 3.2 10.6 Z" transform="translate(6.6 0)" fill="#fff"/></g></svg>
<svg class="b" style="left:1789.0px;top:1384.6px" width="17" height="7"><path d="M0 0 H17 L11 6 H6 Z" fill="#5ba55b"/></svg>
<svg class="b" style="left:1789.0px;top:1415.5px" width="17" height="7"><path d="M0 0 H17 L11 6 H6 Z" fill="#a5a55b"/></svg>
<div class="b" style="left:1774.0px;top:1494.0px;width:202.0px;height:30.0px;background:#a5a55b;box-shadow:inset 0 1px 0 rgba(255,255,255,0.28),inset 0 -1px 0 rgba(0,0,0,0.13);"></div>
<div class="b" style="left:1779.0px;top:1500.0px;width:68.0px;height:17.0px;background:#dbdbbd;border-radius:4px;line-height:17.0px;padding-left:6px;box-sizing:border-box;font-size:15px;color:#000;white-space:nowrap;overflow:hidden"><span style="font-size:1.067em">Serial</span></div>
<svg class="b" style="left:1833.0px;top:1506.0px" width="8" height="5"><path d="M0.5 0.5 H7.5 L4 4.5 Z" fill="#a5a55b"/></svg>
<div class="t" style="left:1852.0px;top:1496.4px;height:24px;line-height:24px;font-size:15px;color:#fff">打印</div>
<div class="b" style="left:1888.0px;top:1500.0px;width:73.0px;height:17.0px;background:#dbdbbd;border-radius:4px;line-height:17.0px;padding-left:6px;box-sizing:border-box;font-size:15px;color:#000;white-space:nowrap;overflow:hidden">不换行</div>
<svg class="b" style="left:1947.0px;top:1506.0px" width="8" height="5"><path d="M0.5 0.5 H7.5 L4 4.5 Z" fill="#a5a55b"/></svg>
<svg class="b" style="left:1967.2px;top:1493.8px" width="10" height="22"><path d="M9 5 C9 15 1 -3 1 12.5 C1 28 9 10 9 20 Z" fill="#a5a55b" stroke="#a5a55b" stroke-width="0.6"/></svg>
<svg class="b" style="left:1967.2px;top:1493.8px" width="10" height="22"><path d="M9 5 C9 15 1 -3 1 12.5 C1 28 9 10 9 20 Z" fill="#5ba58c" stroke="#5ba58c" stroke-width="0.6"/></svg>
<div class="b" style="left:1976.0px;top:1494.0px;width:88.0px;height:30.0px;background:#5ba58c;box-shadow:inset 0 1px 0 rgba(255,255,255,0.28),inset 0 -1px 0 rgba(0,0,0,0.13);"></div>
<svg class="b" style="left:1986.7px;top:1498.9px" width="13" height="11" viewBox="0 0 13 11"><path d="M3.2 10.6 C1.3 10.6 0.4 9.2 0.4 7.9 C0.4 5.2 1.8 2.4 5.2 0.4 L5.9 1.3 C4.2 2.6 3.4 3.8 3.5 5.2 C5 5.3 6 6.4 6 7.9 C6 9.5 4.8 10.6 3.2 10.6 Z" fill="#fff"/><path d="M3.2 10.6 C1.3 10.6 0.4 9.2 0.4 7.9 C0.4 5.2 1.8 2.4 5.2 0.4 L5.9 1.3 C4.2 2.6 3.4 3.8 3.5 5.2 C5 5.3 6 6.4 6 7.9 C6 9.5 4.8 10.6 3.2 10.6 Z" transform="translate(6.6 0)" fill="#fff"/></svg>
<div class="b" style="left:2004.0px;top:1500.0px;width:30.0px;height:17.0px;background:#bddbd1;border-radius:4px;line-height:17.0px;text-align:center;font-size:15px;color:#000;white-space:nowrap">黄</div>
<svg class="b" style="left:2039.5px;top:1498.9px" width="13" height="11" viewBox="0 0 13 11"><g transform="rotate(180 6.5 5.5)"><path d="M3.2 10.6 C1.3 10.6 0.4 9.2 0.4 7.9 C0.4 5.2 1.8 2.4 5.2 0.4 L5.9 1.3 C4.2 2.6 3.4 3.8 3.5 5.2 C5 5.3 6 6.4 6 7.9 C6 9.5 4.8 10.6 3.2 10.6 Z" fill="#fff"/><path d="M3.2 10.6 C1.3 10.6 0.4 9.2 0.4 7.9 C0.4 5.2 1.8 2.4 5.2 0.4 L5.9 1.3 C4.2 2.6 3.4 3.8 3.5 5.2 C5 5.3 6 6.4 6 7.9 C6 9.5 4.8 10.6 3.2 10.6 Z" transform="translate(6.6 0)" fill="#fff"/></g></svg>
<svg class="b" style="left:1789.0px;top:1492.8px" width="17" height="7"><path d="M0 0 H17 L11 6 H6 Z" fill="#5ba55b"/></svg>
<svg class="b" style="left:1789.0px;top:1523.1px" width="17" height="7"><path d="M0 0 H17 L11 6 H6 Z" fill="#a5a55b"/></svg>
<div class="b" style="left:1774.0px;top:1590.0px;width:202.0px;height:31.0px;background:#a5a55b;box-shadow:inset 0 1px 0 rgba(255,255,255,0.28),inset 0 -1px 0 rgba(0,0,0,0.13);"></div>
<div class="b" style="left:1779.0px;top:1596.0px;width:68.0px;height:18.0px;background:#dbdbbd;border-radius:4px;line-height:18.0px;padding-left:6px;box-sizing:border-box;font-size:15px;color:#000;white-space:nowrap;overflow:hidden"><span style="font-size:1.067em">Serial</span></div>
<svg class="b" style="left:1833.0px;top:1602.5px" width="8" height="5"><path d="M0.5 0.5 H7.5 L4 4.5 Z" fill="#a5a55b"/></svg>
<div class="t" style="left:1852.0px;top:1593.2px;height:24px;line-height:24px;font-size:15px;color:#fff">打印</div>
<div class="b" style="left:1888.0px;top:1596.0px;width:73.0px;height:18.0px;background:#dbdbbd;border-radius:4px;line-height:18.0px;padding-left:6px;box-sizing:border-box;font-size:15px;color:#000;white-space:nowrap;overflow:hidden">不换行</div>
<svg class="b" style="left:1947.0px;top:1602.5px" width="8" height="5"><path d="M0.5 0.5 H7.5 L4 4.5 Z" fill="#a5a55b"/></svg>
<svg class="b" style="left:1967.2px;top:1590.3px" width="10" height="22"><path d="M9 5 C9 15 1 -3 1 12.5 C1 28 9 10 9 20 Z" fill="#a5a55b" stroke="#a5a55b" stroke-width="0.6"/></svg>
<svg class="b" style="left:1967.2px;top:1590.3px" width="10" height="22"><path d="M9 5 C9 15 1 -3 1 12.5 C1 28 9 10 9 20 Z" fill="#5ba58c" stroke="#5ba58c" stroke-width="0.6"/></svg>
<div class="b" style="left:1976.0px;top:1590.0px;width:88.0px;height:31.0px;background:#5ba58c;box-shadow:inset 0 1px 0 rgba(255,255,255,0.28),inset 0 -1px 0 rgba(0,0,0,0.13);"></div>
<svg class="b" style="left:1986.7px;top:1595.7px" width="13" height="11" viewBox="0 0 13 11"><path d="M3.2 10.6 C1.3 10.6 0.4 9.2 0.4 7.9 C0.4 5.2 1.8 2.4 5.2 0.4 L5.9 1.3 C4.2 2.6 3.4 3.8 3.5 5.2 C5 5.3 6 6.4 6 7.9 C6 9.5 4.8 10.6 3.2 10.6 Z" fill="#fff"/><path d="M3.2 10.6 C1.3 10.6 0.4 9.2 0.4 7.9 C0.4 5.2 1.8 2.4 5.2 0.4 L5.9 1.3 C4.2 2.6 3.4 3.8 3.5 5.2 C5 5.3 6 6.4 6 7.9 C6 9.5 4.8 10.6 3.2 10.6 Z" transform="translate(6.6 0)" fill="#fff"/></svg>
<div class="b" style="left:2004.0px;top:1596.0px;width:30.0px;height:18.0px;background:#bddbd1;border-radius:4px;line-height:18.0px;text-align:center;font-size:15px;color:#000;white-space:nowrap">蓝</div>
<svg class="b" style="left:2039.5px;top:1595.7px" width="13" height="11" viewBox="0 0 13 11"><g transform="rotate(180 6.5 5.5)"><path d="M3.2 10.6 C1.3 10.6 0.4 9.2 0.4 7.9 C0.4 5.2 1.8 2.4 5.2 0.4 L5.9 1.3 C4.2 2.6 3.4 3.8 3.5 5.2 C5 5.3 6 6.4 6 7.9 C6 9.5 4.8 10.6 3.2 10.6 Z" fill="#fff"/><path d="M3.2 10.6 C1.3 10.6 0.4 9.2 0.4 7.9 C0.4 5.2 1.8 2.4 5.2 0.4 L5.9 1.3 C4.2 2.6 3.4 3.8 3.5 5.2 C5 5.3 6 6.4 6 7.9 C6 9.5 4.8 10.6 3.2 10.6 Z" transform="translate(6.6 0)" fill="#fff"/></g></svg>
<svg class="b" style="left:1789.0px;top:1589.3px" width="17" height="7"><path d="M0 0 H17 L11 6 H6 Z" fill="#5ba55b"/></svg>
<svg class="b" style="left:1789.0px;top:1620.1px" width="17" height="7"><path d="M0 0 H17 L11 6 H6 Z" fill="#a5a55b"/></svg>
<div class="b" style="left:1774.0px;top:1690.0px;width:202.0px;height:29.0px;background:#a5a55b;box-shadow:inset 0 1px 0 rgba(255,255,255,0.28),inset 0 -1px 0 rgba(0,0,0,0.13);"></div>
<div class="b" style="left:1779.0px;top:1696.0px;width:68.0px;height:16.0px;background:#dbdbbd;border-radius:4px;line-height:16.0px;padding-left:6px;box-sizing:border-box;font-size:15px;color:#000;white-space:nowrap;overflow:hidden"><span style="font-size:1.067em">Serial</span></div>
<svg class="b" style="left:1833.0px;top:1701.5px" width="8" height="5"><path d="M0.5 0.5 H7.5 L4 4.5 Z" fill="#a5a55b"/></svg>
<div class="t" style="left:1852.0px;top:1691.9px;height:24px;line-height:24px;font-size:15px;color:#fff">打印</div>
<div class="b" style="left:1888.0px;top:1696.0px;width:73.0px;height:16.0px;background:#dbdbbd;border-radius:4px;line-height:16.0px;padding-left:6px;box-sizing:border-box;font-size:15px;color:#000;white-space:nowrap;overflow:hidden">不换行</div>
<svg class="b" style="left:1947.0px;top:1701.5px" width="8" height="5"><path d="M0.5 0.5 H7.5 L4 4.5 Z" fill="#a5a55b"/></svg>
<svg class="b" style="left:1967.2px;top:1689.5px" width="10" height="22"><path d="M9 5 C9 15 1 -3 1 12.5 C1 28 9 10 9 20 Z" fill="#a5a55b" stroke="#a5a55b" stroke-width="0.6"/></svg>
<svg class="b" style="left:1967.2px;top:1689.5px" width="10" height="22"><path d="M9 5 C9 15 1 -3 1 12.5 C1 28 9 10 9 20 Z" fill="#5ba58c" stroke="#5ba58c" stroke-width="0.6"/></svg>
<div class="b" style="left:1976.0px;top:1690.0px;width:179.0px;height:29.0px;background:#5ba58c;box-shadow:inset 0 1px 0 rgba(255,255,255,0.28),inset 0 -1px 0 rgba(0,0,0,0.13);"></div>
<svg class="b" style="left:1986.7px;top:1694.4px" width="13" height="11" viewBox="0 0 13 11"><path d="M3.2 10.6 C1.3 10.6 0.4 9.2 0.4 7.9 C0.4 5.2 1.8 2.4 5.2 0.4 L5.9 1.3 C4.2 2.6 3.4 3.8 3.5 5.2 C5 5.3 6 6.4 6 7.9 C6 9.5 4.8 10.6 3.2 10.6 Z" fill="#fff"/><path d="M3.2 10.6 C1.3 10.6 0.4 9.2 0.4 7.9 C0.4 5.2 1.8 2.4 5.2 0.4 L5.9 1.3 C4.2 2.6 3.4 3.8 3.5 5.2 C5 5.3 6 6.4 6 7.9 C6 9.5 4.8 10.6 3.2 10.6 Z" transform="translate(6.6 0)" fill="#fff"/></svg>
<div class="b" style="left:2004.0px;top:1696.0px;width:122.0px;height:16.0px;background:#bddbd1;border-radius:4px;line-height:16.0px;text-align:center;font-size:15px;color:#000;white-space:nowrap">不是匹配的颜色</div>
<svg class="b" style="left:2131.3px;top:1694.4px" width="13" height="11" viewBox="0 0 13 11"><g transform="rotate(180 6.5 5.5)"><path d="M3.2 10.6 C1.3 10.6 0.4 9.2 0.4 7.9 C0.4 5.2 1.8 2.4 5.2 0.4 L5.9 1.3 C4.2 2.6 3.4 3.8 3.5 5.2 C5 5.3 6 6.4 6 7.9 C6 9.5 4.8 10.6 3.2 10.6 Z" fill="#fff"/><path d="M3.2 10.6 C1.3 10.6 0.4 9.2 0.4 7.9 C0.4 5.2 1.8 2.4 5.2 0.4 L5.9 1.3 C4.2 2.6 3.4 3.8 3.5 5.2 C5 5.3 6 6.4 6 7.9 C6 9.5 4.8 10.6 3.2 10.6 Z" transform="translate(6.6 0)" fill="#fff"/></g></svg>
<svg class="b" style="left:1789.0px;top:1688.5px" width="17" height="7"><path d="M0 0 H17 L11 6 H6 Z" fill="#5ba55b"/></svg>
<svg class="b" style="left:1789.0px;top:1718.3px" width="17" height="7"><path d="M0 0 H17 L11 6 H6 Z" fill="#a5a55b"/></svg>
<svg class="b" style="left:1789.0px;top:1652.6px" width="17" height="7"><path d="M0 0 H17 L11 6 H6 Z" fill="#5ba55b"/></svg>
<div class="b" style="left:1721.0px;top:1732.0px;width:169.0px;height:43.0px;background:#5ba55b;"></div>
<svg class="b" style="left:1736.7px;top:1731.2px" width="17" height="7"><path d="M0 0 H17 L11 6 H6 Z" fill="#5ba55b"/></svg>
<div class="t" style="left:1731.3px;top:1741.7px;height:24px;line-height:24px;font-size:15px;color:#fff">延时</div>
<div class="b" style="left:1769.0px;top:1744.0px;width:57.0px;height:19.0px;background:#bddbbd;border-radius:4px;line-height:19.0px;padding-left:6px;box-sizing:border-box;font-size:15px;color:#000;white-space:nowrap;overflow:hidden">毫秒</div>
<svg class="b" style="left:1812.0px;top:1751.0px" width="8" height="5"><path d="M0.5 0.5 H7.5 L4 4.5 Z" fill="#5ba55b"/></svg>
<svg class="b" style="left:1829.3px;top:1739.0px" width="10" height="22"><path d="M9 5 C9 15 1 -3 1 12.5 C1 28 9 10 9 20 Z" fill="#bdc2db" stroke="#bdc2db" stroke-width="0.6"/></svg>
<div class="b" style="left:1838.0px;top:1739.0px;width:42.0px;height:30.0px;background:#bdc2db;"></div>
<div class="b" style="left:1844.0px;top:1744.0px;width:28.0px;height:20.0px;background:#e5e7f1;border-radius:4px;line-height:20.0px;text-align:center;font-size:15px;color:#000;white-space:nowrap"><span style="font-size:1.067em">10</span></div>
<svg class="b" style="left:1736.7px;top:1774.0px" width="17" height="7"><path d="M0 0 H17 L11 6 H6 Z" fill="#5ba55b"/></svg>
<div class="b" style="left:1721.3px;top:382.2px;width:1.2px;height:1395.2px;background:rgba(255,255,255,0.6)"></div>
<div class="b" style="left:1742.6px;top:412.3px;width:1.2px;height:123.1px;background:rgba(255,255,255,0.6)"></div>
<div class="b" style="left:1774.0px;top:1288.3px;width:1.2px;height:32.7px;background:rgba(255,255,255,0.6)"></div>
<div class="b" style="left:1774.0px;top:1385.6px;width:1.2px;height:31.8px;background:rgba(255,255,255,0.6)"></div>
<div class="b" style="left:1774.0px;top:1493.8px;width:1.2px;height:30.3px;background:rgba(255,255,255,0.6)"></div>
<div class="b" style="left:1774.0px;top:1590.3px;width:1.2px;height:30.8px;background:rgba(255,255,255,0.6)"></div>
<div class="b" style="left:1774.0px;top:1653.6px;width:1.2px;height:24.9px;background:rgba(255,255,255,0.6)"></div>
<div class="b" style="left:1774.0px;top:1689.5px;width:1.2px;height:29.8px;background:rgba(255,255,255,0.6)"></div>
<div style="position:absolute;left:3818px;top:508.5px;width:18px;height:1096.5px;background:#cccccc;border-radius:9px"></div>
<div style="position:absolute;left:1077px;top:2016px;width:2072px;height:18px;background:#cccccc;border-radius:9px"></div>
<svg style="position:absolute;left:3708px;top:1414px" width="74" height="110" viewBox="0 0 74 110"><circle cx="37" cy="13" r="9" fill="none" stroke="#b6bdc1" stroke-width="5"/><path d="M2 48 Q3 20 30 15 L44 15 Q71 20 72 48 V96 Q72 107 61 107 H13 Q2 107 2 96 Z" fill="#b6bdc1"/><path d="M11 56 H57 V67" fill="none" stroke="#fff" stroke-width="6"/><circle cx="57" cy="67" r="3" fill="#fff"/></svg>
<svg style="position:absolute;left:3729px;top:1561px" width="46" height="46" viewBox="0 0 46 46"><path d="M2 2 H14 L10 6 L17 13 L13 17 L6 10 L2 14 Z" fill="#b6bdc1"/><path d="M44 2 H32 L36 6 L29 13 L33 17 L40 10 L44 14 Z" fill="#b6bdc1"/><path d="M2 44 H14 L10 40 L17 33 L13 29 L6 36 L2 32 Z" fill="#b6bdc1"/><path d="M44 44 H32 L36 40 L29 33 L33 29 L40 36 L44 32 Z" fill="#b6bdc1"/></svg>
<svg style="position:absolute;left:3722px;top:1645px" width="60" height="60" viewBox="0 0 60 60"><circle cx="30" cy="29.5" r="20.5" fill="none" stroke="#cfcfcf" stroke-width="4"/><circle cx="30" cy="29.5" r="7.5" fill="#cfcfcf"/><path d="M30 2 V10 M30 49 V57 M3 29.5 H10 M50 29.5 H57" stroke="#cfcfcf" stroke-width="3.5"/></svg>
<svg style="position:absolute;left:3722px;top:1720px" width="60" height="60" viewBox="0 0 60 60"><circle cx="30" cy="30" r="26.5" fill="none" stroke="#cfcfcf" stroke-width="3.2"/><path d="M30 17.5 V42.5 M17.5 30 H42.5" stroke="#cfcfcf" stroke-width="3.6"/></svg>
<svg style="position:absolute;left:3722px;top:1779px" width="60" height="60" viewBox="0 0 60 60"><circle cx="30" cy="30" r="26.5" fill="none" stroke="#cfcfcf" stroke-width="3.2"/><path d="M17.5 30 H42.5" stroke="#cfcfcf" stroke-width="3.6"/></svg>
<svg style="position:absolute;left:3700px;top:1880px" width="76" height="98" viewBox="0 0 76 98"><path d="M22 8.5 L26 3.5 Q27 2.5 29 2.5 H47 Q49 2.5 50 3.5 L54 8.5 H75 V19 H1 V8.5 Z" fill="#cfcfcf"/><path d="M6.5 24 H69.5 V89 Q69.5 97 61.5 97 H14.5 Q6.5 97 6.5 89 Z" fill="#cfcfcf"/></svg>
<div style="position:absolute;left:17.5px;top:1360px;width:339px;height:61px;box-sizing:border-box;border:6.5px solid #ff5064;border-radius:7px"></div>
<svg style="position:absolute;left:0;top:0;pointer-events:none" width="3840" height="2076"><path d="M291 1395 L328 1381 L326 1390.5 L799 1485.5 L323 1413.5 L314 1414.5 Z" fill="#ff5064"/></svg>
</body></html>
